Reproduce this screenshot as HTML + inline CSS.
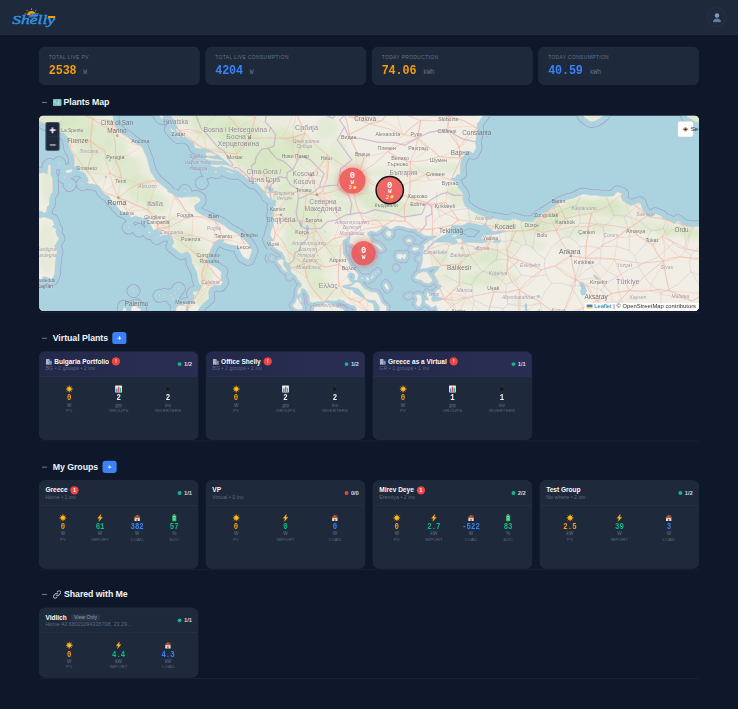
<!DOCTYPE html>
<html lang="en">
<head>
<meta charset="utf-8">
<title>Shelly Solar Dashboard</title>
<style>
*{box-sizing:border-box;margin:0;padding:0}
html,body{width:738px;height:709px;overflow:hidden;background:#0f172a}
#vp{position:absolute;left:0;top:0;width:738px;height:709px;overflow:hidden;overflow:clip;contain:strict}
body{font-family:"Liberation Sans",sans-serif;color:#f1f5f9}
#app{width:1512px;height:1453px;transform:scale(0.488095);transform-origin:0 0;background:#0f172a;position:relative}
.mono{font-family:"Liberation Mono",monospace}
header{height:71px;background:#1e293b;border-bottom:1px solid #2b374b;position:relative}
.logo{position:absolute;left:24px;top:17px;width:96px;height:42px}
.user{position:absolute;right:24px;top:15px;width:40px;height:40px;border-radius:50%;background:#1f2a3d;border:1.5px solid #2d3b52}
.user svg{position:absolute;left:11px;top:10px}
main{padding:25px 80px 0 80px}
.stats{display:flex;gap:12px;height:78px;margin-bottom:22px}
.stat{flex:1;background:#1e293b;border:1px solid #283548;border-radius:12px;padding:15px 19px 0 19px}
.stat .l{font-size:10px;letter-spacing:.8px;color:#64748b;text-transform:uppercase;line-height:11px;height:11px}
.stat .v{margin-top:8.5px;line-height:28px;height:28px;white-space:nowrap}
.stat .v b{font-family:"Liberation Mono",monospace;font-size:24px;font-weight:700;letter-spacing:-.2px;display:inline-block;transform:scaleY(1.14);transform-origin:50% 72%}
.stat .v i{font-family:"Liberation Mono",monospace;font-style:normal;font-size:13px;color:#64748b;margin-left:14px}
.amber{color:#f59e0b}.blue{color:#3b82f6}.green{color:#10b981}.white{color:#f1f5f9}
section{border-bottom:1px solid #212c40;padding-bottom:2px;margin-bottom:39px}
.sh{display:flex;align-items:center;height:25px;padding-left:6px;margin-bottom:16px;position:relative}
.sh>*{position:relative;top:1px}
.sh .tg{top:1px}
.sh .tg{width:10px;height:2px;background:#6f7e95;font-size:0;margin-right:12px;overflow:hidden}
.sh h2{font-size:18px;font-weight:700;color:#f1f5f9;line-height:25px;display:flex;align-items:center;letter-spacing:-.1px}
.sh h2 svg{margin-right:3px}
.sh .add{width:29px;height:25px;border-radius:6px;background:#3b82f6;margin-left:9px;position:relative}
.sh .add:before{content:"";position:absolute;left:11px;top:12px;width:7px;height:1.6px;background:#fff}
.sh .add:after{content:"";position:absolute;left:13.7px;top:9.3px;width:1.6px;height:7px;background:#fff}
#map{height:400px;border-radius:9px;overflow:hidden;position:relative;background:#aad3df}
#map>svg{position:absolute;left:0;top:0;width:1352px;height:400px;display:block}
.zoomc{position:absolute;left:13px;top:13px;width:29px;height:59px;background:#1e293b;border:1px solid #334155;border-radius:4px}
.zoomc:before{content:"";position:absolute;left:0;right:0;top:29px;height:1px;background:#334155}
.zoomc i{position:absolute;background:#fff}
.eyec{position:absolute;left:1308px;top:11px;width:33px;height:33px;background:#fff;border-radius:5px;border:1px solid #c9c9c9}
.eyetxt{position:absolute;left:1335px;top:20px;font-size:12.5px;font-weight:400;color:#222;line-height:16px}
.attr{position:absolute;right:0;bottom:0;height:17.5px;background:rgba(255,255,255,.82);font-size:12px;line-height:17.5px;padding:0 6px 0 5px;color:#333;white-space:nowrap;border-top-left-radius:2px}
.attr a{color:#0078a8;text-decoration:none}
.attr .flag{display:inline-block;width:12px;height:8px;vertical-align:-0.5px;margin-right:3px;background:linear-gradient(#4c7be1 50%,#ffd500 50%)}
.mk{position:absolute;border-radius:50%;background:rgba(239,80,80,.86);color:#fff;text-align:center;font-family:"Liberation Mono",monospace}
.mk span{position:absolute;left:0;right:0;display:block;text-align:center}
.mk .n{font-weight:700;font-size:18px;line-height:19px;transform:scaleY(1.08);margin-top:1px}
.mk .u{font-size:10px;line-height:11px;font-weight:700;transform:scaleX(1.25);margin-top:1px}
.mk .c{font-size:10.5px;line-height:9px;margin-top:1px;font-family:"Liberation Sans",sans-serif;padding-right:9px}
.mk .c i{position:absolute;left:50%;margin-left:1.5px;top:1.5px;width:5.5px;height:6px;background:#fde047;border-radius:2px;transform:skewX(-14deg)}
.grid{display:flex;gap:16px}
.card{width:326px;height:181px;background:#1e293b;border:1px solid #283548;border-radius:12px;overflow:hidden;position:relative}
.card.short{height:142.5px}
.ch{height:51px;border-bottom:1px solid #2c394e;padding:11px 12px 0 12px;position:relative}
.vp .ch{background:linear-gradient(100deg,#22294a,#2b2e54);border-bottom-color:#32375c}
.ch .t{font-size:13.4px;font-weight:700;line-height:17px;height:17px;color:#f8fafc;display:flex;align-items:center;white-space:nowrap}
.ch .t svg{margin-right:4px}
.ch .s{font-size:11px;line-height:13px;color:#5b6a82;margin-top:-1px;white-space:nowrap}
.bd{display:inline-block;width:17px;height:17px;border-radius:50%;background:#ef4444;color:#fff;font-size:10px;font-weight:700;line-height:17px;text-align:center;margin-left:6px}
.vo{display:inline-block;margin-left:8px;font-size:10.5px;font-weight:400;color:#94a3b8;background:#283447;border-radius:3px;padding:0 7px;line-height:15px;height:15px}
.st{position:absolute;right:12px;top:18px;font-size:12px;font-weight:700;color:#cbd5e1;line-height:14px;display:flex;align-items:center;letter-spacing:-.2px}
.st:before{content:"";width:8px;height:8px;border-radius:50%;background:#10b981;margin-right:5px}
.st.red:before{background:#ef4444}
.ms{display:flex;padding:17px 10px 0 10px}
.m{flex:1;text-align:center}
.m .ic{height:17px;display:block;margin:0 auto}
.m .ic svg{display:block;margin:0 auto}
.m .n{font-family:"Liberation Mono",monospace;font-weight:700;font-size:15px;line-height:16px;margin-top:2.5px;display:block;transform:scaleY(1.13)}
.m .u{font-size:9.5px;line-height:12px;color:#64748b;display:block;margin-top:-0.5px}
.m .k{font-size:9px;line-height:11px;color:#5a6981;display:block;margin-top:-0.5px;letter-spacing:.3px;text-transform:uppercase}
</style>
</head>
<body>
<svg width="0" height="0" style="position:absolute">
<defs>
<symbol id="i-sun" viewBox="0 0 16 16"><g stroke="#f59e0b" stroke-width="1.8" stroke-linecap="round"><path d="M8 1.8v1.6M8 12.6V14.2M1.8 8h1.6M12.6 8h1.6M3.6 3.6l1.2 1.2M11.2 11.2l1.2 1.2M3.6 12.4l1.2-1.2M11.2 4.8l1.2-1.2"/></g><circle cx="8" cy="8" r="4.3" fill="#fbbf24" stroke="#f59e0b" stroke-width="1"/></symbol>
<symbol id="i-bolt" viewBox="0 0 16 16"><path d="M9.8 0.8L3.2 9h3.9L5.6 15.2 12.8 6.6H8.7z" fill="#fbbf24" stroke="#f59e0b" stroke-width=".8" stroke-linejoin="round"/></symbol>
<symbol id="i-house" viewBox="0 0 16 16"><path d="M2.6 7.2h10.8V14.6H2.6z" fill="#f3e3cf"/><path d="M8 1.2L.8 7.8h14.4z" fill="#b5532f"/><path d="M6.6 10h2.8v4.6H6.6z" fill="#8a5a3c"/><path d="M3.6 8.6h2v2h-2zM10.4 8.6h2v2h-2z" fill="#7cc4ee"/><path d="M11 2.2h1.8v3H11z" fill="#9a4a2a"/></symbol>
<symbol id="i-bat" viewBox="0 0 16 16"><rect x="6" y=".6" width="4" height="2" rx=".6" fill="#9aa5b1"/><rect x="3.6" y="2" width="8.8" height="13.4" rx="1.6" fill="#22a35a"/><rect x="5.2" y="4" width="5.6" height="9.6" rx=".8" fill="#7be495"/><rect x="5.2" y="6.4" width="5.6" height="1" fill="#22a35a"/><rect x="5.2" y="9.6" width="5.6" height="1" fill="#22a35a"/></symbol>
<symbol id="i-chart" viewBox="0 0 16 16"><rect x="1" y="1" width="14" height="14" rx="1.2" fill="#e8eef5"/><rect x="2.8" y="7" width="2.8" height="7" fill="#3b82f6"/><rect x="6.6" y="3.4" width="2.8" height="10.6" fill="#ef4444"/><rect x="10.4" y="5.6" width="2.8" height="8.4" fill="#22c55e"/></symbol>
<symbol id="i-plug" viewBox="0 0 16 16"><path d="M9.2 1.2l1.3 1.3-2 2 2.6 2.6 2-2 1.3 1.3-2 2 .9.9-1.7 1.7c-1.5 1.5-3.6 1.6-5.1.5L3.6 14.4 1.8 12.600l2.9-2.9c-1.1-1.5-1-3.6.5-5.100l1.7-1.7.9.9z" fill="#14171e" stroke="#4a4f5c" stroke-width=".7"/></symbol>
<symbol id="i-bld" viewBox="0 0 16 16"><rect x="1.4" y="2" width="8.4" height="13" fill="#c3cad6"/><rect x="9.8" y="6" width="5" height="9" fill="#9aa5b8"/><g fill="#5f7aa8"><rect x="2.8" y="3.6" width="1.8" height="1.8"/><rect x="6.2" y="3.6" width="1.8" height="1.8"/><rect x="2.8" y="6.8" width="1.8" height="1.8"/><rect x="6.2" y="6.8" width="1.8" height="1.8"/><rect x="2.8" y="10" width="1.8" height="1.8"/><rect x="6.2" y="10" width="1.8" height="1.8"/><rect x="11.4" y="7.8" width="1.8" height="1.8"/><rect x="11.4" y="11" width="1.8" height="1.8"/></g><rect x="4.6" y="12.6" width="2" height="2.4" fill="#6b5a4a"/></symbol>
<symbol id="i-map" viewBox="0 0 20 16"><rect x=".8" y=".8" width="17.4" height="14.4" rx="1" fill="#6fbfe8"/><path d="M2.5 4.5c1.5-1.5 3.5-1 4 .5s-.5 3-2 3.5-2.5-.5-2-4zM9 9c1.5-2 4-2.5 5.5-1s1.5 4-.5 5-4.5.5-5.5-1 0-2 .5-3zM12 2.5c1-.8 2.5-.5 3 .5s-.5 2-1.5 2-2-1.5-1.5-2.5z" fill="#b6dc7a"/><path d="M6.600.8v14.400M12.400.8v14.4" stroke="#e8f3fa" stroke-width=".8" opacity=".7"/><rect x=".8" y=".8" width="17.4" height="14.4" rx="1" fill="none" stroke="#cfe3ee" stroke-width="1"/></symbol>
<symbol id="i-link" viewBox="0 0 16 16"><g fill="none" stroke="#9aa6b6" stroke-width="1.9" stroke-linecap="round"><path d="M6.8 9.200a3.1 3.1 0 0 0 4.4 0l2.6-2.600a3.1 3.1 0 0 0-4.4-4.400L8.3 3.3"/><path d="M9.2 6.800a3.1 3.1 0 0 0-4.4 0L2.2 9.400a3.1 3.1 0 0 0 4.4 4.400l1.1-1.1"/></g></symbol>
</defs>
</svg>
<div id="vp"><div id="app">
<header>
  <svg class="logo" viewBox="0 0 96 42">
    <g stroke="#f5a524" stroke-width="1.7" stroke-linecap="round"><path d="M40.5 2.4v-2M32.600 5.6l-1.700-1.700M48.400 5.6l1.700-1.700M29.400 11.5h-2.200M51.600 11.5h2.2"/></g>
    <path d="M31.500 14.5a9 9 0 0 1 18 0z" fill="#f59e0b"/>
    <path d="M39 10.5h17.5l-5 8.500H33z" fill="#2a6cb4"/>
    <path d="M44 10.5l-5 8.500M50 10.5l-5 8.500M36.500 14.5h17.5" stroke="#6fb0ea" stroke-width=".8" fill="none"/>
    <text x="1" y="31.2" font-family="Liberation Serif, serif" font-style="italic" font-weight="7" font-size="27.5" fill="#3192e0" stroke="#3192e0" stroke-width=".9" textLength="88" lengthAdjust="spacingAndGlyphs">Shelly</text>
    <rect x="74.5" y="15.8" width="14.5" height="4" rx=".8" fill="#f59e0b"/>
  </svg>
  <div class="user"><svg width="18" height="20" viewBox="0 0 18 20"><circle cx="9" cy="6" r="4.6" fill="#7f9bbd"/><path d="M.8 19.500c0-5 3.6-7.6 8.2-7.600s8.2 2.6 8.2 7.600z" fill="#5f7da3"/></svg></div>
</header>
<main>
<div class="stats">
  <div class="stat"><div class="l">Total Live PV</div><div class="v"><b class="amber">2538</b><i>W</i></div></div>
  <div class="stat"><div class="l">Total Live Consumption</div><div class="v"><b class="blue">4204</b><i>W</i></div></div>
  <div class="stat"><div class="l">Today Production</div><div class="v"><b class="amber">74.06</b><i>kWh</i></div></div>
  <div class="stat"><div class="l">Today Consumption</div><div class="v"><b class="blue">40.59</b><i>kWh</i></div></div>
</div>

<section>
  <div class="sh"><span class="tg">&#8211;</span><h2><svg width="19" height="16"><use href="#i-map"/></svg>Plants Map</h2></div>
  <div id="map">
<svg viewBox="0 0 659.5 194.6" preserveAspectRatio="none">
<defs><clipPath id="landclip"><path d="M-9.6 -22.5L73.7 -22.5L73.7 -2.7L74.4 5.1L75.9 10.0L77.1 11.9L80.8 16.2L84.6 19.0L88.4 20.8L90.8 23.0L95.3 26.7L99.3 29.5L101.7 29.8L103.9 31.9L105.0 35.6L106.6 39.3L108.2 43.2L109.9 50.2L111.7 56.3L117.5 64.7L121.5 68.0L128.4 73.7L128.8 75.8L134.8 78.8L138.6 81.2L142.6 81.2L148.6 80.9L154.4 80.9L157.2 80.3L161.0 82.4L161.2 85.4L158.1 87.5L155.2 89.9L155.9 93.1L157.0 95.2L160.4 97.6L163.2 99.0L166.4 100.2L170.4 102.3L176.3 104.7L180.6 106.4L184.1 108.5L185.9 110.0L189.7 113.2L194.8 115.8L200.3 119.1L202.6 121.4L208.1 126.4L211.0 130.4L213.0 134.5L211.4 138.3L209.9 142.9L209.0 143.5L203.9 140.9L201.2 136.2L199.2 130.1L191.9 129.0L187.0 127.5L183.7 125.8L184.3 124.0L180.3 123.1L176.6 125.2L175.2 127.5L172.6 131.9L171.5 133.9L170.4 138.0L168.8 141.5L168.8 145.5L168.6 147.2L173.7 149.3L178.1 152.1L182.1 155.9L182.8 155.0L181.9 159.3L182.1 164.2L183.7 165.6L181.5 169.3L179.7 169.1L175.5 168.8L171.0 171.6L169.2 175.3L169.9 182.1L165.9 185.8L163.7 187.2L161.0 190.6L159.2 193.5L158.4 196.8L151.5 197.1L149.0 194.9L149.0 191.8L148.8 188.7L150.8 187.8L153.5 184.7L154.6 182.7L155.5 179.3L153.2 177.3L154.8 175.6L159.9 174.5L161.9 172.2L161.9 168.8L160.4 167.9L158.6 162.8L157.7 156.2L155.7 152.1L153.0 147.0L152.4 143.2L152.1 140.9L150.8 138.0L148.8 135.7L145.7 136.2L143.0 137.7L140.8 136.8L135.5 132.5L132.6 130.4L134.6 127.5L134.6 125.5L132.6 120.8L129.5 117.9L125.9 119.3L123.3 119.3L119.7 121.1L120.8 119.3L123.3 117.3L121.9 115.8L118.1 113.2L115.3 113.8L114.4 114.9L113.5 112.9L111.0 107.9L109.9 105.2L107.5 102.0L103.5 102.3L99.9 101.1L95.9 99.9L91.5 102.0L91.0 99.6L85.0 96.4L81.9 95.2L78.2 91.3L74.6 86.9L73.1 85.7L69.7 80.3L65.3 77.9L63.5 76.1L61.5 72.2L58.6 69.2L52.4 68.0L50.4 68.0L47.7 66.8L49.3 65.3L48.8 62.3L45.5 57.2L43.3 56.0L40.0 54.8L40.6 51.1L36.6 50.2L34.6 50.8L35.5 47.2L34.6 39.6L31.5 34.4L30.4 31.9L29.7 27.9L29.1 22.1L24.6 17.1L20.4 17.1L20.0 15.6L15.1 12.8L10.2 9.7L6.2 8.8L4.9 7.2L2.4 6.6L-9.6 5.7Z M127.3 -22.5L128.1 -4.3L129.9 -1.2L133.7 2.6L136.6 6.3L137.0 8.8L138.4 11.3L139.7 14.4L142.1 17.4L144.6 19.9L148.6 22.7L152.1 25.5L154.6 26.4L155.2 30.7L156.4 32.5L162.6 32.8L166.8 33.1L172.3 35.3L179.7 39.6L186.8 45.7L188.8 47.2L193.0 51.1L188.1 49.3L179.2 47.8L182.6 50.5L194.8 54.2L199.0 55.1L203.4 59.3L206.3 61.4L212.8 67.1L217.0 66.8L220.1 70.1L222.3 72.5L225.7 76.1L228.3 80.9L231.9 83.3L236.8 84.5L236.5 89.9L233.7 91.3L234.8 95.2L233.4 99.0L234.3 104.1L233.7 110.0L231.9 114.4L230.8 118.8L234.3 124.6L230.1 125.5L232.1 129.0L237.9 133.3L240.1 134.8L242.8 136.2L245.9 141.5L245.9 144.9L249.9 148.4L251.7 152.1L251.2 154.7L254.8 158.5L256.5 159.6L259.2 164.5L262.5 167.6L261.9 170.8L259.7 171.3L258.1 175.0L258.1 178.7L261.4 177.3L262.1 172.2L265.4 172.8L268.1 175.9L269.9 179.9L270.3 185.5L273.6 186.4L277.6 185.5L281.9 185.5L285.2 185.5L286.5 183.8L290.3 184.4L295.4 184.7L298.7 184.1L299.9 182.7L301.9 184.1L304.3 184.1L306.3 186.4L309.2 187.8L312.5 189.2L314.7 189.2L317.0 191.2L317.0 208.9L335.8 208.9L334.7 190.6L333.6 187.0L329.2 185.8L327.0 183.6L325.8 181.9L322.5 180.7L318.7 178.7L314.7 176.5L313.2 173.6L307.6 172.8L302.5 170.2L304.1 169.1L311.4 167.9L313.6 165.9L311.4 165.6L310.3 163.6L308.5 160.8L308.5 158.5L311.2 156.2L315.2 157.9L315.9 161.6L314.3 163.6L317.0 164.2L318.5 162.5L319.2 158.8L316.1 154.4L315.2 153.6L311.0 149.8L309.6 146.4L306.7 141.5L304.1 137.7L303.6 129.9L303.6 124.6L306.3 123.1L309.2 120.2L311.2 119.3L310.7 123.1L309.6 126.9L313.9 128.7L318.7 130.7L319.9 132.2L319.4 135.7L320.7 138.9L324.7 139.7L329.2 140.0L326.3 138.0L322.5 135.7L320.5 131.9L322.3 129.9L325.8 131.0L327.4 131.3L329.8 135.1L332.5 138.3L334.3 139.7L334.5 138.0L334.3 135.1L330.3 132.2L328.7 130.7L328.5 127.8L331.4 127.2L334.3 128.1L338.1 131.3L341.4 134.2L343.6 133.3L339.2 128.1L332.1 126.1L331.0 122.9L329.8 120.5L328.1 118.2L328.3 116.7L331.4 114.9L337.0 116.1L341.4 113.5L343.8 110.2L347.6 110.5L350.3 112.6L352.5 112.9L356.9 110.2L359.8 110.0L363.6 110.5L368.1 112.3L373.6 112.9L376.3 113.2L379.8 116.4L380.9 116.7L384.7 119.6L390.9 120.2L398.0 119.6L396.9 121.1L390.3 124.6L384.0 129.0L385.2 130.7L383.2 136.5L384.7 135.7L387.6 133.3L388.0 131.6L394.0 125.8L398.0 122.6L403.6 119.9L406.9 118.2L410.3 113.8L412.7 109.1L418.0 109.1L422.7 109.4L429.1 106.4L436.5 107.9L441.4 109.4L445.4 108.5L446.9 105.5L447.8 101.7L446.5 101.1L438.7 98.2L431.4 94.3L425.6 89.9L423.1 82.4L424.3 79.4L422.3 75.8L420.3 73.7L418.3 70.7L416.9 66.2L412.0 63.8L412.5 62.0L415.6 62.0L417.6 59.0L421.4 57.8L420.9 54.2L421.1 48.1L422.5 43.5L421.4 42.6L424.7 40.2L427.1 36.2L431.1 35.6L434.0 37.7L436.9 32.2L436.3 27.6L436.7 23.6L438.0 16.2L438.3 12.8L437.6 8.2L438.9 7.2L440.9 4.1L444.7 -1.2L445.8 -22.5Z M448.7 101.7L447.6 105.5L446.2 108.8L452.5 113.8L454.2 115.5L459.6 114.7L466.5 115.5L459.1 117.6L451.8 118.5L444.7 119.1L440.9 122.3L445.8 123.7L449.1 125.2L443.1 126.9L435.8 126.4L428.0 126.4L422.9 127.5L423.6 123.7L420.3 122.3L415.8 123.1L418.7 126.1L414.7 128.1L408.0 126.1L402.5 126.1L395.8 126.1L394.3 127.5L391.4 130.4L388.0 133.3L385.8 136.2L383.6 137.7L383.2 143.5L382.5 147.8L380.5 152.7L386.7 152.4L392.5 150.7L395.6 150.1L399.6 149.8L399.8 152.1L396.9 155.6L394.5 157.3L395.8 160.2L396.9 163.1L398.9 164.5L398.0 166.5L399.8 168.5L402.5 169.9L400.7 172.2L397.8 173.9L395.8 175.9L396.9 178.5L398.0 180.2L403.2 181.9L404.5 183.0L399.2 184.4L396.3 184.7L393.6 185.5L392.0 182.7L392.9 180.2L390.7 176.8L387.6 175.9L387.2 179.3L389.6 183.8L386.9 183.6L385.4 185.0L385.8 187.0L389.2 188.7L392.5 191.5L396.5 189.2L398.0 192.1L400.3 208.9L674.6 208.9L674.6 108.8L654.4 110.8L648.4 110.0L643.1 109.1L640.6 106.4L638.6 104.7L634.6 107.6L629.7 104.7L622.8 102.3L622.4 100.2L615.7 97.6L611.5 101.7L608.6 99.9L603.5 94.6L601.3 87.8L600.2 86.6L590.9 89.9L583.5 84.8L581.3 80.3L583.5 78.2L582.4 77.3L577.8 75.8L574.2 80.0L570.0 80.3L561.8 80.3L557.1 79.4L551.5 79.4L544.9 78.2L542.2 78.2L534.7 82.1L528.4 83.6L521.1 86.3L518.4 88.4L513.1 91.6L507.8 94.9L499.6 99.6L499.1 101.1L492.9 105.8L483.3 105.5L474.0 102.6L471.3 104.4L464.7 104.4L459.4 103.2L452.5 102.0Z M-9.6 94.3L3.7 95.8L5.3 97.3L7.3 96.1L8.2 90.7L10.4 88.4L10.4 83.0L11.5 78.8L13.7 75.8L13.7 69.8L13.3 62.3L11.5 57.8L12.0 54.8L11.5 49.9L10.4 48.4L9.1 49.6L8.6 54.8L8.2 58.4L6.0 56.9L2.6 57.2L-9.6 57.8Z M-9.6 103.2L5.7 101.1L10.0 102.6L13.7 104.1L15.3 108.5L13.1 110.8L17.7 113.2L16.4 115.2L17.7 119.3L20.0 122.3L17.5 126.6L15.5 129.6L18.0 135.4L17.3 139.4L16.6 142.6L16.0 149.3L15.5 157.9L13.1 163.6L10.4 162.2L7.1 160.8L4.2 160.5L2.0 164.8L-9.6 166.5Z M26.0 56.3L28.2 57.2L31.5 56.6L33.5 55.4L32.6 52.9L30.0 53.8L27.1 54.2Z M118.8 -22.5L119.7 -0.6L121.9 2.6L124.1 3.2L123.7 -0.6L122.6 -22.5Z M131.0 13.4L134.8 18.1L139.3 22.1L140.1 21.2L135.9 16.5L132.1 12.5Z M135.9 13.7L140.4 18.1L144.8 21.8L145.5 20.5L141.0 16.5L137.0 12.8Z M165.9 38.6L168.1 40.2L177.0 40.2L177.5 38.6L172.6 36.5L167.0 36.8Z M165.2 42.6L170.4 44.7L183.7 45.3L183.7 44.1L172.6 42.6L168.1 41.4Z M171.0 49.9L177.0 51.7L183.7 50.2L180.3 49.0L172.6 48.7Z M158.1 47.5L160.4 48.4L162.8 47.2L160.4 46.0Z M186.3 55.1L191.5 57.2L195.9 57.8L191.5 55.7L187.0 54.2Z M174.8 56.3L177.7 56.9L177.7 55.4L175.2 55.4Z M237.7 144.9L239.7 143.5L242.5 142.9L244.8 144.1L244.3 147.0L244.3 149.3L247.0 152.7L248.5 155.9L246.3 155.6L243.2 152.7L241.9 149.8L239.2 147.0Z M253.2 189.2L255.9 186.4L257.7 181.3L259.7 183.6L261.0 187.0L263.2 189.8L263.6 192.9L259.2 193.5L255.9 192.1Z M259.7 181.3L261.4 180.7L262.5 185.0L261.0 186.4Z M271.4 208.9L274.8 191.5L276.1 189.2L280.3 190.1L284.3 187.8L285.4 186.1L289.2 187.0L292.1 187.8L295.9 189.5L299.2 191.2L304.3 192.6L309.2 208.9Z M308.7 170.2L312.5 169.3L314.7 167.3L318.1 165.6L321.0 167.1L322.5 169.3L325.8 172.8L331.4 175.6L337.4 176.2L339.6 179.3L342.5 186.4L347.6 190.4L347.0 194.9L344.1 208.9L339.2 208.9L340.3 190.6L335.8 184.1L330.3 183.8L326.3 182.4L324.7 179.3L321.4 175.0L319.6 173.1L317.6 171.9L313.6 171.1Z M344.7 169.3L346.3 166.5L348.5 168.8L349.8 172.2L348.1 173.9L346.3 171.6Z M321.4 161.6L323.0 160.8L324.3 162.2L322.5 163.1Z M326.3 161.3L328.5 160.8L330.3 163.6L328.1 164.5Z M331.2 162.2L333.0 159.3L334.7 157.9L334.1 160.8L332.5 162.8Z M346.3 117.3L348.5 114.4L351.4 114.9L352.5 117.9L350.7 120.8L348.1 120.8Z M366.9 124.0L369.8 122.6L372.5 124.0L371.4 126.1L368.1 126.1Z M357.4 140.0L358.1 137.7L362.5 137.7L363.6 139.1L366.3 137.1L366.9 140.0L365.4 143.5L363.2 141.2L361.4 143.5L358.1 142.0Z M371.8 133.1L374.7 131.0L379.2 131.3L379.6 133.3L375.8 134.8Z M378.5 142.6L380.3 141.8L381.2 142.9L379.2 143.8Z M375.4 161.3L378.1 157.9L383.2 155.6L386.9 155.6L388.5 157.0L392.9 163.6L392.5 165.9L389.2 167.3L384.7 166.5L382.5 164.2L380.3 163.6L376.9 163.1Z M376.3 179.3L378.5 177.9L382.0 179.3L382.7 185.0L381.4 189.2L378.7 190.4L376.5 187.8L378.1 183.0Z M369.2 179.3L370.7 178.5L370.9 179.9Z M412.0 119.6L414.7 118.5L418.0 119.3L416.9 120.8L413.6 120.8Z M541.3 -22.5L543.5 0.1L546.2 2.6L551.1 6.0L555.8 5.4L560.6 2.6L564.6 -0.6L566.9 -22.5Z M643.5 -22.5L647.3 0.7L653.5 4.7L661.3 8.2L674.6 10.3L674.6 -22.5Z M135.9 208.9L137.0 191.2L140.1 188.7L143.7 188.7L147.0 187.2L149.2 187.5L147.2 190.1L145.9 208.9Z M89.3 208.9L92.6 190.4L97.3 188.7L98.8 191.5L101.5 192.1L103.7 208.9Z M93.6 174.8L94.4 174.0L95.2 174.8L94.4 175.6Z M132.9 181.3L133.7 180.5L134.5 181.3L133.7 182.1Z M130.7 179.0L131.5 178.2L132.3 179.0L131.5 179.8Z M138.7 172.5L139.5 171.7L140.3 172.5L139.5 173.3Z M133.4 183.6L134.1 182.8L134.9 183.6L134.1 184.4Z M124.5 178.7L125.3 177.9L126.0 178.7L125.3 179.5Z M119.6 179.6L120.4 178.8L121.1 179.6L120.4 180.4Z M135.6 176.8L136.4 176.0L137.1 176.8L136.4 177.5Z M88.7 111.4L89.5 110.6L90.3 111.4L89.5 112.2Z M99.2 114.4L99.9 113.5L100.7 114.4L99.9 115.2Z M109.0 116.4L110.4 115.0L111.7 116.4L110.4 117.8Z M116.9 121.7L117.7 120.9L118.5 121.7L117.7 122.5Z M43.0 68.0L43.7 67.2L44.5 68.0L43.7 68.9Z M29.8 68.9L30.6 68.1L31.4 68.9L30.6 69.8Z M19.2 47.5L20.0 46.6L20.7 47.5L20.0 48.3Z M24.7 61.4L25.5 60.6L26.3 61.4L25.5 62.3Z M145.1 75.2L145.9 74.4L146.7 75.2L145.9 76.1Z M161.8 67.1L162.6 66.3L163.4 67.1L162.6 68.0Z M167.4 56.3L168.1 55.4L168.9 56.3L168.1 57.1Z M356.2 151.6L356.9 150.8L357.7 151.6L356.9 152.4Z M367.3 179.9L368.1 179.1L368.8 179.9L368.1 180.7Z M335.5 157.0L336.3 156.2L337.1 157.0L336.3 157.8Z M337.7 155.3L338.5 154.5L339.3 155.3L338.5 156.1Z M231.8 142.0L232.5 141.2L233.3 142.0L232.5 142.9Z M249.1 160.8L249.9 160.0L250.7 160.8L249.9 161.6Z M229.1 123.1L229.9 122.3L230.7 123.1L229.9 124.0Z M471.7 -20.9L472.5 -21.8L473.2 -20.9L472.5 -20.1Z M82.6 208.9L84.4 189.8L87.0 192.6L88.2 208.9Z"/></clipPath>
<filter id="bl" x="-20%" y="-20%" width="140%" height="140%"><feGaussianBlur stdDeviation="2.2"/></filter>
<filter id="bl2" x="-20%" y="-20%" width="140%" height="140%"><feGaussianBlur stdDeviation="0.35"/></filter></defs>
<rect width="659.5" height="194.6" fill="#abd3df"/>
<defs><clipPath id="aeg"><path d="M299.2 102.6L399.2 102.6L399.2 121.7L414.7 149.3L414.7 208.9L299.2 208.9Z M228.1 131.9L272.5 131.9L321.4 180.7L321.4 208.9L228.1 208.9Z"/></clipPath></defs><path d="M-9.6 -22.5L73.7 -22.5L73.7 -2.7L74.4 5.1L75.9 10.0L77.1 11.9L80.8 16.2L84.6 19.0L88.4 20.8L90.8 23.0L95.3 26.7L99.3 29.5L101.7 29.8L103.9 31.9L105.0 35.6L106.6 39.3L108.2 43.2L109.9 50.2L111.7 56.3L117.5 64.7L121.5 68.0L128.4 73.7L128.8 75.8L134.8 78.8L138.6 81.2L142.6 81.2L148.6 80.9L154.4 80.9L157.2 80.3L161.0 82.4L161.2 85.4L158.1 87.5L155.2 89.9L155.9 93.1L157.0 95.2L160.4 97.6L163.2 99.0L166.4 100.2L170.4 102.3L176.3 104.7L180.6 106.4L184.1 108.5L185.9 110.0L189.7 113.2L194.8 115.8L200.3 119.1L202.6 121.4L208.1 126.4L211.0 130.4L213.0 134.5L211.4 138.3L209.9 142.9L209.0 143.5L203.9 140.9L201.2 136.2L199.2 130.1L191.9 129.0L187.0 127.5L183.7 125.8L184.3 124.0L180.3 123.1L176.6 125.2L175.2 127.5L172.6 131.9L171.5 133.9L170.4 138.0L168.8 141.5L168.8 145.5L168.6 147.2L173.7 149.3L178.1 152.1L182.1 155.9L182.8 155.0L181.9 159.3L182.1 164.2L183.7 165.6L181.5 169.3L179.7 169.1L175.5 168.8L171.0 171.6L169.2 175.3L169.9 182.1L165.9 185.8L163.7 187.2L161.0 190.6L159.2 193.5L158.4 196.8L151.5 197.1L149.0 194.9L149.0 191.8L148.8 188.7L150.8 187.8L153.5 184.7L154.6 182.7L155.5 179.3L153.2 177.3L154.8 175.6L159.9 174.5L161.9 172.2L161.9 168.8L160.4 167.9L158.6 162.8L157.7 156.2L155.7 152.1L153.0 147.0L152.4 143.2L152.1 140.9L150.8 138.0L148.8 135.7L145.7 136.2L143.0 137.7L140.8 136.8L135.5 132.5L132.6 130.4L134.6 127.5L134.6 125.5L132.6 120.8L129.5 117.9L125.9 119.3L123.3 119.3L119.7 121.1L120.8 119.3L123.3 117.3L121.9 115.8L118.1 113.2L115.3 113.8L114.4 114.9L113.5 112.9L111.0 107.9L109.9 105.2L107.5 102.0L103.5 102.3L99.9 101.1L95.9 99.9L91.5 102.0L91.0 99.6L85.0 96.4L81.9 95.2L78.2 91.3L74.6 86.9L73.1 85.7L69.7 80.3L65.3 77.9L63.5 76.1L61.5 72.2L58.6 69.2L52.4 68.0L50.4 68.0L47.7 66.8L49.3 65.3L48.8 62.3L45.5 57.2L43.3 56.0L40.0 54.8L40.6 51.1L36.6 50.2L34.6 50.8L35.5 47.2L34.6 39.6L31.5 34.4L30.4 31.9L29.7 27.9L29.1 22.1L24.6 17.1L20.4 17.1L20.0 15.6L15.1 12.8L10.2 9.7L6.2 8.8L4.9 7.2L2.4 6.6L-9.6 5.7Z M127.3 -22.5L128.1 -4.3L129.9 -1.2L133.7 2.6L136.6 6.3L137.0 8.8L138.4 11.3L139.7 14.4L142.1 17.4L144.6 19.9L148.6 22.7L152.1 25.5L154.6 26.4L155.2 30.7L156.4 32.5L162.6 32.8L166.8 33.1L172.3 35.3L179.7 39.6L186.8 45.7L188.8 47.2L193.0 51.1L188.1 49.3L179.2 47.8L182.6 50.5L194.8 54.2L199.0 55.1L203.4 59.3L206.3 61.4L212.8 67.1L217.0 66.8L220.1 70.1L222.3 72.5L225.7 76.1L228.3 80.9L231.9 83.3L236.8 84.5L236.5 89.9L233.7 91.3L234.8 95.2L233.4 99.0L234.3 104.1L233.7 110.0L231.9 114.4L230.8 118.8L234.3 124.6L230.1 125.5L232.1 129.0L237.9 133.3L240.1 134.8L242.8 136.2L245.9 141.5L245.9 144.9L249.9 148.4L251.7 152.1L251.2 154.7L254.8 158.5L256.5 159.6L259.2 164.5L262.5 167.6L261.9 170.8L259.7 171.3L258.1 175.0L258.1 178.7L261.4 177.3L262.1 172.2L265.4 172.8L268.1 175.9L269.9 179.9L270.3 185.5L273.6 186.4L277.6 185.5L281.9 185.5L285.2 185.5L286.5 183.8L290.3 184.4L295.4 184.7L298.7 184.1L299.9 182.7L301.9 184.1L304.3 184.1L306.3 186.4L309.2 187.8L312.5 189.2L314.7 189.2L317.0 191.2L317.0 208.9L335.8 208.9L334.7 190.6L333.6 187.0L329.2 185.8L327.0 183.6L325.8 181.9L322.5 180.7L318.7 178.7L314.7 176.5L313.2 173.6L307.6 172.8L302.5 170.2L304.1 169.1L311.4 167.9L313.6 165.9L311.4 165.6L310.3 163.6L308.5 160.8L308.5 158.5L311.2 156.2L315.2 157.9L315.9 161.6L314.3 163.6L317.0 164.2L318.5 162.5L319.2 158.8L316.1 154.4L315.2 153.6L311.0 149.8L309.6 146.4L306.7 141.5L304.1 137.7L303.6 129.9L303.6 124.6L306.3 123.1L309.2 120.2L311.2 119.3L310.7 123.1L309.6 126.9L313.9 128.7L318.7 130.7L319.9 132.2L319.4 135.7L320.7 138.9L324.7 139.7L329.2 140.0L326.3 138.0L322.5 135.7L320.5 131.9L322.3 129.9L325.8 131.0L327.4 131.3L329.8 135.1L332.5 138.3L334.3 139.7L334.5 138.0L334.3 135.1L330.3 132.2L328.7 130.7L328.5 127.8L331.4 127.2L334.3 128.1L338.1 131.3L341.4 134.2L343.6 133.3L339.2 128.1L332.1 126.1L331.0 122.9L329.8 120.5L328.1 118.2L328.3 116.7L331.4 114.9L337.0 116.1L341.4 113.5L343.8 110.2L347.6 110.5L350.3 112.6L352.5 112.9L356.9 110.2L359.8 110.0L363.6 110.5L368.1 112.3L373.6 112.9L376.3 113.2L379.8 116.4L380.9 116.7L384.7 119.6L390.9 120.2L398.0 119.6L396.9 121.1L390.3 124.6L384.0 129.0L385.2 130.7L383.2 136.5L384.7 135.7L387.6 133.3L388.0 131.6L394.0 125.8L398.0 122.6L403.6 119.9L406.9 118.2L410.3 113.8L412.7 109.1L418.0 109.1L422.7 109.4L429.1 106.4L436.5 107.9L441.4 109.4L445.4 108.5L446.9 105.5L447.8 101.7L446.5 101.1L438.7 98.2L431.4 94.3L425.6 89.9L423.1 82.4L424.3 79.4L422.3 75.8L420.3 73.7L418.3 70.7L416.9 66.2L412.0 63.8L412.5 62.0L415.6 62.0L417.6 59.0L421.4 57.8L420.9 54.2L421.1 48.1L422.5 43.5L421.4 42.6L424.7 40.2L427.1 36.2L431.1 35.6L434.0 37.7L436.9 32.2L436.3 27.6L436.7 23.6L438.0 16.2L438.3 12.8L437.6 8.2L438.9 7.2L440.9 4.1L444.7 -1.2L445.8 -22.5Z M448.7 101.7L447.6 105.5L446.2 108.8L452.5 113.8L454.2 115.5L459.6 114.7L466.5 115.5L459.1 117.6L451.8 118.5L444.7 119.1L440.9 122.3L445.8 123.7L449.1 125.2L443.1 126.9L435.8 126.4L428.0 126.4L422.9 127.5L423.6 123.7L420.3 122.3L415.8 123.1L418.7 126.1L414.7 128.1L408.0 126.1L402.5 126.1L395.8 126.1L394.3 127.5L391.4 130.4L388.0 133.3L385.8 136.2L383.6 137.7L383.2 143.5L382.5 147.8L380.5 152.7L386.7 152.4L392.5 150.7L395.6 150.1L399.6 149.8L399.8 152.1L396.9 155.6L394.5 157.3L395.8 160.2L396.9 163.1L398.9 164.5L398.0 166.5L399.8 168.5L402.5 169.9L400.7 172.2L397.8 173.9L395.8 175.9L396.9 178.5L398.0 180.2L403.2 181.9L404.5 183.0L399.2 184.4L396.3 184.7L393.6 185.5L392.0 182.7L392.9 180.2L390.7 176.8L387.6 175.9L387.2 179.3L389.6 183.8L386.9 183.6L385.4 185.0L385.8 187.0L389.2 188.7L392.5 191.5L396.5 189.2L398.0 192.1L400.3 208.9L674.6 208.9L674.6 108.8L654.4 110.8L648.4 110.0L643.1 109.1L640.6 106.4L638.6 104.7L634.6 107.6L629.7 104.7L622.8 102.3L622.4 100.2L615.7 97.6L611.5 101.7L608.6 99.9L603.5 94.6L601.3 87.8L600.2 86.6L590.9 89.9L583.5 84.8L581.3 80.3L583.5 78.2L582.4 77.3L577.8 75.8L574.2 80.0L570.0 80.3L561.8 80.3L557.1 79.4L551.5 79.4L544.9 78.2L542.2 78.2L534.7 82.1L528.4 83.6L521.1 86.3L518.4 88.4L513.1 91.6L507.8 94.9L499.6 99.6L499.1 101.1L492.9 105.8L483.3 105.5L474.0 102.6L471.3 104.4L464.7 104.4L459.4 103.2L452.5 102.0Z M-9.6 94.3L3.7 95.8L5.3 97.3L7.3 96.1L8.2 90.7L10.4 88.4L10.4 83.0L11.5 78.8L13.7 75.8L13.7 69.8L13.3 62.3L11.5 57.8L12.0 54.8L11.5 49.9L10.4 48.4L9.1 49.6L8.6 54.8L8.2 58.4L6.0 56.9L2.6 57.2L-9.6 57.8Z M-9.6 103.2L5.7 101.1L10.0 102.6L13.7 104.1L15.3 108.5L13.1 110.8L17.7 113.2L16.4 115.2L17.7 119.3L20.0 122.3L17.5 126.6L15.5 129.6L18.0 135.4L17.3 139.4L16.6 142.6L16.0 149.3L15.5 157.9L13.1 163.6L10.4 162.2L7.1 160.8L4.2 160.5L2.0 164.8L-9.6 166.5Z M26.0 56.3L28.2 57.2L31.5 56.6L33.5 55.4L32.6 52.9L30.0 53.8L27.1 54.2Z M118.8 -22.5L119.7 -0.6L121.9 2.6L124.1 3.2L123.7 -0.6L122.6 -22.5Z M131.0 13.4L134.8 18.1L139.3 22.1L140.1 21.2L135.9 16.5L132.1 12.5Z M135.9 13.7L140.4 18.1L144.8 21.8L145.5 20.5L141.0 16.5L137.0 12.8Z M165.9 38.6L168.1 40.2L177.0 40.2L177.5 38.6L172.6 36.5L167.0 36.8Z M165.2 42.6L170.4 44.7L183.7 45.3L183.7 44.1L172.6 42.6L168.1 41.4Z M171.0 49.9L177.0 51.7L183.7 50.2L180.3 49.0L172.6 48.7Z M158.1 47.5L160.4 48.4L162.8 47.2L160.4 46.0Z M186.3 55.1L191.5 57.2L195.9 57.8L191.5 55.7L187.0 54.2Z M174.8 56.3L177.7 56.9L177.7 55.4L175.2 55.4Z M237.7 144.9L239.7 143.5L242.5 142.9L244.8 144.1L244.3 147.0L244.3 149.3L247.0 152.7L248.5 155.9L246.3 155.6L243.2 152.7L241.9 149.8L239.2 147.0Z M253.2 189.2L255.9 186.4L257.7 181.3L259.7 183.6L261.0 187.0L263.2 189.8L263.6 192.9L259.2 193.5L255.9 192.1Z M259.7 181.3L261.4 180.7L262.5 185.0L261.0 186.4Z M271.4 208.9L274.8 191.5L276.1 189.2L280.3 190.1L284.3 187.8L285.4 186.1L289.2 187.0L292.1 187.8L295.9 189.5L299.2 191.2L304.3 192.6L309.2 208.9Z M308.7 170.2L312.5 169.3L314.7 167.3L318.1 165.6L321.0 167.1L322.5 169.3L325.8 172.8L331.4 175.6L337.4 176.2L339.6 179.3L342.5 186.4L347.6 190.4L347.0 194.9L344.1 208.9L339.2 208.9L340.3 190.6L335.8 184.1L330.3 183.8L326.3 182.4L324.7 179.3L321.4 175.0L319.6 173.1L317.6 171.9L313.6 171.1Z M344.7 169.3L346.3 166.5L348.5 168.8L349.8 172.2L348.1 173.9L346.3 171.6Z M321.4 161.6L323.0 160.8L324.3 162.2L322.5 163.1Z M326.3 161.3L328.5 160.8L330.3 163.6L328.1 164.5Z M331.2 162.2L333.0 159.3L334.7 157.9L334.1 160.8L332.5 162.8Z M346.3 117.3L348.5 114.4L351.4 114.9L352.5 117.9L350.7 120.8L348.1 120.8Z M366.9 124.0L369.8 122.6L372.5 124.0L371.4 126.1L368.1 126.1Z M357.4 140.0L358.1 137.7L362.5 137.7L363.6 139.1L366.3 137.1L366.9 140.0L365.4 143.5L363.2 141.2L361.4 143.5L358.1 142.0Z M371.8 133.1L374.7 131.0L379.2 131.3L379.6 133.3L375.8 134.8Z M378.5 142.6L380.3 141.8L381.2 142.9L379.2 143.8Z M375.4 161.3L378.1 157.9L383.2 155.6L386.9 155.6L388.5 157.0L392.9 163.6L392.5 165.9L389.2 167.3L384.7 166.5L382.5 164.2L380.3 163.6L376.9 163.1Z M376.3 179.3L378.5 177.9L382.0 179.3L382.7 185.0L381.4 189.2L378.7 190.4L376.5 187.8L378.1 183.0Z M369.2 179.3L370.7 178.5L370.9 179.9Z M412.0 119.6L414.7 118.5L418.0 119.3L416.9 120.8L413.6 120.8Z M541.3 -22.5L543.5 0.1L546.2 2.6L551.1 6.0L555.8 5.4L560.6 2.6L564.6 -0.6L566.9 -22.5Z M643.5 -22.5L647.3 0.7L653.5 4.7L661.3 8.2L674.6 10.3L674.6 -22.5Z M135.9 208.9L137.0 191.2L140.1 188.7L143.7 188.7L147.0 187.2L149.2 187.5L147.2 190.1L145.9 208.9Z M89.3 208.9L92.6 190.4L97.3 188.7L98.8 191.5L101.5 192.1L103.7 208.9Z M93.6 174.8L94.4 174.0L95.2 174.8L94.4 175.6Z M132.9 181.3L133.7 180.5L134.5 181.3L133.7 182.1Z M130.7 179.0L131.5 178.2L132.3 179.0L131.5 179.8Z M138.7 172.5L139.5 171.7L140.3 172.5L139.5 173.3Z M133.4 183.6L134.1 182.8L134.9 183.6L134.1 184.4Z M124.5 178.7L125.3 177.9L126.0 178.7L125.3 179.5Z M119.6 179.6L120.4 178.8L121.1 179.6L120.4 180.4Z M135.6 176.8L136.4 176.0L137.1 176.8L136.4 177.5Z M88.7 111.4L89.5 110.6L90.3 111.4L89.5 112.2Z M99.2 114.4L99.9 113.5L100.7 114.4L99.9 115.2Z M109.0 116.4L110.4 115.0L111.7 116.4L110.4 117.8Z M116.9 121.7L117.7 120.9L118.5 121.7L117.7 122.5Z M43.0 68.0L43.7 67.2L44.5 68.0L43.7 68.9Z M29.8 68.9L30.6 68.1L31.4 68.9L30.6 69.8Z M19.2 47.5L20.0 46.6L20.7 47.5L20.0 48.3Z M24.7 61.4L25.5 60.6L26.3 61.4L25.5 62.3Z M145.1 75.2L145.9 74.4L146.7 75.2L145.9 76.1Z M161.8 67.1L162.6 66.3L163.4 67.1L162.6 68.0Z M167.4 56.3L168.1 55.4L168.9 56.3L168.1 57.1Z M356.2 151.6L356.9 150.8L357.7 151.6L356.9 152.4Z M367.3 179.9L368.1 179.1L368.8 179.9L368.1 180.7Z M335.5 157.0L336.3 156.2L337.1 157.0L336.3 157.8Z M337.7 155.3L338.5 154.5L339.3 155.3L338.5 156.1Z M231.8 142.0L232.5 141.2L233.3 142.0L232.5 142.9Z M249.1 160.8L249.9 160.0L250.7 160.8L249.9 161.6Z M229.1 123.1L229.9 122.3L230.7 123.1L229.9 124.0Z M471.7 -20.9L472.5 -21.8L473.2 -20.9L472.5 -20.1Z M82.6 208.9L84.4 189.8L87.0 192.6L88.2 208.9Z" fill="none" stroke="#a3a4c8" stroke-width="12.5" stroke-linejoin="round" opacity="1"/><path d="M-9.6 -22.5L73.7 -22.5L73.7 -2.7L74.4 5.1L75.9 10.0L77.1 11.9L80.8 16.2L84.6 19.0L88.4 20.8L90.8 23.0L95.3 26.7L99.3 29.5L101.7 29.8L103.9 31.9L105.0 35.6L106.6 39.3L108.2 43.2L109.9 50.2L111.7 56.3L117.5 64.7L121.5 68.0L128.4 73.7L128.8 75.8L134.8 78.8L138.6 81.2L142.6 81.2L148.6 80.9L154.4 80.9L157.2 80.3L161.0 82.4L161.2 85.4L158.1 87.5L155.2 89.9L155.9 93.1L157.0 95.2L160.4 97.6L163.2 99.0L166.4 100.2L170.4 102.3L176.3 104.7L180.6 106.4L184.1 108.5L185.9 110.0L189.7 113.2L194.8 115.8L200.3 119.1L202.6 121.4L208.1 126.4L211.0 130.4L213.0 134.5L211.4 138.3L209.9 142.9L209.0 143.5L203.9 140.9L201.2 136.2L199.2 130.1L191.9 129.0L187.0 127.5L183.7 125.8L184.3 124.0L180.3 123.1L176.6 125.2L175.2 127.5L172.6 131.9L171.5 133.9L170.4 138.0L168.8 141.5L168.8 145.5L168.6 147.2L173.7 149.3L178.1 152.1L182.1 155.9L182.8 155.0L181.9 159.3L182.1 164.2L183.7 165.6L181.5 169.3L179.7 169.1L175.5 168.8L171.0 171.6L169.2 175.3L169.9 182.1L165.9 185.8L163.7 187.2L161.0 190.6L159.2 193.5L158.4 196.8L151.5 197.1L149.0 194.9L149.0 191.8L148.8 188.7L150.8 187.8L153.5 184.7L154.6 182.7L155.5 179.3L153.2 177.3L154.8 175.6L159.9 174.5L161.9 172.2L161.9 168.8L160.4 167.9L158.6 162.8L157.7 156.2L155.7 152.1L153.0 147.0L152.4 143.2L152.1 140.9L150.8 138.0L148.8 135.7L145.7 136.2L143.0 137.7L140.8 136.8L135.5 132.5L132.6 130.4L134.6 127.5L134.6 125.5L132.6 120.8L129.5 117.9L125.9 119.3L123.3 119.3L119.7 121.1L120.8 119.3L123.3 117.3L121.9 115.8L118.1 113.2L115.3 113.8L114.4 114.9L113.5 112.9L111.0 107.9L109.9 105.2L107.5 102.0L103.5 102.3L99.9 101.1L95.9 99.9L91.5 102.0L91.0 99.6L85.0 96.4L81.9 95.2L78.2 91.3L74.6 86.9L73.1 85.7L69.7 80.3L65.3 77.9L63.5 76.1L61.5 72.2L58.6 69.2L52.4 68.0L50.4 68.0L47.7 66.8L49.3 65.3L48.8 62.3L45.5 57.2L43.3 56.0L40.0 54.8L40.6 51.1L36.6 50.2L34.6 50.8L35.5 47.2L34.6 39.6L31.5 34.4L30.4 31.9L29.7 27.9L29.1 22.1L24.6 17.1L20.4 17.1L20.0 15.6L15.1 12.8L10.2 9.7L6.2 8.8L4.9 7.2L2.4 6.6L-9.6 5.7Z M127.3 -22.5L128.1 -4.3L129.9 -1.2L133.7 2.6L136.6 6.3L137.0 8.8L138.4 11.3L139.7 14.4L142.1 17.4L144.6 19.9L148.6 22.7L152.1 25.5L154.6 26.4L155.2 30.7L156.4 32.5L162.6 32.8L166.8 33.1L172.3 35.3L179.7 39.6L186.8 45.7L188.8 47.2L193.0 51.1L188.1 49.3L179.2 47.8L182.6 50.5L194.8 54.2L199.0 55.1L203.4 59.3L206.3 61.4L212.8 67.1L217.0 66.8L220.1 70.1L222.3 72.5L225.7 76.1L228.3 80.9L231.9 83.3L236.8 84.5L236.5 89.9L233.7 91.3L234.8 95.2L233.4 99.0L234.3 104.1L233.7 110.0L231.9 114.4L230.8 118.8L234.3 124.6L230.1 125.5L232.1 129.0L237.9 133.3L240.1 134.8L242.8 136.2L245.9 141.5L245.9 144.9L249.9 148.4L251.7 152.1L251.2 154.7L254.8 158.5L256.5 159.6L259.2 164.5L262.5 167.6L261.9 170.8L259.7 171.3L258.1 175.0L258.1 178.7L261.4 177.3L262.1 172.2L265.4 172.8L268.1 175.9L269.9 179.9L270.3 185.5L273.6 186.4L277.6 185.5L281.9 185.5L285.2 185.5L286.5 183.8L290.3 184.4L295.4 184.7L298.7 184.1L299.9 182.7L301.9 184.1L304.3 184.1L306.3 186.4L309.2 187.8L312.5 189.2L314.7 189.2L317.0 191.2L317.0 208.9L335.8 208.9L334.7 190.6L333.6 187.0L329.2 185.8L327.0 183.6L325.8 181.9L322.5 180.7L318.7 178.7L314.7 176.5L313.2 173.6L307.6 172.8L302.5 170.2L304.1 169.1L311.4 167.9L313.6 165.9L311.4 165.6L310.3 163.6L308.5 160.8L308.5 158.5L311.2 156.2L315.2 157.9L315.9 161.6L314.3 163.6L317.0 164.2L318.5 162.5L319.2 158.8L316.1 154.4L315.2 153.6L311.0 149.8L309.6 146.4L306.7 141.5L304.1 137.7L303.6 129.9L303.6 124.6L306.3 123.1L309.2 120.2L311.2 119.3L310.7 123.1L309.6 126.9L313.9 128.7L318.7 130.7L319.9 132.2L319.4 135.7L320.7 138.9L324.7 139.7L329.2 140.0L326.3 138.0L322.5 135.7L320.5 131.9L322.3 129.9L325.8 131.0L327.4 131.3L329.8 135.1L332.5 138.3L334.3 139.7L334.5 138.0L334.3 135.1L330.3 132.2L328.7 130.7L328.5 127.8L331.4 127.2L334.3 128.1L338.1 131.3L341.4 134.2L343.6 133.3L339.2 128.1L332.1 126.1L331.0 122.9L329.8 120.5L328.1 118.2L328.3 116.7L331.4 114.9L337.0 116.1L341.4 113.5L343.8 110.2L347.6 110.5L350.3 112.6L352.5 112.9L356.9 110.2L359.8 110.0L363.6 110.5L368.1 112.3L373.6 112.9L376.3 113.2L379.8 116.4L380.9 116.7L384.7 119.6L390.9 120.2L398.0 119.6L396.9 121.1L390.3 124.6L384.0 129.0L385.2 130.7L383.2 136.5L384.7 135.7L387.6 133.3L388.0 131.6L394.0 125.8L398.0 122.6L403.6 119.9L406.9 118.2L410.3 113.8L412.7 109.1L418.0 109.1L422.7 109.4L429.1 106.4L436.5 107.9L441.4 109.4L445.4 108.5L446.9 105.5L447.8 101.7L446.5 101.1L438.7 98.2L431.4 94.3L425.6 89.9L423.1 82.4L424.3 79.4L422.3 75.8L420.3 73.7L418.3 70.7L416.9 66.2L412.0 63.8L412.5 62.0L415.6 62.0L417.6 59.0L421.4 57.8L420.9 54.2L421.1 48.1L422.5 43.5L421.4 42.6L424.7 40.2L427.1 36.2L431.1 35.6L434.0 37.7L436.9 32.2L436.3 27.6L436.7 23.6L438.0 16.2L438.3 12.8L437.6 8.2L438.9 7.2L440.9 4.1L444.7 -1.2L445.8 -22.5Z M448.7 101.7L447.6 105.5L446.2 108.8L452.5 113.8L454.2 115.5L459.6 114.7L466.5 115.5L459.1 117.6L451.8 118.5L444.7 119.1L440.9 122.3L445.8 123.7L449.1 125.2L443.1 126.9L435.8 126.4L428.0 126.4L422.9 127.5L423.6 123.7L420.3 122.3L415.8 123.1L418.7 126.1L414.7 128.1L408.0 126.1L402.5 126.1L395.8 126.1L394.3 127.5L391.4 130.4L388.0 133.3L385.8 136.2L383.6 137.7L383.2 143.5L382.5 147.8L380.5 152.7L386.7 152.4L392.5 150.7L395.6 150.1L399.6 149.8L399.8 152.1L396.9 155.6L394.5 157.3L395.8 160.2L396.9 163.1L398.9 164.5L398.0 166.5L399.8 168.5L402.5 169.9L400.7 172.2L397.8 173.9L395.8 175.9L396.9 178.5L398.0 180.2L403.2 181.9L404.5 183.0L399.2 184.4L396.3 184.7L393.6 185.5L392.0 182.7L392.9 180.2L390.7 176.8L387.6 175.9L387.2 179.3L389.6 183.8L386.9 183.6L385.4 185.0L385.8 187.0L389.2 188.7L392.5 191.5L396.5 189.2L398.0 192.1L400.3 208.9L674.6 208.9L674.6 108.8L654.4 110.8L648.4 110.0L643.1 109.1L640.6 106.4L638.6 104.7L634.6 107.6L629.7 104.7L622.8 102.3L622.4 100.2L615.7 97.6L611.5 101.7L608.6 99.9L603.5 94.6L601.3 87.8L600.2 86.6L590.9 89.9L583.5 84.8L581.3 80.3L583.5 78.2L582.4 77.3L577.8 75.8L574.2 80.0L570.0 80.3L561.8 80.3L557.1 79.4L551.5 79.4L544.9 78.2L542.2 78.2L534.7 82.1L528.4 83.6L521.1 86.3L518.4 88.4L513.1 91.6L507.8 94.9L499.6 99.6L499.1 101.1L492.9 105.8L483.3 105.5L474.0 102.6L471.3 104.4L464.7 104.4L459.4 103.2L452.5 102.0Z M-9.6 94.3L3.7 95.8L5.3 97.3L7.3 96.1L8.2 90.7L10.4 88.4L10.4 83.0L11.5 78.8L13.7 75.8L13.7 69.8L13.3 62.3L11.5 57.8L12.0 54.8L11.5 49.9L10.4 48.4L9.1 49.6L8.6 54.8L8.2 58.4L6.0 56.9L2.6 57.2L-9.6 57.8Z M-9.6 103.2L5.7 101.1L10.0 102.6L13.7 104.1L15.3 108.5L13.1 110.8L17.7 113.2L16.4 115.2L17.7 119.3L20.0 122.3L17.5 126.6L15.5 129.6L18.0 135.4L17.3 139.4L16.6 142.6L16.0 149.3L15.5 157.9L13.1 163.6L10.4 162.2L7.1 160.8L4.2 160.5L2.0 164.8L-9.6 166.5Z M26.0 56.3L28.2 57.2L31.5 56.6L33.5 55.4L32.6 52.9L30.0 53.8L27.1 54.2Z M118.8 -22.5L119.7 -0.6L121.9 2.6L124.1 3.2L123.7 -0.6L122.6 -22.5Z M131.0 13.4L134.8 18.1L139.3 22.1L140.1 21.2L135.9 16.5L132.1 12.5Z M135.9 13.7L140.4 18.1L144.8 21.8L145.5 20.5L141.0 16.5L137.0 12.8Z M165.9 38.6L168.1 40.2L177.0 40.2L177.5 38.6L172.6 36.5L167.0 36.8Z M165.2 42.6L170.4 44.7L183.7 45.3L183.7 44.1L172.6 42.6L168.1 41.4Z M171.0 49.9L177.0 51.7L183.7 50.2L180.3 49.0L172.6 48.7Z M158.1 47.5L160.4 48.4L162.8 47.2L160.4 46.0Z M186.3 55.1L191.5 57.2L195.9 57.8L191.5 55.7L187.0 54.2Z M174.8 56.3L177.7 56.9L177.7 55.4L175.2 55.4Z M237.7 144.9L239.7 143.5L242.5 142.9L244.8 144.1L244.3 147.0L244.3 149.3L247.0 152.7L248.5 155.9L246.3 155.6L243.2 152.7L241.9 149.8L239.2 147.0Z M253.2 189.2L255.9 186.4L257.7 181.3L259.7 183.6L261.0 187.0L263.2 189.8L263.6 192.9L259.2 193.5L255.9 192.1Z M259.7 181.3L261.4 180.7L262.5 185.0L261.0 186.4Z M271.4 208.9L274.8 191.5L276.1 189.2L280.3 190.1L284.3 187.8L285.4 186.1L289.2 187.0L292.1 187.8L295.9 189.5L299.2 191.2L304.3 192.6L309.2 208.9Z M308.7 170.2L312.5 169.3L314.7 167.3L318.1 165.6L321.0 167.1L322.5 169.3L325.8 172.8L331.4 175.6L337.4 176.2L339.6 179.3L342.5 186.4L347.6 190.4L347.0 194.9L344.1 208.9L339.2 208.9L340.3 190.6L335.8 184.1L330.3 183.8L326.3 182.4L324.7 179.3L321.4 175.0L319.6 173.1L317.6 171.9L313.6 171.1Z M344.7 169.3L346.3 166.5L348.5 168.8L349.8 172.2L348.1 173.9L346.3 171.6Z M321.4 161.6L323.0 160.8L324.3 162.2L322.5 163.1Z M326.3 161.3L328.5 160.8L330.3 163.6L328.1 164.5Z M331.2 162.2L333.0 159.3L334.7 157.9L334.1 160.8L332.5 162.8Z M346.3 117.3L348.5 114.4L351.4 114.9L352.5 117.9L350.7 120.8L348.1 120.8Z M366.9 124.0L369.8 122.6L372.5 124.0L371.4 126.1L368.1 126.1Z M357.4 140.0L358.1 137.7L362.5 137.7L363.6 139.1L366.3 137.1L366.9 140.0L365.4 143.5L363.2 141.2L361.4 143.5L358.1 142.0Z M371.8 133.1L374.7 131.0L379.2 131.3L379.6 133.3L375.8 134.8Z M378.5 142.6L380.3 141.8L381.2 142.9L379.2 143.8Z M375.4 161.3L378.1 157.9L383.2 155.6L386.9 155.6L388.5 157.0L392.9 163.6L392.5 165.9L389.2 167.3L384.7 166.5L382.5 164.2L380.3 163.6L376.9 163.1Z M376.3 179.3L378.5 177.9L382.0 179.3L382.7 185.0L381.4 189.2L378.7 190.4L376.5 187.8L378.1 183.0Z M369.2 179.3L370.7 178.5L370.9 179.9Z M412.0 119.6L414.7 118.5L418.0 119.3L416.9 120.8L413.6 120.8Z M541.3 -22.5L543.5 0.1L546.2 2.6L551.1 6.0L555.8 5.4L560.6 2.6L564.6 -0.6L566.9 -22.5Z M643.5 -22.5L647.3 0.7L653.5 4.7L661.3 8.2L674.6 10.3L674.6 -22.5Z M135.9 208.9L137.0 191.2L140.1 188.7L143.7 188.7L147.0 187.2L149.2 187.5L147.2 190.1L145.9 208.9Z M89.3 208.9L92.6 190.4L97.3 188.7L98.8 191.5L101.5 192.1L103.7 208.9Z M93.6 174.8L94.4 174.0L95.2 174.8L94.4 175.6Z M132.9 181.3L133.7 180.5L134.5 181.3L133.7 182.1Z M130.7 179.0L131.5 178.2L132.3 179.0L131.5 179.8Z M138.7 172.5L139.5 171.7L140.3 172.5L139.5 173.3Z M133.4 183.6L134.1 182.8L134.9 183.6L134.1 184.4Z M124.5 178.7L125.3 177.9L126.0 178.7L125.3 179.5Z M119.6 179.6L120.4 178.8L121.1 179.6L120.4 180.4Z M135.6 176.8L136.4 176.0L137.1 176.8L136.4 177.5Z M88.7 111.4L89.5 110.6L90.3 111.4L89.5 112.2Z M99.2 114.4L99.9 113.5L100.7 114.4L99.9 115.2Z M109.0 116.4L110.4 115.0L111.7 116.4L110.4 117.8Z M116.9 121.7L117.7 120.9L118.5 121.7L117.7 122.5Z M43.0 68.0L43.7 67.2L44.5 68.0L43.7 68.9Z M29.8 68.9L30.6 68.1L31.4 68.9L30.6 69.8Z M19.2 47.5L20.0 46.6L20.7 47.5L20.0 48.3Z M24.7 61.4L25.5 60.6L26.3 61.4L25.5 62.3Z M145.1 75.2L145.9 74.4L146.7 75.2L145.9 76.1Z M161.8 67.1L162.6 66.3L163.4 67.1L162.6 68.0Z M167.4 56.3L168.1 55.4L168.9 56.3L168.1 57.1Z M356.2 151.6L356.9 150.8L357.7 151.6L356.9 152.4Z M367.3 179.9L368.1 179.1L368.8 179.9L368.1 180.7Z M335.5 157.0L336.3 156.2L337.1 157.0L336.3 157.8Z M337.7 155.3L338.5 154.5L339.3 155.3L338.5 156.1Z M231.8 142.0L232.5 141.2L233.3 142.0L232.5 142.9Z M249.1 160.8L249.9 160.0L250.7 160.8L249.9 161.6Z M229.1 123.1L229.9 122.3L230.7 123.1L229.9 124.0Z M471.7 -20.9L472.5 -21.8L473.2 -20.9L472.5 -20.1Z M82.6 208.9L84.4 189.8L87.0 192.6L88.2 208.9Z" fill="none" stroke="#abd3df" stroke-width="10.9" stroke-linejoin="round"/><g clip-path="url(#aeg)"><rect x="-10" y="-10" width="700" height="220" fill="#abd3df"/><path d="M-9.6 -22.5L73.7 -22.5L73.7 -2.7L74.4 5.1L75.9 10.0L77.1 11.9L80.8 16.2L84.6 19.0L88.4 20.8L90.8 23.0L95.3 26.7L99.3 29.5L101.7 29.8L103.9 31.9L105.0 35.6L106.6 39.3L108.2 43.2L109.9 50.2L111.7 56.3L117.5 64.7L121.5 68.0L128.4 73.7L128.8 75.8L134.8 78.8L138.6 81.2L142.6 81.2L148.6 80.9L154.4 80.9L157.2 80.3L161.0 82.4L161.2 85.4L158.1 87.5L155.2 89.9L155.9 93.1L157.0 95.2L160.4 97.6L163.2 99.0L166.4 100.2L170.4 102.3L176.3 104.7L180.6 106.4L184.1 108.5L185.9 110.0L189.7 113.2L194.8 115.8L200.3 119.1L202.6 121.4L208.1 126.4L211.0 130.4L213.0 134.5L211.4 138.3L209.9 142.9L209.0 143.5L203.9 140.9L201.2 136.2L199.2 130.1L191.9 129.0L187.0 127.5L183.7 125.8L184.3 124.0L180.3 123.1L176.6 125.2L175.2 127.5L172.6 131.9L171.5 133.9L170.4 138.0L168.8 141.5L168.8 145.5L168.6 147.2L173.7 149.3L178.1 152.1L182.1 155.9L182.8 155.0L181.9 159.3L182.1 164.2L183.7 165.6L181.5 169.3L179.7 169.1L175.5 168.8L171.0 171.6L169.2 175.3L169.9 182.1L165.9 185.8L163.7 187.2L161.0 190.6L159.2 193.5L158.4 196.8L151.5 197.1L149.0 194.9L149.0 191.8L148.8 188.7L150.8 187.8L153.5 184.7L154.6 182.7L155.5 179.3L153.2 177.3L154.8 175.6L159.9 174.5L161.9 172.2L161.9 168.8L160.4 167.9L158.6 162.8L157.7 156.2L155.7 152.1L153.0 147.0L152.4 143.2L152.1 140.9L150.8 138.0L148.8 135.7L145.7 136.2L143.0 137.7L140.8 136.8L135.5 132.5L132.6 130.4L134.6 127.5L134.6 125.5L132.6 120.8L129.5 117.9L125.9 119.3L123.3 119.3L119.7 121.1L120.8 119.3L123.3 117.3L121.9 115.8L118.1 113.2L115.3 113.8L114.4 114.9L113.5 112.9L111.0 107.9L109.9 105.2L107.5 102.0L103.5 102.3L99.9 101.1L95.9 99.9L91.5 102.0L91.0 99.6L85.0 96.4L81.9 95.2L78.2 91.3L74.6 86.9L73.1 85.7L69.7 80.3L65.3 77.9L63.5 76.1L61.5 72.2L58.6 69.2L52.4 68.0L50.4 68.0L47.7 66.8L49.3 65.3L48.8 62.3L45.5 57.2L43.3 56.0L40.0 54.8L40.6 51.1L36.6 50.2L34.6 50.8L35.5 47.2L34.6 39.6L31.5 34.4L30.4 31.9L29.7 27.9L29.1 22.1L24.6 17.1L20.4 17.1L20.0 15.6L15.1 12.8L10.2 9.7L6.2 8.8L4.9 7.2L2.4 6.6L-9.6 5.7Z M127.3 -22.5L128.1 -4.3L129.9 -1.2L133.7 2.6L136.6 6.3L137.0 8.8L138.4 11.3L139.7 14.4L142.1 17.4L144.6 19.9L148.6 22.7L152.1 25.5L154.6 26.4L155.2 30.7L156.4 32.5L162.6 32.8L166.8 33.1L172.3 35.3L179.7 39.6L186.8 45.7L188.8 47.2L193.0 51.1L188.1 49.3L179.2 47.8L182.6 50.5L194.8 54.2L199.0 55.1L203.4 59.3L206.3 61.4L212.8 67.1L217.0 66.8L220.1 70.1L222.3 72.5L225.7 76.1L228.3 80.9L231.9 83.3L236.8 84.5L236.5 89.9L233.7 91.3L234.8 95.2L233.4 99.0L234.3 104.1L233.7 110.0L231.9 114.4L230.8 118.8L234.3 124.6L230.1 125.5L232.1 129.0L237.9 133.3L240.1 134.8L242.8 136.2L245.9 141.5L245.9 144.9L249.9 148.4L251.7 152.1L251.2 154.7L254.8 158.5L256.5 159.6L259.2 164.5L262.5 167.6L261.9 170.8L259.7 171.3L258.1 175.0L258.1 178.7L261.4 177.3L262.1 172.2L265.4 172.8L268.1 175.9L269.9 179.9L270.3 185.5L273.6 186.4L277.6 185.5L281.9 185.5L285.2 185.5L286.5 183.8L290.3 184.4L295.4 184.7L298.7 184.1L299.9 182.7L301.9 184.1L304.3 184.1L306.3 186.4L309.2 187.8L312.5 189.2L314.7 189.2L317.0 191.2L317.0 208.9L335.8 208.9L334.7 190.6L333.6 187.0L329.2 185.8L327.0 183.6L325.8 181.9L322.5 180.7L318.7 178.7L314.7 176.5L313.2 173.6L307.6 172.8L302.5 170.2L304.1 169.1L311.4 167.9L313.6 165.9L311.4 165.6L310.3 163.6L308.5 160.8L308.5 158.5L311.2 156.2L315.2 157.9L315.9 161.6L314.3 163.6L317.0 164.2L318.5 162.5L319.2 158.8L316.1 154.4L315.2 153.6L311.0 149.8L309.6 146.4L306.7 141.5L304.1 137.7L303.6 129.9L303.6 124.6L306.3 123.1L309.2 120.2L311.2 119.3L310.7 123.1L309.6 126.9L313.9 128.7L318.7 130.7L319.9 132.2L319.4 135.7L320.7 138.9L324.7 139.7L329.2 140.0L326.3 138.0L322.5 135.7L320.5 131.9L322.3 129.9L325.8 131.0L327.4 131.3L329.8 135.1L332.5 138.3L334.3 139.7L334.5 138.0L334.3 135.1L330.3 132.2L328.7 130.7L328.5 127.8L331.4 127.2L334.3 128.1L338.1 131.3L341.4 134.2L343.6 133.3L339.2 128.1L332.1 126.1L331.0 122.9L329.8 120.5L328.1 118.2L328.3 116.7L331.4 114.9L337.0 116.1L341.4 113.5L343.8 110.2L347.6 110.5L350.3 112.6L352.5 112.9L356.9 110.2L359.8 110.0L363.6 110.5L368.1 112.3L373.6 112.9L376.3 113.2L379.8 116.4L380.9 116.7L384.7 119.6L390.9 120.2L398.0 119.6L396.9 121.1L390.3 124.6L384.0 129.0L385.2 130.7L383.2 136.5L384.7 135.7L387.6 133.3L388.0 131.6L394.0 125.8L398.0 122.6L403.6 119.9L406.9 118.2L410.3 113.8L412.7 109.1L418.0 109.1L422.7 109.4L429.1 106.4L436.5 107.9L441.4 109.4L445.4 108.5L446.9 105.5L447.8 101.7L446.5 101.1L438.7 98.2L431.4 94.3L425.6 89.9L423.1 82.4L424.3 79.4L422.3 75.8L420.3 73.7L418.3 70.7L416.9 66.2L412.0 63.8L412.5 62.0L415.6 62.0L417.6 59.0L421.4 57.8L420.9 54.2L421.1 48.1L422.5 43.5L421.4 42.6L424.7 40.2L427.1 36.2L431.1 35.6L434.0 37.7L436.9 32.2L436.3 27.6L436.7 23.6L438.0 16.2L438.3 12.8L437.6 8.2L438.9 7.2L440.9 4.1L444.7 -1.2L445.8 -22.5Z M448.7 101.7L447.6 105.5L446.2 108.8L452.5 113.8L454.2 115.5L459.6 114.7L466.5 115.5L459.1 117.6L451.8 118.5L444.7 119.1L440.9 122.3L445.8 123.7L449.1 125.2L443.1 126.9L435.8 126.4L428.0 126.4L422.9 127.5L423.6 123.7L420.3 122.3L415.8 123.1L418.7 126.1L414.7 128.1L408.0 126.1L402.5 126.1L395.8 126.1L394.3 127.5L391.4 130.4L388.0 133.3L385.8 136.2L383.6 137.7L383.2 143.5L382.5 147.8L380.5 152.7L386.7 152.4L392.5 150.7L395.6 150.1L399.6 149.8L399.8 152.1L396.9 155.6L394.5 157.3L395.8 160.2L396.9 163.1L398.9 164.5L398.0 166.5L399.8 168.5L402.5 169.9L400.7 172.2L397.8 173.9L395.8 175.9L396.9 178.5L398.0 180.2L403.2 181.9L404.5 183.0L399.2 184.4L396.3 184.7L393.6 185.5L392.0 182.7L392.9 180.2L390.7 176.8L387.6 175.9L387.2 179.3L389.6 183.8L386.9 183.6L385.4 185.0L385.8 187.0L389.2 188.7L392.5 191.5L396.5 189.2L398.0 192.1L400.3 208.9L674.6 208.9L674.6 108.8L654.4 110.8L648.4 110.0L643.1 109.1L640.6 106.4L638.6 104.7L634.6 107.6L629.7 104.7L622.8 102.3L622.4 100.2L615.7 97.6L611.5 101.7L608.6 99.9L603.5 94.6L601.3 87.8L600.2 86.6L590.9 89.9L583.5 84.8L581.3 80.3L583.5 78.2L582.4 77.3L577.8 75.8L574.2 80.0L570.0 80.3L561.8 80.3L557.1 79.4L551.5 79.4L544.9 78.2L542.2 78.2L534.7 82.1L528.4 83.6L521.1 86.3L518.4 88.4L513.1 91.6L507.8 94.9L499.6 99.6L499.1 101.1L492.9 105.8L483.3 105.5L474.0 102.6L471.3 104.4L464.7 104.4L459.4 103.2L452.5 102.0Z M-9.6 94.3L3.7 95.8L5.3 97.3L7.3 96.1L8.2 90.7L10.4 88.4L10.4 83.0L11.5 78.8L13.7 75.8L13.7 69.8L13.3 62.3L11.5 57.8L12.0 54.8L11.5 49.9L10.4 48.4L9.1 49.6L8.6 54.8L8.2 58.4L6.0 56.9L2.6 57.2L-9.6 57.8Z M-9.6 103.2L5.7 101.1L10.0 102.6L13.7 104.1L15.3 108.5L13.1 110.8L17.7 113.2L16.4 115.2L17.7 119.3L20.0 122.3L17.5 126.6L15.5 129.6L18.0 135.4L17.3 139.4L16.6 142.6L16.0 149.3L15.5 157.9L13.1 163.6L10.4 162.2L7.1 160.8L4.2 160.5L2.0 164.8L-9.6 166.5Z M26.0 56.3L28.2 57.2L31.5 56.6L33.5 55.4L32.6 52.9L30.0 53.8L27.1 54.2Z M118.8 -22.5L119.7 -0.6L121.9 2.6L124.1 3.2L123.7 -0.6L122.6 -22.5Z M131.0 13.4L134.8 18.1L139.3 22.1L140.1 21.2L135.9 16.5L132.1 12.5Z M135.9 13.7L140.4 18.1L144.8 21.8L145.5 20.5L141.0 16.5L137.0 12.8Z M165.9 38.6L168.1 40.2L177.0 40.2L177.5 38.6L172.6 36.5L167.0 36.8Z M165.2 42.6L170.4 44.7L183.7 45.3L183.7 44.1L172.6 42.6L168.1 41.4Z M171.0 49.9L177.0 51.7L183.7 50.2L180.3 49.0L172.6 48.7Z M158.1 47.5L160.4 48.4L162.8 47.2L160.4 46.0Z M186.3 55.1L191.5 57.2L195.9 57.8L191.5 55.7L187.0 54.2Z M174.8 56.3L177.7 56.9L177.7 55.4L175.2 55.4Z M237.7 144.9L239.7 143.5L242.5 142.9L244.8 144.1L244.3 147.0L244.3 149.3L247.0 152.7L248.5 155.9L246.3 155.6L243.2 152.7L241.9 149.8L239.2 147.0Z M253.2 189.2L255.9 186.4L257.7 181.3L259.7 183.6L261.0 187.0L263.2 189.8L263.6 192.9L259.2 193.5L255.9 192.1Z M259.7 181.3L261.4 180.7L262.5 185.0L261.0 186.4Z M271.4 208.9L274.8 191.5L276.1 189.2L280.3 190.1L284.3 187.8L285.4 186.1L289.2 187.0L292.1 187.8L295.9 189.5L299.2 191.2L304.3 192.6L309.2 208.9Z M308.7 170.2L312.5 169.3L314.7 167.3L318.1 165.6L321.0 167.1L322.5 169.3L325.8 172.8L331.4 175.6L337.4 176.2L339.6 179.3L342.5 186.4L347.6 190.4L347.0 194.9L344.1 208.9L339.2 208.9L340.3 190.6L335.8 184.1L330.3 183.8L326.3 182.4L324.7 179.3L321.4 175.0L319.6 173.1L317.6 171.9L313.6 171.1Z M344.7 169.3L346.3 166.5L348.5 168.8L349.8 172.2L348.1 173.9L346.3 171.6Z M321.4 161.6L323.0 160.8L324.3 162.2L322.5 163.1Z M326.3 161.3L328.5 160.8L330.3 163.6L328.1 164.5Z M331.2 162.2L333.0 159.3L334.7 157.9L334.1 160.8L332.5 162.8Z M346.3 117.3L348.5 114.4L351.4 114.9L352.5 117.9L350.7 120.8L348.1 120.8Z M366.9 124.0L369.8 122.6L372.5 124.0L371.4 126.1L368.1 126.1Z M357.4 140.0L358.1 137.7L362.5 137.7L363.6 139.1L366.3 137.1L366.9 140.0L365.4 143.5L363.2 141.2L361.4 143.5L358.1 142.0Z M371.8 133.1L374.7 131.0L379.2 131.3L379.6 133.3L375.8 134.8Z M378.5 142.6L380.3 141.8L381.2 142.9L379.2 143.8Z M375.4 161.3L378.1 157.9L383.2 155.6L386.9 155.6L388.5 157.0L392.9 163.6L392.5 165.9L389.2 167.3L384.7 166.5L382.5 164.2L380.3 163.6L376.9 163.1Z M376.3 179.3L378.5 177.9L382.0 179.3L382.7 185.0L381.4 189.2L378.7 190.4L376.5 187.8L378.1 183.0Z M369.2 179.3L370.7 178.5L370.9 179.9Z M412.0 119.6L414.7 118.5L418.0 119.3L416.9 120.8L413.6 120.8Z M541.3 -22.5L543.5 0.1L546.2 2.6L551.1 6.0L555.8 5.4L560.6 2.6L564.6 -0.6L566.9 -22.5Z M643.5 -22.5L647.3 0.7L653.5 4.7L661.3 8.2L674.6 10.3L674.6 -22.5Z M135.9 208.9L137.0 191.2L140.1 188.7L143.7 188.7L147.0 187.2L149.2 187.5L147.2 190.1L145.9 208.9Z M89.3 208.9L92.6 190.4L97.3 188.7L98.8 191.5L101.5 192.1L103.7 208.9Z M93.6 174.8L94.4 174.0L95.2 174.8L94.4 175.6Z M132.9 181.3L133.7 180.5L134.5 181.3L133.7 182.1Z M130.7 179.0L131.5 178.2L132.3 179.0L131.5 179.8Z M138.7 172.5L139.5 171.7L140.3 172.5L139.5 173.3Z M133.4 183.6L134.1 182.8L134.9 183.6L134.1 184.4Z M124.5 178.7L125.3 177.9L126.0 178.7L125.3 179.5Z M119.6 179.6L120.4 178.8L121.1 179.6L120.4 180.4Z M135.6 176.8L136.4 176.0L137.1 176.8L136.4 177.5Z M88.7 111.4L89.5 110.6L90.3 111.4L89.5 112.2Z M99.2 114.4L99.9 113.5L100.7 114.4L99.9 115.2Z M109.0 116.4L110.4 115.0L111.7 116.4L110.4 117.8Z M116.9 121.7L117.7 120.9L118.5 121.7L117.7 122.5Z M43.0 68.0L43.7 67.2L44.5 68.0L43.7 68.9Z M29.8 68.9L30.6 68.1L31.4 68.9L30.6 69.8Z M19.2 47.5L20.0 46.6L20.7 47.5L20.0 48.3Z M24.7 61.4L25.5 60.6L26.3 61.4L25.5 62.3Z M145.1 75.2L145.9 74.4L146.7 75.2L145.9 76.1Z M161.8 67.1L162.6 66.3L163.4 67.1L162.6 68.0Z M167.4 56.3L168.1 55.4L168.9 56.3L168.1 57.1Z M356.2 151.6L356.9 150.8L357.7 151.6L356.9 152.4Z M367.3 179.9L368.1 179.1L368.8 179.9L368.1 180.7Z M335.5 157.0L336.3 156.2L337.1 157.0L336.3 157.8Z M337.7 155.3L338.5 154.5L339.3 155.3L338.5 156.1Z M231.8 142.0L232.5 141.2L233.3 142.0L232.5 142.9Z M249.1 160.8L249.9 160.0L250.7 160.8L249.9 161.6Z M229.1 123.1L229.9 122.3L230.7 123.1L229.9 124.0Z M471.7 -20.9L472.5 -21.8L473.2 -20.9L472.5 -20.1Z M82.6 208.9L84.4 189.8L87.0 192.6L88.2 208.9Z" fill="none" stroke="#b0b3d1" stroke-width="7.4" stroke-linejoin="round"/><path d="M-9.6 -22.5L73.7 -22.5L73.7 -2.7L74.4 5.1L75.9 10.0L77.1 11.9L80.8 16.2L84.6 19.0L88.4 20.8L90.8 23.0L95.3 26.7L99.3 29.5L101.7 29.8L103.9 31.9L105.0 35.6L106.6 39.3L108.2 43.2L109.9 50.2L111.7 56.3L117.5 64.7L121.5 68.0L128.4 73.7L128.8 75.8L134.8 78.8L138.6 81.2L142.6 81.2L148.6 80.9L154.4 80.9L157.2 80.3L161.0 82.4L161.2 85.4L158.1 87.5L155.2 89.9L155.9 93.1L157.0 95.2L160.4 97.6L163.2 99.0L166.4 100.2L170.4 102.3L176.3 104.7L180.6 106.4L184.1 108.5L185.9 110.0L189.7 113.2L194.8 115.8L200.3 119.1L202.6 121.4L208.1 126.4L211.0 130.4L213.0 134.5L211.4 138.3L209.9 142.9L209.0 143.5L203.9 140.9L201.2 136.2L199.2 130.1L191.9 129.0L187.0 127.5L183.7 125.8L184.3 124.0L180.3 123.1L176.6 125.2L175.2 127.5L172.6 131.9L171.5 133.9L170.4 138.0L168.8 141.5L168.8 145.5L168.6 147.2L173.7 149.3L178.1 152.1L182.1 155.9L182.8 155.0L181.9 159.3L182.1 164.2L183.7 165.6L181.5 169.3L179.7 169.1L175.5 168.8L171.0 171.6L169.2 175.3L169.9 182.1L165.9 185.8L163.7 187.2L161.0 190.6L159.2 193.5L158.4 196.8L151.5 197.1L149.0 194.9L149.0 191.8L148.8 188.7L150.8 187.8L153.5 184.7L154.6 182.7L155.5 179.3L153.2 177.3L154.8 175.6L159.9 174.5L161.9 172.2L161.9 168.8L160.4 167.9L158.6 162.8L157.7 156.2L155.7 152.1L153.0 147.0L152.4 143.2L152.1 140.9L150.8 138.0L148.8 135.7L145.7 136.2L143.0 137.7L140.8 136.8L135.5 132.5L132.6 130.4L134.6 127.5L134.6 125.5L132.6 120.8L129.5 117.9L125.9 119.3L123.3 119.3L119.7 121.1L120.8 119.3L123.3 117.3L121.9 115.8L118.1 113.2L115.3 113.8L114.4 114.9L113.5 112.9L111.0 107.9L109.9 105.2L107.5 102.0L103.5 102.3L99.9 101.1L95.9 99.9L91.5 102.0L91.0 99.6L85.0 96.4L81.9 95.2L78.2 91.3L74.6 86.9L73.1 85.7L69.7 80.3L65.3 77.9L63.5 76.1L61.5 72.2L58.6 69.2L52.4 68.0L50.4 68.0L47.7 66.8L49.3 65.3L48.8 62.3L45.5 57.2L43.3 56.0L40.0 54.8L40.6 51.1L36.6 50.2L34.6 50.8L35.5 47.2L34.6 39.6L31.5 34.4L30.4 31.9L29.7 27.9L29.1 22.1L24.6 17.1L20.4 17.1L20.0 15.6L15.1 12.8L10.2 9.7L6.2 8.8L4.9 7.2L2.4 6.6L-9.6 5.7Z M127.3 -22.5L128.1 -4.3L129.9 -1.2L133.7 2.6L136.6 6.3L137.0 8.8L138.4 11.3L139.7 14.4L142.1 17.4L144.6 19.9L148.6 22.7L152.1 25.5L154.6 26.4L155.2 30.7L156.4 32.5L162.6 32.8L166.8 33.1L172.3 35.3L179.7 39.6L186.8 45.7L188.8 47.2L193.0 51.1L188.1 49.3L179.2 47.8L182.6 50.5L194.8 54.2L199.0 55.1L203.4 59.3L206.3 61.4L212.8 67.1L217.0 66.8L220.1 70.1L222.3 72.5L225.7 76.1L228.3 80.9L231.9 83.3L236.8 84.5L236.5 89.9L233.7 91.3L234.8 95.2L233.4 99.0L234.3 104.1L233.7 110.0L231.9 114.4L230.8 118.8L234.3 124.6L230.1 125.5L232.1 129.0L237.9 133.3L240.1 134.8L242.8 136.2L245.9 141.5L245.9 144.9L249.9 148.4L251.7 152.1L251.2 154.7L254.8 158.5L256.5 159.6L259.2 164.5L262.5 167.6L261.9 170.8L259.7 171.3L258.1 175.0L258.1 178.7L261.4 177.3L262.1 172.2L265.4 172.8L268.1 175.9L269.9 179.9L270.3 185.5L273.6 186.4L277.6 185.5L281.9 185.5L285.2 185.5L286.5 183.8L290.3 184.4L295.4 184.7L298.7 184.1L299.9 182.7L301.9 184.1L304.3 184.1L306.3 186.4L309.2 187.8L312.5 189.2L314.7 189.2L317.0 191.2L317.0 208.9L335.8 208.9L334.7 190.6L333.6 187.0L329.2 185.8L327.0 183.6L325.8 181.9L322.5 180.7L318.7 178.7L314.7 176.5L313.2 173.6L307.6 172.8L302.5 170.2L304.1 169.1L311.4 167.9L313.6 165.9L311.4 165.6L310.3 163.6L308.5 160.8L308.5 158.5L311.2 156.2L315.2 157.9L315.9 161.6L314.3 163.6L317.0 164.2L318.5 162.5L319.2 158.8L316.1 154.4L315.2 153.6L311.0 149.8L309.6 146.4L306.7 141.5L304.1 137.7L303.6 129.9L303.6 124.6L306.3 123.1L309.2 120.2L311.2 119.3L310.7 123.1L309.6 126.9L313.9 128.7L318.7 130.7L319.9 132.2L319.4 135.7L320.7 138.9L324.7 139.7L329.2 140.0L326.3 138.0L322.5 135.7L320.5 131.9L322.3 129.9L325.8 131.0L327.4 131.3L329.8 135.1L332.5 138.3L334.3 139.7L334.5 138.0L334.3 135.1L330.3 132.2L328.7 130.7L328.5 127.8L331.4 127.2L334.3 128.1L338.1 131.3L341.4 134.2L343.6 133.3L339.2 128.1L332.1 126.1L331.0 122.9L329.8 120.5L328.1 118.2L328.3 116.7L331.4 114.9L337.0 116.1L341.4 113.5L343.8 110.2L347.6 110.5L350.3 112.6L352.5 112.9L356.9 110.2L359.8 110.0L363.6 110.5L368.1 112.3L373.6 112.9L376.3 113.2L379.8 116.4L380.9 116.7L384.7 119.6L390.9 120.2L398.0 119.6L396.9 121.1L390.3 124.6L384.0 129.0L385.2 130.7L383.2 136.5L384.7 135.7L387.6 133.3L388.0 131.6L394.0 125.8L398.0 122.6L403.6 119.9L406.9 118.2L410.3 113.8L412.7 109.1L418.0 109.1L422.7 109.4L429.1 106.4L436.5 107.9L441.4 109.4L445.4 108.5L446.9 105.5L447.8 101.7L446.5 101.1L438.7 98.2L431.4 94.3L425.6 89.9L423.1 82.4L424.3 79.4L422.3 75.8L420.3 73.7L418.3 70.7L416.9 66.2L412.0 63.8L412.5 62.0L415.6 62.0L417.6 59.0L421.4 57.8L420.9 54.2L421.1 48.1L422.5 43.5L421.4 42.6L424.7 40.2L427.1 36.2L431.1 35.6L434.0 37.7L436.9 32.2L436.3 27.6L436.7 23.6L438.0 16.2L438.3 12.8L437.6 8.2L438.9 7.2L440.9 4.1L444.7 -1.2L445.8 -22.5Z M448.7 101.7L447.6 105.5L446.2 108.8L452.5 113.8L454.2 115.5L459.6 114.7L466.5 115.5L459.1 117.6L451.8 118.5L444.7 119.1L440.9 122.3L445.8 123.7L449.1 125.2L443.1 126.9L435.8 126.4L428.0 126.4L422.9 127.5L423.6 123.7L420.3 122.3L415.8 123.1L418.7 126.1L414.7 128.1L408.0 126.1L402.5 126.1L395.8 126.1L394.3 127.5L391.4 130.4L388.0 133.3L385.8 136.2L383.6 137.7L383.2 143.5L382.5 147.8L380.5 152.7L386.7 152.4L392.5 150.7L395.6 150.1L399.6 149.8L399.8 152.1L396.9 155.6L394.5 157.3L395.8 160.2L396.9 163.1L398.9 164.5L398.0 166.5L399.8 168.5L402.5 169.9L400.7 172.2L397.8 173.9L395.8 175.9L396.9 178.5L398.0 180.2L403.2 181.9L404.5 183.0L399.2 184.4L396.3 184.7L393.6 185.5L392.0 182.7L392.9 180.2L390.7 176.8L387.6 175.9L387.2 179.3L389.6 183.8L386.9 183.6L385.4 185.0L385.8 187.0L389.2 188.7L392.5 191.5L396.5 189.2L398.0 192.1L400.3 208.9L674.6 208.9L674.6 108.8L654.4 110.8L648.4 110.0L643.1 109.1L640.6 106.4L638.6 104.7L634.6 107.6L629.7 104.7L622.8 102.3L622.4 100.2L615.7 97.6L611.5 101.7L608.6 99.9L603.5 94.6L601.3 87.8L600.2 86.6L590.9 89.9L583.5 84.8L581.3 80.3L583.5 78.2L582.4 77.3L577.8 75.8L574.2 80.0L570.0 80.3L561.8 80.3L557.1 79.4L551.5 79.4L544.9 78.2L542.2 78.2L534.7 82.1L528.4 83.6L521.1 86.3L518.4 88.4L513.1 91.6L507.8 94.9L499.6 99.6L499.1 101.1L492.9 105.8L483.3 105.5L474.0 102.6L471.3 104.4L464.7 104.4L459.4 103.2L452.5 102.0Z M-9.6 94.3L3.7 95.8L5.3 97.3L7.3 96.1L8.2 90.7L10.4 88.4L10.4 83.0L11.5 78.8L13.7 75.8L13.7 69.8L13.3 62.3L11.5 57.8L12.0 54.8L11.5 49.9L10.4 48.4L9.1 49.6L8.6 54.8L8.2 58.4L6.0 56.9L2.6 57.2L-9.6 57.8Z M-9.6 103.2L5.7 101.1L10.0 102.6L13.7 104.1L15.3 108.5L13.1 110.8L17.7 113.2L16.4 115.2L17.7 119.3L20.0 122.3L17.5 126.6L15.5 129.6L18.0 135.4L17.3 139.4L16.6 142.6L16.0 149.3L15.5 157.9L13.1 163.6L10.4 162.2L7.1 160.8L4.2 160.5L2.0 164.8L-9.6 166.5Z M26.0 56.3L28.2 57.2L31.5 56.6L33.5 55.4L32.6 52.9L30.0 53.8L27.1 54.2Z M118.8 -22.5L119.7 -0.6L121.9 2.6L124.1 3.2L123.7 -0.6L122.6 -22.5Z M131.0 13.4L134.8 18.1L139.3 22.1L140.1 21.2L135.9 16.5L132.1 12.5Z M135.9 13.7L140.4 18.1L144.8 21.8L145.5 20.5L141.0 16.5L137.0 12.8Z M165.9 38.6L168.1 40.2L177.0 40.2L177.5 38.6L172.6 36.5L167.0 36.8Z M165.2 42.6L170.4 44.7L183.7 45.3L183.7 44.1L172.6 42.6L168.1 41.4Z M171.0 49.9L177.0 51.7L183.7 50.2L180.3 49.0L172.6 48.7Z M158.1 47.5L160.4 48.4L162.8 47.2L160.4 46.0Z M186.3 55.1L191.5 57.2L195.9 57.8L191.5 55.7L187.0 54.2Z M174.8 56.3L177.7 56.9L177.7 55.4L175.2 55.4Z M237.7 144.9L239.7 143.5L242.5 142.9L244.8 144.1L244.3 147.0L244.3 149.3L247.0 152.7L248.5 155.9L246.3 155.6L243.2 152.7L241.9 149.8L239.2 147.0Z M253.2 189.2L255.9 186.4L257.7 181.3L259.7 183.6L261.0 187.0L263.2 189.8L263.6 192.9L259.2 193.5L255.9 192.1Z M259.7 181.3L261.4 180.7L262.5 185.0L261.0 186.4Z M271.4 208.9L274.8 191.5L276.1 189.2L280.3 190.1L284.3 187.8L285.4 186.1L289.2 187.0L292.1 187.8L295.9 189.5L299.2 191.2L304.3 192.6L309.2 208.9Z M308.7 170.2L312.5 169.3L314.7 167.3L318.1 165.6L321.0 167.1L322.5 169.3L325.8 172.8L331.4 175.6L337.4 176.2L339.6 179.3L342.5 186.4L347.6 190.4L347.0 194.9L344.1 208.9L339.2 208.9L340.3 190.6L335.8 184.1L330.3 183.8L326.3 182.4L324.7 179.3L321.4 175.0L319.6 173.1L317.6 171.9L313.6 171.1Z M344.7 169.3L346.3 166.5L348.5 168.8L349.8 172.2L348.1 173.9L346.3 171.6Z M321.4 161.6L323.0 160.8L324.3 162.2L322.5 163.1Z M326.3 161.3L328.5 160.8L330.3 163.6L328.1 164.5Z M331.2 162.2L333.0 159.3L334.7 157.9L334.1 160.8L332.5 162.8Z M346.3 117.3L348.5 114.4L351.4 114.9L352.5 117.9L350.7 120.8L348.1 120.8Z M366.9 124.0L369.8 122.6L372.5 124.0L371.4 126.1L368.1 126.1Z M357.4 140.0L358.1 137.7L362.5 137.7L363.6 139.1L366.3 137.1L366.9 140.0L365.4 143.5L363.2 141.2L361.4 143.5L358.1 142.0Z M371.8 133.1L374.7 131.0L379.2 131.3L379.6 133.3L375.8 134.8Z M378.5 142.6L380.3 141.8L381.2 142.9L379.2 143.8Z M375.4 161.3L378.1 157.9L383.2 155.6L386.9 155.6L388.5 157.0L392.9 163.6L392.5 165.9L389.2 167.3L384.7 166.5L382.5 164.2L380.3 163.6L376.9 163.1Z M376.3 179.3L378.5 177.9L382.0 179.3L382.7 185.0L381.4 189.2L378.7 190.4L376.5 187.8L378.1 183.0Z M369.2 179.3L370.7 178.5L370.9 179.9Z M412.0 119.6L414.7 118.5L418.0 119.3L416.9 120.8L413.6 120.8Z M541.3 -22.5L543.5 0.1L546.2 2.6L551.1 6.0L555.8 5.4L560.6 2.6L564.6 -0.6L566.9 -22.5Z M643.5 -22.5L647.3 0.7L653.5 4.7L661.3 8.2L674.6 10.3L674.6 -22.5Z M135.9 208.9L137.0 191.2L140.1 188.7L143.7 188.7L147.0 187.2L149.2 187.5L147.2 190.1L145.9 208.9Z M89.3 208.9L92.6 190.4L97.3 188.7L98.8 191.5L101.5 192.1L103.7 208.9Z M93.6 174.8L94.4 174.0L95.2 174.8L94.4 175.6Z M132.9 181.3L133.7 180.5L134.5 181.3L133.7 182.1Z M130.7 179.0L131.5 178.2L132.3 179.0L131.5 179.8Z M138.7 172.5L139.5 171.7L140.3 172.5L139.5 173.3Z M133.4 183.6L134.1 182.8L134.9 183.6L134.1 184.4Z M124.5 178.7L125.3 177.9L126.0 178.7L125.3 179.5Z M119.6 179.6L120.4 178.8L121.1 179.6L120.4 180.4Z M135.6 176.8L136.4 176.0L137.1 176.8L136.4 177.5Z M88.7 111.4L89.5 110.6L90.3 111.4L89.5 112.2Z M99.2 114.4L99.9 113.5L100.7 114.4L99.9 115.2Z M109.0 116.4L110.4 115.0L111.7 116.4L110.4 117.8Z M116.9 121.7L117.7 120.9L118.5 121.7L117.7 122.5Z M43.0 68.0L43.7 67.2L44.5 68.0L43.7 68.9Z M29.8 68.9L30.6 68.1L31.4 68.9L30.6 69.8Z M19.2 47.5L20.0 46.6L20.7 47.5L20.0 48.3Z M24.7 61.4L25.5 60.6L26.3 61.4L25.5 62.3Z M145.1 75.2L145.9 74.4L146.7 75.2L145.9 76.1Z M161.8 67.1L162.6 66.3L163.4 67.1L162.6 68.0Z M167.4 56.3L168.1 55.4L168.9 56.3L168.1 57.1Z M356.2 151.6L356.9 150.8L357.7 151.6L356.9 152.4Z M367.3 179.9L368.1 179.1L368.8 179.9L368.1 180.7Z M335.5 157.0L336.3 156.2L337.1 157.0L336.3 157.8Z M337.7 155.3L338.5 154.5L339.3 155.3L338.5 156.1Z M231.8 142.0L232.5 141.2L233.3 142.0L232.5 142.9Z M249.1 160.8L249.9 160.0L250.7 160.8L249.9 161.6Z M229.1 123.1L229.9 122.3L230.7 123.1L229.9 124.0Z M471.7 -20.9L472.5 -21.8L473.2 -20.9L472.5 -20.1Z M82.6 208.9L84.4 189.8L87.0 192.6L88.2 208.9Z" fill="none" stroke="#abd3df" stroke-width="5.2" stroke-linejoin="round"/></g>
<path d="M-9.6 -22.5L73.7 -22.5L73.7 -2.7L74.4 5.1L75.9 10.0L77.1 11.9L80.8 16.2L84.6 19.0L88.4 20.8L90.8 23.0L95.3 26.7L99.3 29.5L101.7 29.8L103.9 31.9L105.0 35.6L106.6 39.3L108.2 43.2L109.9 50.2L111.7 56.3L117.5 64.7L121.5 68.0L128.4 73.7L128.8 75.8L134.8 78.8L138.6 81.2L142.6 81.2L148.6 80.9L154.4 80.9L157.2 80.3L161.0 82.4L161.2 85.4L158.1 87.5L155.2 89.9L155.9 93.1L157.0 95.2L160.4 97.6L163.2 99.0L166.4 100.2L170.4 102.3L176.3 104.7L180.6 106.4L184.1 108.5L185.9 110.0L189.7 113.2L194.8 115.8L200.3 119.1L202.6 121.4L208.1 126.4L211.0 130.4L213.0 134.5L211.4 138.3L209.9 142.9L209.0 143.5L203.9 140.9L201.2 136.2L199.2 130.1L191.9 129.0L187.0 127.5L183.7 125.8L184.3 124.0L180.3 123.1L176.6 125.2L175.2 127.5L172.6 131.9L171.5 133.9L170.4 138.0L168.8 141.5L168.8 145.5L168.6 147.2L173.7 149.3L178.1 152.1L182.1 155.9L182.8 155.0L181.9 159.3L182.1 164.2L183.7 165.6L181.5 169.3L179.7 169.1L175.5 168.8L171.0 171.6L169.2 175.3L169.9 182.1L165.9 185.8L163.7 187.2L161.0 190.6L159.2 193.5L158.4 196.8L151.5 197.1L149.0 194.9L149.0 191.8L148.8 188.7L150.8 187.8L153.5 184.7L154.6 182.7L155.5 179.3L153.2 177.3L154.8 175.6L159.9 174.5L161.9 172.2L161.9 168.8L160.4 167.9L158.6 162.8L157.7 156.2L155.7 152.1L153.0 147.0L152.4 143.2L152.1 140.9L150.8 138.0L148.8 135.7L145.7 136.2L143.0 137.7L140.8 136.8L135.5 132.5L132.6 130.4L134.6 127.5L134.6 125.5L132.6 120.8L129.5 117.9L125.9 119.3L123.3 119.3L119.7 121.1L120.8 119.3L123.3 117.3L121.9 115.8L118.1 113.2L115.3 113.8L114.4 114.9L113.5 112.9L111.0 107.9L109.9 105.2L107.5 102.0L103.5 102.3L99.9 101.1L95.9 99.9L91.5 102.0L91.0 99.6L85.0 96.4L81.9 95.2L78.2 91.3L74.6 86.9L73.1 85.7L69.7 80.3L65.3 77.9L63.5 76.1L61.5 72.2L58.6 69.2L52.4 68.0L50.4 68.0L47.7 66.8L49.3 65.3L48.8 62.3L45.5 57.2L43.3 56.0L40.0 54.8L40.6 51.1L36.6 50.2L34.6 50.8L35.5 47.2L34.6 39.6L31.5 34.4L30.4 31.9L29.7 27.9L29.1 22.1L24.6 17.1L20.4 17.1L20.0 15.6L15.1 12.8L10.2 9.7L6.2 8.8L4.9 7.2L2.4 6.6L-9.6 5.7Z M127.3 -22.5L128.1 -4.3L129.9 -1.2L133.7 2.6L136.6 6.3L137.0 8.8L138.4 11.3L139.7 14.4L142.1 17.4L144.6 19.9L148.6 22.7L152.1 25.5L154.6 26.4L155.2 30.7L156.4 32.5L162.6 32.8L166.8 33.1L172.3 35.3L179.7 39.6L186.8 45.7L188.8 47.2L193.0 51.1L188.1 49.3L179.2 47.8L182.6 50.5L194.8 54.2L199.0 55.1L203.4 59.3L206.3 61.4L212.8 67.1L217.0 66.8L220.1 70.1L222.3 72.5L225.7 76.1L228.3 80.9L231.9 83.3L236.8 84.5L236.5 89.9L233.7 91.3L234.8 95.2L233.4 99.0L234.3 104.1L233.7 110.0L231.9 114.4L230.8 118.8L234.3 124.6L230.1 125.5L232.1 129.0L237.9 133.3L240.1 134.8L242.8 136.2L245.9 141.5L245.9 144.9L249.9 148.4L251.7 152.1L251.2 154.7L254.8 158.5L256.5 159.6L259.2 164.5L262.5 167.6L261.9 170.8L259.7 171.3L258.1 175.0L258.1 178.7L261.4 177.3L262.1 172.2L265.4 172.8L268.1 175.9L269.9 179.9L270.3 185.5L273.6 186.4L277.6 185.5L281.9 185.5L285.2 185.5L286.5 183.8L290.3 184.4L295.4 184.7L298.7 184.1L299.9 182.7L301.9 184.1L304.3 184.1L306.3 186.4L309.2 187.8L312.5 189.2L314.7 189.2L317.0 191.2L317.0 208.9L335.8 208.9L334.7 190.6L333.6 187.0L329.2 185.8L327.0 183.6L325.8 181.9L322.5 180.7L318.7 178.7L314.7 176.5L313.2 173.6L307.6 172.8L302.5 170.2L304.1 169.1L311.4 167.9L313.6 165.9L311.4 165.6L310.3 163.6L308.5 160.8L308.5 158.5L311.2 156.2L315.2 157.9L315.9 161.6L314.3 163.6L317.0 164.2L318.5 162.5L319.2 158.8L316.1 154.4L315.2 153.6L311.0 149.8L309.6 146.4L306.7 141.5L304.1 137.7L303.6 129.9L303.6 124.6L306.3 123.1L309.2 120.2L311.2 119.3L310.7 123.1L309.6 126.9L313.9 128.7L318.7 130.7L319.9 132.2L319.4 135.7L320.7 138.9L324.7 139.7L329.2 140.0L326.3 138.0L322.5 135.7L320.5 131.9L322.3 129.9L325.8 131.0L327.4 131.3L329.8 135.1L332.5 138.3L334.3 139.7L334.5 138.0L334.3 135.1L330.3 132.2L328.7 130.7L328.5 127.8L331.4 127.2L334.3 128.1L338.1 131.3L341.4 134.2L343.6 133.3L339.2 128.1L332.1 126.1L331.0 122.9L329.8 120.5L328.1 118.2L328.3 116.7L331.4 114.9L337.0 116.1L341.4 113.5L343.8 110.2L347.6 110.5L350.3 112.6L352.5 112.9L356.9 110.2L359.8 110.0L363.6 110.5L368.1 112.3L373.6 112.9L376.3 113.2L379.8 116.4L380.9 116.7L384.7 119.6L390.9 120.2L398.0 119.6L396.9 121.1L390.3 124.6L384.0 129.0L385.2 130.7L383.2 136.5L384.7 135.7L387.6 133.3L388.0 131.6L394.0 125.8L398.0 122.6L403.6 119.9L406.9 118.2L410.3 113.8L412.7 109.1L418.0 109.1L422.7 109.4L429.1 106.4L436.5 107.9L441.4 109.4L445.4 108.5L446.9 105.5L447.8 101.7L446.5 101.1L438.7 98.2L431.4 94.3L425.6 89.9L423.1 82.4L424.3 79.4L422.3 75.8L420.3 73.7L418.3 70.7L416.9 66.2L412.0 63.8L412.5 62.0L415.6 62.0L417.6 59.0L421.4 57.8L420.9 54.2L421.1 48.1L422.5 43.5L421.4 42.6L424.7 40.2L427.1 36.2L431.1 35.6L434.0 37.7L436.9 32.2L436.3 27.6L436.7 23.6L438.0 16.2L438.3 12.8L437.6 8.2L438.9 7.2L440.9 4.1L444.7 -1.2L445.8 -22.5Z M448.7 101.7L447.6 105.5L446.2 108.8L452.5 113.8L454.2 115.5L459.6 114.7L466.5 115.5L459.1 117.6L451.8 118.5L444.7 119.1L440.9 122.3L445.8 123.7L449.1 125.2L443.1 126.9L435.8 126.4L428.0 126.4L422.9 127.5L423.6 123.7L420.3 122.3L415.8 123.1L418.7 126.1L414.7 128.1L408.0 126.1L402.5 126.1L395.8 126.1L394.3 127.5L391.4 130.4L388.0 133.3L385.8 136.2L383.6 137.7L383.2 143.5L382.5 147.8L380.5 152.7L386.7 152.4L392.5 150.7L395.6 150.1L399.6 149.8L399.8 152.1L396.9 155.6L394.5 157.3L395.8 160.2L396.9 163.1L398.9 164.5L398.0 166.5L399.8 168.5L402.5 169.9L400.7 172.2L397.8 173.9L395.8 175.9L396.9 178.5L398.0 180.2L403.2 181.9L404.5 183.0L399.2 184.4L396.3 184.7L393.6 185.5L392.0 182.7L392.9 180.2L390.7 176.8L387.6 175.9L387.2 179.3L389.6 183.8L386.9 183.6L385.4 185.0L385.8 187.0L389.2 188.7L392.5 191.5L396.5 189.2L398.0 192.1L400.3 208.9L674.6 208.9L674.6 108.8L654.4 110.8L648.4 110.0L643.1 109.1L640.6 106.4L638.6 104.7L634.6 107.6L629.7 104.7L622.8 102.3L622.4 100.2L615.7 97.6L611.5 101.7L608.6 99.9L603.5 94.6L601.3 87.8L600.2 86.6L590.9 89.9L583.5 84.8L581.3 80.3L583.5 78.2L582.4 77.3L577.8 75.8L574.2 80.0L570.0 80.3L561.8 80.3L557.1 79.4L551.5 79.4L544.9 78.2L542.2 78.2L534.7 82.1L528.4 83.6L521.1 86.3L518.4 88.4L513.1 91.6L507.8 94.9L499.6 99.6L499.1 101.1L492.9 105.8L483.3 105.5L474.0 102.6L471.3 104.4L464.7 104.4L459.4 103.2L452.5 102.0Z M-9.6 94.3L3.7 95.8L5.3 97.3L7.3 96.1L8.2 90.7L10.4 88.4L10.4 83.0L11.5 78.8L13.7 75.8L13.7 69.8L13.3 62.3L11.5 57.8L12.0 54.8L11.5 49.9L10.4 48.4L9.1 49.6L8.6 54.8L8.2 58.4L6.0 56.9L2.6 57.2L-9.6 57.8Z M-9.6 103.2L5.7 101.1L10.0 102.6L13.7 104.1L15.3 108.5L13.1 110.8L17.7 113.2L16.4 115.2L17.7 119.3L20.0 122.3L17.5 126.6L15.5 129.6L18.0 135.4L17.3 139.4L16.6 142.6L16.0 149.3L15.5 157.9L13.1 163.6L10.4 162.2L7.1 160.8L4.2 160.5L2.0 164.8L-9.6 166.5Z M26.0 56.3L28.2 57.2L31.5 56.6L33.5 55.4L32.6 52.9L30.0 53.8L27.1 54.2Z M118.8 -22.5L119.7 -0.6L121.9 2.6L124.1 3.2L123.7 -0.6L122.6 -22.5Z M131.0 13.4L134.8 18.1L139.3 22.1L140.1 21.2L135.9 16.5L132.1 12.5Z M135.9 13.7L140.4 18.1L144.8 21.8L145.5 20.5L141.0 16.5L137.0 12.8Z M165.9 38.6L168.1 40.2L177.0 40.2L177.5 38.6L172.6 36.5L167.0 36.8Z M165.2 42.6L170.4 44.7L183.7 45.3L183.7 44.1L172.6 42.6L168.1 41.4Z M171.0 49.9L177.0 51.7L183.7 50.2L180.3 49.0L172.6 48.7Z M158.1 47.5L160.4 48.4L162.8 47.2L160.4 46.0Z M186.3 55.1L191.5 57.2L195.9 57.8L191.5 55.7L187.0 54.2Z M174.8 56.3L177.7 56.9L177.7 55.4L175.2 55.4Z M237.7 144.9L239.7 143.5L242.5 142.9L244.8 144.1L244.3 147.0L244.3 149.3L247.0 152.7L248.5 155.9L246.3 155.6L243.2 152.7L241.9 149.8L239.2 147.0Z M253.2 189.2L255.9 186.4L257.7 181.3L259.7 183.6L261.0 187.0L263.2 189.8L263.6 192.9L259.2 193.5L255.9 192.1Z M259.7 181.3L261.4 180.7L262.5 185.0L261.0 186.4Z M271.4 208.9L274.8 191.5L276.1 189.2L280.3 190.1L284.3 187.8L285.4 186.1L289.2 187.0L292.1 187.8L295.9 189.5L299.2 191.2L304.3 192.6L309.2 208.9Z M308.7 170.2L312.5 169.3L314.7 167.3L318.1 165.6L321.0 167.1L322.5 169.3L325.8 172.8L331.4 175.6L337.4 176.2L339.6 179.3L342.5 186.4L347.6 190.4L347.0 194.9L344.1 208.9L339.2 208.9L340.3 190.6L335.8 184.1L330.3 183.8L326.3 182.4L324.7 179.3L321.4 175.0L319.6 173.1L317.6 171.9L313.6 171.1Z M344.7 169.3L346.3 166.5L348.5 168.8L349.8 172.2L348.1 173.9L346.3 171.6Z M321.4 161.6L323.0 160.8L324.3 162.2L322.5 163.1Z M326.3 161.3L328.5 160.8L330.3 163.6L328.1 164.5Z M331.2 162.2L333.0 159.3L334.7 157.9L334.1 160.8L332.5 162.8Z M346.3 117.3L348.5 114.4L351.4 114.9L352.5 117.9L350.7 120.8L348.1 120.8Z M366.9 124.0L369.8 122.6L372.5 124.0L371.4 126.1L368.1 126.1Z M357.4 140.0L358.1 137.7L362.5 137.7L363.6 139.1L366.3 137.1L366.9 140.0L365.4 143.5L363.2 141.2L361.4 143.5L358.1 142.0Z M371.8 133.1L374.7 131.0L379.2 131.3L379.6 133.3L375.8 134.8Z M378.5 142.6L380.3 141.8L381.2 142.9L379.2 143.8Z M375.4 161.3L378.1 157.9L383.2 155.6L386.9 155.6L388.5 157.0L392.9 163.6L392.5 165.9L389.2 167.3L384.7 166.5L382.5 164.2L380.3 163.6L376.9 163.1Z M376.3 179.3L378.5 177.9L382.0 179.3L382.7 185.0L381.4 189.2L378.7 190.4L376.5 187.8L378.1 183.0Z M369.2 179.3L370.7 178.5L370.9 179.9Z M412.0 119.6L414.7 118.5L418.0 119.3L416.9 120.8L413.6 120.8Z M541.3 -22.5L543.5 0.1L546.2 2.6L551.1 6.0L555.8 5.4L560.6 2.6L564.6 -0.6L566.9 -22.5Z M643.5 -22.5L647.3 0.7L653.5 4.7L661.3 8.2L674.6 10.3L674.6 -22.5Z M135.9 208.9L137.0 191.2L140.1 188.7L143.7 188.7L147.0 187.2L149.2 187.5L147.2 190.1L145.9 208.9Z M89.3 208.9L92.6 190.4L97.3 188.7L98.8 191.5L101.5 192.1L103.7 208.9Z M93.6 174.8L94.4 174.0L95.2 174.8L94.4 175.6Z M132.9 181.3L133.7 180.5L134.5 181.3L133.7 182.1Z M130.7 179.0L131.5 178.2L132.3 179.0L131.5 179.8Z M138.7 172.5L139.5 171.7L140.3 172.5L139.5 173.3Z M133.4 183.6L134.1 182.8L134.9 183.6L134.1 184.4Z M124.5 178.7L125.3 177.9L126.0 178.7L125.3 179.5Z M119.6 179.6L120.4 178.8L121.1 179.6L120.4 180.4Z M135.6 176.8L136.4 176.0L137.1 176.8L136.4 177.5Z M88.7 111.4L89.5 110.6L90.3 111.4L89.5 112.2Z M99.2 114.4L99.9 113.5L100.7 114.4L99.9 115.2Z M109.0 116.4L110.4 115.0L111.7 116.4L110.4 117.8Z M116.9 121.7L117.7 120.9L118.5 121.7L117.7 122.5Z M43.0 68.0L43.7 67.2L44.5 68.0L43.7 68.9Z M29.8 68.9L30.6 68.1L31.4 68.9L30.6 69.8Z M19.2 47.5L20.0 46.6L20.7 47.5L20.0 48.3Z M24.7 61.4L25.5 60.6L26.3 61.4L25.5 62.3Z M145.1 75.2L145.9 74.4L146.7 75.2L145.9 76.1Z M161.8 67.1L162.6 66.3L163.4 67.1L162.6 68.0Z M167.4 56.3L168.1 55.4L168.9 56.3L168.1 57.1Z M356.2 151.6L356.9 150.8L357.7 151.6L356.9 152.4Z M367.3 179.9L368.1 179.1L368.8 179.9L368.1 180.7Z M335.5 157.0L336.3 156.2L337.1 157.0L336.3 157.8Z M337.7 155.3L338.5 154.5L339.3 155.3L338.5 156.1Z M231.8 142.0L232.5 141.2L233.3 142.0L232.5 142.9Z M249.1 160.8L249.9 160.0L250.7 160.8L249.9 161.6Z M229.1 123.1L229.9 122.3L230.7 123.1L229.9 124.0Z M471.7 -20.9L472.5 -21.8L473.2 -20.9L472.5 -20.1Z M82.6 208.9L84.4 189.8L87.0 192.6L88.2 208.9Z" fill="#f1eee6" stroke="#c9bfc9" stroke-width=".35"/>
<g clip-path="url(#landclip)"><g filter="url(#bl)" fill="#d0e5bd"><ellipse cx="14.9" cy="2.6" rx="22.2" ry="10.9" opacity="0.48"/><ellipse cx="37.1" cy="11.9" rx="20.0" ry="10.9" opacity="0.48"/><ellipse cx="57.1" cy="21.2" rx="17.8" ry="12.4" opacity="0.45"/><ellipse cx="48.2" cy="42.6" rx="13.3" ry="15.3" opacity="0.36"/><ellipse cx="74.8" cy="36.5" rx="13.3" ry="13.8" opacity="0.42"/><ellipse cx="88.2" cy="54.8" rx="13.3" ry="15.2" opacity="0.45"/><ellipse cx="101.5" cy="72.8" rx="13.3" ry="13.5" opacity="0.48"/><ellipse cx="117.0" cy="87.8" rx="13.3" ry="10.4" opacity="0.42"/><ellipse cx="132.6" cy="108.5" rx="11.1" ry="8.9" opacity="0.33"/><ellipse cx="145.9" cy="126.1" rx="11.1" ry="11.7" opacity="0.45"/><ellipse cx="159.2" cy="140.6" rx="7.8" ry="10.2" opacity="0.42"/><ellipse cx="165.9" cy="157.9" rx="6.7" ry="10.1" opacity="0.45"/><ellipse cx="161.5" cy="180.7" rx="6.7" ry="10.0" opacity="0.42"/><ellipse cx="155.9" cy="84.8" rx="5.6" ry="3.6" opacity="0.42"/><ellipse cx="59.3" cy="57.8" rx="8.9" ry="9.1" opacity="0.27"/><ellipse cx="8.2" cy="69.8" rx="6.7" ry="18.1" opacity="0.42"/><ellipse cx="8.2" cy="131.9" rx="8.9" ry="26.4" opacity="0.33"/><ellipse cx="148.1" cy="-0.6" rx="15.5" ry="11.0" opacity="0.45"/><ellipse cx="174.8" cy="8.8" rx="22.2" ry="14.0" opacity="0.51"/><ellipse cx="201.5" cy="18.1" rx="22.2" ry="15.5" opacity="0.51"/><ellipse cx="214.8" cy="39.6" rx="20.0" ry="15.3" opacity="0.51"/><ellipse cx="188.1" cy="30.4" rx="13.3" ry="9.2" opacity="0.36"/><ellipse cx="230.3" cy="48.7" rx="17.8" ry="15.2" opacity="0.51"/><ellipse cx="241.4" cy="27.3" rx="15.5" ry="15.4" opacity="0.48"/><ellipse cx="252.5" cy="60.8" rx="11.1" ry="10.6" opacity="0.48"/><ellipse cx="243.7" cy="75.8" rx="11.1" ry="9.0" opacity="0.45"/><ellipse cx="252.5" cy="93.7" rx="8.9" ry="14.9" opacity="0.45"/><ellipse cx="254.8" cy="123.1" rx="10.0" ry="14.7" opacity="0.42"/><ellipse cx="259.2" cy="143.5" rx="11.1" ry="11.6" opacity="0.45"/><ellipse cx="274.8" cy="152.1" rx="10.0" ry="17.3" opacity="0.48"/><ellipse cx="281.4" cy="172.2" rx="11.1" ry="10.0" opacity="0.45"/><ellipse cx="297.0" cy="177.9" rx="11.1" ry="5.7" opacity="0.36"/><ellipse cx="270.3" cy="99.6" rx="13.3" ry="14.8" opacity="0.36"/><ellipse cx="268.1" cy="78.8" rx="8.9" ry="7.5" opacity="0.36"/><ellipse cx="274.8" cy="39.6" rx="13.3" ry="12.2" opacity="0.36"/><ellipse cx="259.2" cy="30.4" rx="13.3" ry="10.8" opacity="0.36"/><ellipse cx="288.1" cy="11.9" rx="11.1" ry="10.9" opacity="0.42"/><ellipse cx="299.2" cy="36.5" rx="8.9" ry="15.4" opacity="0.36"/><ellipse cx="299.2" cy="69.8" rx="11.1" ry="12.1" opacity="0.36"/><ellipse cx="305.9" cy="93.7" rx="10.0" ry="8.9" opacity="0.36"/><ellipse cx="294.7" cy="134.8" rx="6.7" ry="8.7" opacity="0.36"/><ellipse cx="279.2" cy="123.1" rx="11.1" ry="10.3" opacity="0.33"/><ellipse cx="325.8" cy="124.6" rx="11.1" ry="4.4" opacity="0.36"/><ellipse cx="332.5" cy="134.8" rx="3.3" ry="4.4" opacity="0.36"/><ellipse cx="340.3" cy="130.4" rx="3.3" ry="3.5" opacity="0.36"/><ellipse cx="323.6" cy="75.8" rx="8.9" ry="9.0" opacity="0.51"/><ellipse cx="343.6" cy="87.8" rx="20.0" ry="8.9" opacity="0.51"/><ellipse cx="368.1" cy="95.2" rx="13.3" ry="5.9" opacity="0.42"/><ellipse cx="348.1" cy="56.3" rx="24.4" ry="4.5" opacity="0.33"/><ellipse cx="383.6" cy="54.8" rx="17.8" ry="4.5" opacity="0.42"/><ellipse cx="410.3" cy="51.7" rx="11.1" ry="6.1" opacity="0.42"/><ellipse cx="317.0" cy="45.7" rx="11.1" ry="7.6" opacity="0.33"/><ellipse cx="414.7" cy="75.8" rx="8.9" ry="6.0" opacity="0.51"/><ellipse cx="419.1" cy="84.8" rx="8.9" ry="6.0" opacity="0.45"/><ellipse cx="341.4" cy="102.6" rx="11.1" ry="4.4" opacity="0.36"/><ellipse cx="312.5" cy="-9.9" rx="26.7" ry="7.9" opacity="0.30"/><ellipse cx="436.9" cy="99.6" rx="11.1" ry="3.6" opacity="0.36"/><ellipse cx="463.6" cy="108.5" rx="15.5" ry="3.5" opacity="0.36"/><ellipse cx="481.3" cy="120.2" rx="13.3" ry="7.3" opacity="0.36"/><ellipse cx="499.1" cy="110.0" rx="15.5" ry="7.4" opacity="0.48"/><ellipse cx="519.1" cy="99.6" rx="13.3" ry="8.9" opacity="0.51"/><ellipse cx="541.3" cy="90.7" rx="17.8" ry="8.9" opacity="0.51"/><ellipse cx="565.8" cy="90.7" rx="15.5" ry="8.9" opacity="0.48"/><ellipse cx="579.1" cy="93.7" rx="11.1" ry="10.4" opacity="0.42"/><ellipse cx="534.7" cy="117.3" rx="13.3" ry="5.9" opacity="0.36"/><ellipse cx="561.3" cy="111.4" rx="11.1" ry="5.9" opacity="0.33"/><ellipse cx="608.0" cy="111.4" rx="13.3" ry="5.9" opacity="0.36"/><ellipse cx="630.2" cy="114.4" rx="15.5" ry="5.9" opacity="0.45"/><ellipse cx="652.4" cy="117.3" rx="11.1" ry="5.9" opacity="0.45"/><ellipse cx="614.6" cy="126.1" rx="8.9" ry="4.4" opacity="0.24"/><ellipse cx="399.2" cy="137.7" rx="11.1" ry="5.8" opacity="0.36"/><ellipse cx="401.4" cy="144.9" rx="8.9" ry="3.5" opacity="0.42"/><ellipse cx="430.3" cy="143.5" rx="13.3" ry="8.7" opacity="0.36"/><ellipse cx="450.2" cy="140.6" rx="11.1" ry="8.7" opacity="0.42"/><ellipse cx="445.8" cy="160.8" rx="13.3" ry="8.6" opacity="0.39"/><ellipse cx="430.3" cy="163.6" rx="11.1" ry="7.2" opacity="0.36"/><ellipse cx="459.1" cy="155.0" rx="8.9" ry="8.6" opacity="0.30"/><ellipse cx="423.6" cy="186.4" rx="11.1" ry="3.4" opacity="0.27"/><ellipse cx="452.5" cy="126.1" rx="8.9" ry="3.5" opacity="0.30"/><ellipse cx="472.5" cy="131.9" rx="8.9" ry="5.8" opacity="0.33"/><ellipse cx="496.9" cy="129.0" rx="11.1" ry="5.8" opacity="0.33"/><ellipse cx="474.7" cy="163.6" rx="6.7" ry="5.7" opacity="0.24"/><ellipse cx="479.1" cy="186.4" rx="8.9" ry="5.7" opacity="0.21"/><ellipse cx="405.8" cy="160.8" rx="6.7" ry="5.7" opacity="0.27"/><ellipse cx="590.2" cy="183.6" rx="6.7" ry="4.3" opacity="0.18"/><ellipse cx="523.6" cy="129.0" rx="8.9" ry="4.4" opacity="0.24"/><ellipse cx="499.1" cy="110.0" rx="13.3" ry="5.9" opacity="0.30"/><ellipse cx="519.1" cy="99.6" rx="11.1" ry="7.4" opacity="0.30"/><ellipse cx="541.3" cy="90.7" rx="15.5" ry="6.5" opacity="0.30"/><ellipse cx="565.8" cy="89.3" rx="13.3" ry="6.0" opacity="0.30"/><ellipse cx="630.2" cy="114.4" rx="13.3" ry="4.4" opacity="0.30"/><ellipse cx="652.4" cy="117.3" rx="8.9" ry="4.4" opacity="0.30"/><ellipse cx="414.7" cy="75.8" rx="6.7" ry="4.5" opacity="0.30"/><ellipse cx="343.6" cy="87.8" rx="17.8" ry="6.0" opacity="0.27"/><ellipse cx="323.6" cy="78.8" rx="6.7" ry="9.0" opacity="0.27"/><ellipse cx="474.7" cy="111.4" rx="11.1" ry="3.5" opacity="0.24"/><ellipse cx="450.2" cy="140.6" rx="8.9" ry="5.8" opacity="0.21"/><ellipse cx="50.4" cy="27.3" rx="37.8" ry="31.0" opacity="0.24"/><ellipse cx="97.0" cy="66.8" rx="26.7" ry="27.3" opacity="0.18"/><ellipse cx="23.7" cy="-0.6" rx="33.3" ry="12.5" opacity="0.24"/><ellipse cx="208.1" cy="27.3" rx="57.8" ry="37.2" opacity="0.24"/><ellipse cx="263.6" cy="66.8" rx="42.2" ry="51.9" opacity="0.20"/><ellipse cx="268.1" cy="137.7" rx="28.9" ry="47.0" opacity="0.20"/><ellipse cx="341.4" cy="78.8" rx="44.4" ry="24.1" opacity="0.15"/><ellipse cx="534.7" cy="102.6" rx="100.0" ry="16.3" opacity="0.18"/><ellipse cx="436.9" cy="152.1" rx="44.4" ry="26.1" opacity="0.15"/><ellipse cx="152.6" cy="129.0" rx="17.8" ry="20.5" opacity="0.15"/><ellipse cx="165.9" cy="166.5" rx="8.9" ry="25.9" opacity="0.18"/><ellipse cx="556.9" cy="1.0" rx="11.1" ry="3.7" opacity="0.48"/><ellipse cx="656.8" cy="2.6" rx="8.9" ry="7.8" opacity="0.51"/><ellipse cx="325.8" cy="173.6" rx="7.8" ry="4.3" opacity="0.36"/><ellipse cx="383.6" cy="160.8" rx="6.7" ry="3.4" opacity="0.30"/><ellipse cx="349.2" cy="117.9" rx="2.7" ry="2.9" opacity="0.42"/></g></g>
<path d="M539.5 167.1L543.1 165.6L545.8 169.9L547.5 174.5L545.8 178.5L542.4 179.3L540.7 175.6L541.8 171.6Z M259.7 106.1L261.9 103.5L263.6 107.0L263.2 110.8L261.0 111.4Z M266.3 110.0L268.5 108.5L270.3 112.0L268.1 114.9L266.5 112.9Z M225.4 71.3L228.6 68.9L233.7 72.8L234.3 76.7L231.4 76.4L228.1 73.4Z M453.6 125.2L456.9 123.1L461.4 124.3L460.2 126.4L455.8 126.6Z M434.3 132.5L436.9 131.3L439.8 132.8L436.9 134.2Z M420.9 131.9L422.9 130.4L424.7 132.5L422.5 133.9Z M68.8 44.7L70.4 42.9L72.2 44.7L70.4 46.3Z M65.3 60.8L66.8 59.3L68.2 61.4L66.6 62.6Z M496.9 179.3L500.2 178.5L501.3 181.3L498.0 182.1Z M485.3 187.8L487.6 187.0L488.0 193.5L486.2 208.9Z M498.0 194.9L500.2 192.1L503.6 208.9Z M553.5 157.9L558.0 160.2L560.2 164.2L556.9 163.1L554.7 160.8Z M284.8 114.9L286.3 114.4L285.9 117.3Z M320.3 117.9L324.7 117.3L324.7 118.5L320.3 118.8Z" fill="#abd3df"/>
<g clip-path="url(#landclip)"><path d="M151.2 -22.5L152.1 -6.8L157.5 1.0L161.5 11.9L168.1 18.7L172.6 24.2L179.2 31.9L184.8 35.0L189.2 42.6L193.7 48.7L192.6 50.8 M194.3 51.7L198.1 51.7L205.9 57.8L211.4 63.8L213.2 66.8 M223.7 -8.7L227.0 1.0L225.9 6.0L231.9 12.2L236.3 19.0L234.8 30.4L228.6 32.5L222.6 33.4L217.0 41.1L215.9 47.2L212.1 50.2L213.7 59.3L211.4 63.8 M223.7 -8.7L232.5 -9.9L223.7 -22.5 M228.6 32.5L237.0 42.6L244.8 45.7L253.7 53.8L248.1 56.3L247.4 62.3L240.3 60.8L237.4 62.3L232.5 68.3L230.3 72.8L231.9 83.3 M253.7 53.8L259.2 42.6L263.6 40.5L271.4 44.1L277.0 50.2L284.8 57.8L281.4 66.8L280.3 71.3L274.8 75.8L262.5 81.8L259.2 82.7L258.1 72.8L251.4 68.9L247.4 62.3 M259.2 82.7L257.0 96.7L258.1 102.6L261.4 108.5L263.6 111.4L267.6 112.9L269.2 118.2L267.6 123.1L261.4 129.0L260.3 134.8L255.9 136.2L254.8 143.5L250.3 147.8L246.3 146.7 M267.6 112.9L281.4 112.3L288.1 105.5L297.0 104.1L307.0 98.7L311.0 98.5L319.2 96.7L325.8 97.3L335.8 93.7L347.0 95.8L356.9 98.2L363.6 101.1L376.9 99.0L382.5 98.2L386.9 87.8 M387.2 87.5L392.5 90.7L392.5 98.2L386.5 101.1L386.9 108.5L380.3 116.4 M387.2 87.5L391.4 83.9L400.3 78.8L408.0 76.4L414.7 79.4L424.3 79.4 M311.0 98.5L312.5 87.8L309.2 78.8L301.4 74.3L298.3 69.2L300.3 60.8L301.4 53.2L312.5 44.1L307.0 36.5L298.1 24.2L304.7 11.9 M280.3 71.3L290.3 69.8L298.3 69.2 M305.2 11.3L300.3 4.1L305.9 -0.6L300.3 -4.3L293.6 2.6L281.4 -2.7L277.0 -8.4L279.2 -22.5 M305.2 11.3L310.3 22.7L321.4 22.7L339.2 26.7L354.7 26.7L365.8 29.5L378.1 22.1L390.3 16.5L407.4 14.0L416.9 19.6L423.6 23.3L436.5 26.1" fill="none" stroke="#c4a3cf" stroke-width="1.3" stroke-linejoin="round" opacity=".42"/><path d="M151.2 -22.5L152.1 -6.8L157.5 1.0L161.5 11.9L168.1 18.7L172.6 24.2L179.2 31.9L184.8 35.0L189.2 42.6L193.7 48.7L192.6 50.8 M194.3 51.7L198.1 51.7L205.9 57.8L211.4 63.8L213.2 66.8 M223.7 -8.7L227.0 1.0L225.9 6.0L231.9 12.2L236.3 19.0L234.8 30.4L228.6 32.5L222.6 33.4L217.0 41.1L215.9 47.2L212.1 50.2L213.7 59.3L211.4 63.8 M223.7 -8.7L232.5 -9.9L223.7 -22.5 M228.6 32.5L237.0 42.6L244.8 45.7L253.7 53.8L248.1 56.3L247.4 62.3L240.3 60.8L237.4 62.3L232.5 68.3L230.3 72.8L231.9 83.3 M253.7 53.8L259.2 42.6L263.6 40.5L271.4 44.1L277.0 50.2L284.8 57.8L281.4 66.8L280.3 71.3L274.8 75.8L262.5 81.8L259.2 82.7L258.1 72.8L251.4 68.9L247.4 62.3 M259.2 82.7L257.0 96.7L258.1 102.6L261.4 108.5L263.6 111.4L267.6 112.9L269.2 118.2L267.6 123.1L261.4 129.0L260.3 134.8L255.9 136.2L254.8 143.5L250.3 147.8L246.3 146.7 M267.6 112.9L281.4 112.3L288.1 105.5L297.0 104.1L307.0 98.7L311.0 98.5L319.2 96.7L325.8 97.3L335.8 93.7L347.0 95.8L356.9 98.2L363.6 101.1L376.9 99.0L382.5 98.2L386.9 87.8 M387.2 87.5L392.5 90.7L392.5 98.2L386.5 101.1L386.9 108.5L380.3 116.4 M387.2 87.5L391.4 83.9L400.3 78.8L408.0 76.4L414.7 79.4L424.3 79.4 M311.0 98.5L312.5 87.8L309.2 78.8L301.4 74.3L298.3 69.2L300.3 60.8L301.4 53.2L312.5 44.1L307.0 36.5L298.1 24.2L304.7 11.9 M280.3 71.3L290.3 69.8L298.3 69.2 M305.2 11.3L300.3 4.1L305.9 -0.6L300.3 -4.3L293.6 2.6L281.4 -2.7L277.0 -8.4L279.2 -22.5 M305.2 11.3L310.3 22.7L321.4 22.7L339.2 26.7L354.7 26.7L365.8 29.5L378.1 22.1L390.3 16.5L407.4 14.0L416.9 19.6L423.6 23.3L436.5 26.1" fill="none" stroke="#a77fb8" stroke-width=".4" stroke-linejoin="round" opacity=".55"/><path d="M689.6 163.1L670.0 162.4L651.6 155.7M651.6 155.7L669.6 183.1L678.1 214.7M651.4 155.6L651.5 155.6L651.6 155.7M651.4 155.6L650.1 147.3L651.4 139.0M651.4 139.0L662.7 127.7L677.0 120.6M651.4 139.0L647.5 136.5L644.6 132.9M655.0 75.8L654.3 105.2L644.6 132.9M632.6 79.1L630.8 96.3L623.8 112.1M644.6 132.9L638.7 130.9L633.8 127.1M633.8 127.1L627.6 120.4L623.8 112.1M651.4 155.6L638.3 168.5L621.8 176.8M621.2 207.1L618.9 204.3L617.6 200.8M621.8 176.8L621.6 189.1L617.6 200.8M394.1 107.0L396.8 103.1L400.6 100.3M400.6 100.3L397.2 88.4L397.7 76.0M499.8 61.8L511.3 79.0L517.0 99.0M543.0 64.5L542.0 77.5L536.9 89.5M517.0 99.0L526.2 92.6L536.9 89.5M400.6 100.3L414.0 94.2L428.6 92.6M428.6 92.6L430.8 86.4L434.9 81.2M500.8 187.3L504.5 203.1L503.1 219.2M500.8 187.3L484.7 190.0L468.6 187.6M463.8 228.3L461.0 210.1L464.1 192.0M468.6 187.6L466.7 190.1L464.1 192.0M431.6 228.3L429.9 205.9L435.2 184.0M464.1 192.0L449.0 190.3L435.2 184.0M393.4 209.3L402.4 197.3L414.7 188.7M414.7 188.7L423.3 183.3L433.1 180.9M435.2 184.0L433.9 182.6L433.1 180.9M395.0 115.7L403.3 121.7L409.3 130.0M409.3 130.0L417.3 126.9L426.0 126.5M428.6 92.6L431.3 106.9L429.4 121.4M426.0 126.5L427.3 123.7L429.4 121.4M609.4 72.4L600.2 87.8L586.6 99.6M623.8 112.1L617.8 114.2L611.4 114.3M586.6 99.6L600.2 104.9L611.4 114.3M553.0 65.2L566.5 80.5L574.6 99.2M586.6 99.6L585.7 100.1L584.8 100.3M574.6 99.2L579.8 98.9L584.8 100.3M517.0 99.0L516.0 103.4L513.6 107.3M536.9 89.5L540.2 98.1L540.6 107.3M522.7 122.0L517.0 115.4L513.6 107.3M522.7 122.0L526.1 121.0L529.7 121.0M529.7 121.0L534.0 113.3L540.6 107.3M574.6 99.2L570.1 105.9L563.7 110.8M540.6 107.3L552.4 107.2L563.7 110.8M409.3 130.0L406.7 139.8L401.2 148.3M432.5 168.3L436.8 160.9L443.2 155.3M432.5 168.3L418.1 165.9L405.1 159.1M443.2 155.3L432.3 142.3L426.0 126.5M414.7 188.7L405.0 180.2L398.4 169.2M432.5 168.3L433.8 174.5L433.1 180.9M456.9 108.4L447.6 116.3L436.4 120.9M456.9 108.4L460.2 116.3L460.9 124.9M436.4 120.9L447.6 122.9L457.7 128.3M460.9 124.9L459.6 126.9L457.7 128.3M465.9 81.9L463.5 95.9L456.9 108.4M429.4 121.4L432.8 120.6L436.4 120.9M470.7 82.1L474.6 103.0L471.8 124.1M471.8 124.1L466.4 125.3L460.9 124.9M567.7 186.4L560.0 200.2L548.3 211.0M567.7 186.4L575.5 185.4L583.3 186.9M598.2 199.3L589.7 194.3L583.3 186.9M598.2 199.3L575.7 216.1L549.1 225.0M549.1 225.0L547.6 218.1L548.3 211.0M531.4 169.7L543.2 189.0L548.3 211.0M531.4 169.7L546.9 169.3L561.7 173.7M561.7 173.7L565.7 179.5L567.7 186.4M617.6 200.8L607.8 201.6L598.2 199.3M548.1 227.8L548.4 226.3L549.1 225.0M500.8 187.3L505.1 176.2L512.6 167.0M512.6 167.0L522.2 166.9L531.4 169.7M531.4 169.7L531.4 169.7L531.4 169.7M486.9 128.7L481.8 109.8L482.9 90.3M486.9 128.7L490.3 129.7L493.3 131.7M493.3 131.7L495.5 117.7L501.9 105.1M482.9 90.3L493.6 96.1L501.9 105.1M477.1 81.2L480.7 85.3L482.9 90.3M471.8 124.1L477.3 125.8L482.0 129.2M482.0 129.2L484.4 128.5L486.9 128.7M505.6 142.4L498.6 138.0L493.3 131.7M505.6 142.4L512.5 130.9L522.7 122.0M513.6 107.3L507.6 107.1L501.9 105.1M584.8 100.3L590.0 116.9L589.9 134.3M563.7 110.8L564.8 120.6L562.7 130.3M562.7 130.3L576.6 130.1L589.9 134.3M561.7 173.7L568.9 165.7L578.1 160.4M583.3 186.9L578.8 174.1L578.5 160.4M578.1 160.4L578.3 160.4L578.5 160.4M621.8 176.8L608.4 165.4L599.1 150.5M578.5 160.4L588.0 153.8L599.1 150.5M633.8 127.1L618.3 141.0L599.2 149.4M611.4 114.3L605.5 128.2L595.6 139.7M599.2 149.4L596.6 144.8L595.6 139.7M599.2 149.4L599.3 149.9L599.1 150.5M595.6 139.7L592.3 137.4L589.9 134.3M444.6 155.1L449.7 148.6L456.6 144.0M444.6 155.1L456.8 159.9L466.9 168.4M456.6 144.0L462.8 143.0L469.1 144.0M469.1 144.0L476.6 150.3L481.7 158.7M481.7 158.7L475.1 164.7L466.9 168.4M443.2 155.3L443.8 155.1L444.6 155.1M457.7 128.3L458.4 136.3L456.6 144.0M468.6 187.6L466.2 178.1L466.9 168.4M482.0 129.2L476.7 137.6L469.1 144.0M506.9 158.3L505.0 150.5L505.6 142.4M506.9 158.3L494.4 160.5L481.7 158.7M512.6 167.0L509.1 163.1L506.9 158.3M540.5 130.4L550.8 129.9L560.7 132.6M540.5 130.4L540.4 148.3L534.9 165.3M560.7 132.6L561.7 139.9L560.3 147.0M534.9 165.3L546.1 154.1L560.3 147.0M529.7 121.0L535.8 124.8L540.5 130.4M562.7 130.3L561.9 131.6L560.7 132.6M531.4 169.7L532.8 167.2L534.9 165.3M578.1 160.4L568.1 155.1L560.3 147.0" fill="none" stroke="#a88fb8" stroke-width=".55" stroke-linejoin="round" opacity=".5" stroke-dasharray="1.6 .5"/><path d="M99.3 68.3C99.1 75.4 98.1 82.3 97.9 89.6 M210.6 22.4C214.6 16.0 214.2 8.4 216.3 1.3 M236.1 116.7C235.6 119.1 234.9 121.5 234.5 124.0 M412.7 109.1C406.5 111.8 399.8 111.5 393.2 112.9 M578.0 121.7C584.5 121.3 591.1 121.1 597.5 118.8 M80.8 16.2C80.3 17.7 79.2 18.8 78.2 19.9 M48.4 56.0C55.4 61.1 56.9 70.4 63.5 76.1 M-0.0 5.4C9.8 13.9 23.9 15.9 32.6 26.7 M167.0 144.9C163.2 139.5 158.1 136.0 151.7 133.9 M578.0 121.7C582.1 119.0 585.7 115.8 589.3 112.3 M76.8 45.3C80.0 50.4 82.4 55.7 82.4 62.0 M419.1 103.8C420.2 111.6 424.1 119.0 422.9 127.5 M370.9 65.9C371.5 71.0 370.8 75.9 369.4 80.9 M370.9 65.9C375.1 61.7 381.0 60.8 386.3 58.4 M447.1 132.2C453.9 132.4 460.5 134.8 467.6 133.6 M253.7 21.5C256.1 23.2 258.5 25.2 261.2 26.7 M548.4 120.2C548.5 117.1 548.9 114.0 548.7 110.8 M82.4 62.0C88.0 63.9 93.9 65.3 99.3 68.3 M678.8 144.9C669.9 137.3 659.6 133.4 647.5 133.1 M309.6 182.4C314.9 188.3 321.6 192.0 328.7 195.4 M261.2 26.7C254.9 26.1 248.6 25.1 242.5 22.4 M390.7 32.5C394.0 34.7 397.4 36.9 399.6 40.5 M643.1 109.1C635.5 111.5 629.7 117.1 622.4 120.5 M99.3 68.3C105.5 68.7 111.1 65.7 117.3 65.0 M53.3 38.9C57.8 38.9 61.7 37.1 65.5 34.7 M101.9 29.8C92.9 29.4 85.6 24.9 78.2 19.9 M399.6 40.5C406.7 43.2 414.1 41.5 421.6 42.3 M394.5 157.3C397.8 155.5 399.1 151.8 401.8 149.3 M271.9 59.0C270.1 64.4 265.1 67.6 262.3 72.5 M285.6 129.0C282.6 130.6 280.7 133.6 277.6 135.4 M445.4 108.2C448.3 115.9 447.5 124.0 447.1 132.2 M262.3 72.5C266.7 76.3 272.0 77.6 277.6 78.8 M420.0 168.8C423.4 172.3 425.2 176.6 426.7 181.3 M108.8 94.0C113.7 97.0 117.5 101.0 119.9 106.4 M53.5 2.9C59.7 5.0 66.3 2.8 72.6 5.1 M643.1 109.1C638.7 107.4 634.2 106.3 629.7 104.7 M507.8 95.2C512.2 100.8 512.7 108.4 516.9 114.4 M409.6 0.7C410.3 4.5 408.6 8.0 408.7 11.9 M324.7 105.8C329.0 104.0 333.5 104.4 338.1 104.1 M404.5 183.0C411.7 180.9 419.1 180.6 426.7 181.3 M399.6 40.5C407.3 39.7 413.6 35.9 419.8 31.3 M526.2 102.6C523.6 98.6 523.3 93.4 520.0 89.6 M288.1 38.9C284.1 46.7 277.9 52.6 271.9 59.0 M597.5 118.8C597.1 115.4 595.5 112.4 594.0 109.4 M176.3 104.9C168.8 105.6 162.6 99.5 154.8 100.5 M264.8 147.5C266.7 152.1 267.5 156.9 267.6 161.9 M548.4 120.2C552.3 116.8 554.1 111.7 557.8 107.9 M129.5 117.9C137.2 117.1 144.8 116.3 152.6 119.1 M166.8 33.1C177.4 31.9 186.8 37.2 197.2 38.3 M294.5 86.6C297.9 92.0 298.6 98.5 301.4 104.4 M163.9 167.3C164.9 161.2 166.8 155.4 168.6 149.3 M313.4 60.8C311.9 66.7 314.4 72.3 314.7 78.2 M557.5 184.4C563.2 193.5 567.5 203.5 576.2 210.9 M205.2 127.5C214.6 124.1 224.3 122.8 234.5 124.0 M409.6 0.7C399.9 -0.7 390.7 1.2 381.4 4.7 M251.9 152.1C257.7 154.4 263.0 157.4 267.6 161.9 M170.1 169.1C174.3 168.1 178.4 167.1 181.9 164.2 M364.3 19.0C358.9 10.6 360.5 -0.4 354.1 -8.7 M411.8 63.8C408.0 70.8 407.7 78.7 406.5 86.6 M523.1 198.5C515.1 194.4 506.3 191.6 499.6 184.7 M97.9 89.6C102.0 89.8 104.6 93.7 108.8 94.0 M445.4 108.2C448.1 111.3 449.1 115.5 451.8 118.8 M407.2 14.4C407.2 9.7 409.8 5.5 409.6 0.7 M330.3 8.2C338.5 3.1 345.1 -4.1 354.1 -8.7 M79.3 81.8C86.0 82.9 91.2 87.9 97.9 89.6 M197.2 38.3C200.0 31.7 205.0 26.9 210.6 22.4 M235.0 76.7C241.7 76.9 248.4 78.2 255.2 76.4 M264.8 147.5C267.3 146.7 269.4 145.0 272.1 144.4 M560.4 162.2C555.3 162.8 551.8 167.1 546.7 168.2 M79.3 81.8C83.7 85.0 85.8 89.8 88.2 94.6 M507.8 95.2C514.0 97.4 520.7 98.1 526.2 102.6 M388.3 133.3C394.0 137.5 397.7 143.4 401.8 149.3 M283.9 74.9C287.2 79.0 291.9 81.7 294.5 86.6 M404.5 183.0C410.1 187.8 413.2 195.1 420.0 199.1 M624.0 144.9C629.8 145.4 634.8 142.7 640.2 140.6 M170.1 169.1C161.6 174.7 154.5 182.1 147.0 189.5 M146.8 94.9C141.5 90.6 137.1 85.6 134.8 78.8 M343.0 4.7C345.1 -1.0 351.6 -3.0 354.1 -8.7 M139.9 14.4C146.9 16.2 153.9 18.4 161.5 16.8 M176.3 104.9C181.2 110.3 181.0 117.8 184.3 124.0 M351.4 74.6C356.0 79.5 359.7 85.2 365.2 89.6 M288.1 38.9C289.1 46.7 285.3 54.4 288.1 62.3 M222.6 55.7C225.7 62.1 224.5 69.2 225.9 76.1 M560.4 162.2C558.2 169.4 556.4 176.6 557.5 184.4 M31.1 -6.8C37.9 -2.3 45.4 0.7 53.5 2.9 M369.4 80.9C376.2 84.9 383.3 88.0 391.6 88.4 M264.8 147.5C260.7 149.5 256.1 150.0 251.9 152.1 M200.1 119.1C191.0 119.1 182.7 121.8 174.8 126.6 M225.9 76.1C228.9 76.1 231.9 77.2 235.0 76.7 M197.2 38.3C197.5 45.8 201.0 52.3 203.4 59.3 M319.6 57.8C317.5 58.6 315.6 60.0 313.4 60.8 M557.5 184.4C562.7 182.4 567.7 180.1 572.6 177.3 M53.5 2.9C55.1 10.4 51.4 17.5 51.5 25.2 M166.8 33.1C167.0 27.1 164.8 21.9 161.5 16.8 M163.9 167.3C165.9 168.3 168.1 168.3 170.1 169.1 M267.4 78.5C263.5 77.1 259.4 76.9 255.2 76.4 M118.1 112.9C117.7 112.1 117.6 111.3 117.0 110.5 M378.5 22.7C377.7 16.5 381.5 11.0 381.4 4.7 M313.4 60.8C311.9 64.9 308.0 67.0 305.6 70.4 M412.7 109.1C414.8 107.3 416.6 105.2 419.1 103.8 M249.0 135.4C249.1 141.0 250.9 146.4 251.9 152.1 M590.0 174.2C583.4 180.8 575.9 186.6 572.0 195.7 M170.1 169.1C164.6 177.8 159.0 186.5 149.2 191.8 M234.5 124.0C239.9 127.1 243.6 132.1 249.0 135.4 M629.7 104.7C628.4 110.4 626.2 115.7 622.4 120.5 M364.3 19.0C358.6 12.2 350.8 8.8 343.0 4.7 M314.7 78.2C316.9 84.3 316.8 91.1 320.5 97.0 M447.8 201.3C440.0 195.6 434.7 187.3 426.7 181.3 M299.6 148.1C295.1 150.0 290.1 150.1 285.2 150.7 M311.2 119.1C307.2 121.9 303.7 125.2 301.4 129.9 M277.2 114.9C275.5 117.2 275.4 120.1 274.1 122.6 M369.4 80.9C367.8 83.7 367.0 86.8 365.2 89.6 M608.6 99.9C598.1 95.0 591.3 85.4 582.4 77.9 M330.3 8.2C334.7 8.1 338.9 7.0 343.0 4.7 M560.4 162.2C566.2 156.6 572.0 151.0 574.9 142.9 M319.6 57.8C327.9 61.6 335.7 66.1 342.1 73.1 M285.2 150.7C282.5 145.7 279.4 141.0 277.6 135.4 M241.9 98.7C241.2 105.1 238.4 110.7 236.1 116.7 M404.5 183.0C406.8 181.4 408.7 179.4 410.9 177.6 M624.0 144.9C620.6 155.3 612.3 163.3 610.0 174.5 M411.8 63.8C404.6 61.5 397.6 64.5 390.3 64.4 M447.8 201.3C458.5 198.1 469.2 197.9 480.2 201.6 M139.9 14.4C143.7 19.6 150.9 20.7 154.6 26.4 M351.4 74.6C357.0 77.6 363.2 79.1 369.4 80.9 M369.4 80.9C374.3 81.8 378.4 85.1 383.6 85.7 M325.8 181.9C328.4 186.0 328.9 190.6 328.7 195.4 M118.1 112.9C122.1 112.2 125.9 110.4 130.1 111.1 M480.0 173.3C485.6 178.6 493.6 179.6 499.6 184.7 M266.1 17.8C258.7 21.3 251.1 23.4 242.5 22.4 M117.3 65.0C113.6 74.3 112.1 84.3 108.8 94.0 M378.5 22.7C378.5 22.2 378.6 21.7 378.5 21.2 M420.9 147.8C423.5 145.8 425.9 143.5 427.1 140.3 M63.5 76.1C68.5 78.7 74.3 78.7 79.3 81.8 M420.0 199.1C429.2 199.7 438.5 198.4 447.8 201.3 M301.4 129.9C298.4 128.2 297.0 125.1 294.7 122.6 M590.0 174.2C596.6 175.3 603.2 172.8 610.0 174.5 M364.3 19.0C369.1 13.4 375.0 9.0 381.4 4.7 M299.6 148.1C298.7 155.1 299.7 162.1 299.9 169.3 M597.5 118.8C595.0 116.4 592.5 114.0 589.3 112.3 M277.6 78.8C283.4 81.0 288.2 85.1 294.5 86.6 M548.4 120.2C545.5 127.2 549.0 134.9 546.0 142.0 M419.8 31.3C427.8 27.0 432.8 19.9 438.0 12.5 M241.9 98.7C244.4 100.4 245.8 103.0 247.7 105.2 M383.6 85.7C391.1 86.7 398.6 88.5 406.5 86.6 M421.6 42.3C419.0 49.7 414.8 56.3 411.8 63.8 M233.7 99.0C232.9 105.1 234.0 110.9 236.1 116.7 M63.5 76.1C71.2 73.5 75.8 66.6 82.4 62.0 M277.2 177.3C279.5 180.3 283.1 182.2 285.2 185.5 M314.7 78.2C324.0 78.0 333.2 77.0 342.1 73.1 M466.2 115.2C466.1 121.4 466.2 127.4 467.6 133.6 M139.9 14.4C150.1 18.7 155.9 29.3 166.8 33.1 M288.1 62.3C285.2 66.0 283.9 70.2 283.9 74.9 M277.6 78.8C274.3 78.6 270.9 77.9 267.4 78.5 M394.0 125.8C387.6 122.3 383.6 115.5 376.3 112.9 M467.6 133.6C472.2 128.3 473.1 121.0 476.9 114.9 M119.9 106.4C120.0 108.7 118.8 110.7 118.1 112.9 M613.5 128.7C616.5 126.1 619.9 123.9 622.4 120.5 M408.7 11.9C418.4 12.0 428.1 9.0 438.0 12.5 M19.7 15.0C23.1 19.8 29.5 21.4 32.6 26.7 M263.2 119.6C266.6 121.4 270.6 120.7 274.1 122.6 M325.8 181.9C320.5 182.7 315.1 181.1 309.6 182.4 M118.1 112.9C122.3 113.6 126.0 115.2 129.5 117.9 M266.1 17.8C264.4 20.7 262.4 23.4 261.2 26.7 M183.5 -5.9C193.7 -0.8 204.8 0.4 216.3 1.3 M378.5 22.7C374.2 20.0 369.1 20.3 364.3 19.0 M301.4 129.9C298.9 135.7 302.1 142.1 299.6 148.1 M216.3 1.3C211.5 5.9 205.1 8.2 199.5 11.9 M301.4 129.9C296.2 130.4 291.1 128.4 285.6 129.0 M309.9 18.4C316.9 15.7 323.4 11.7 330.3 8.2 M454.9 175.6C463.4 176.9 471.5 174.5 480.0 173.3 M263.2 119.6C262.7 114.8 263.1 109.9 263.6 104.9 M48.4 56.0C55.6 58.2 62.9 58.9 70.6 57.2 M552.0 97.3C552.4 105.1 547.7 112.1 548.4 120.2 M184.3 124.0C190.1 124.2 194.8 120.8 200.1 119.1 M330.3 8.2C322.1 4.5 312.9 3.6 305.0 -1.5 M277.6 78.8C279.7 77.6 281.8 76.3 283.9 74.9 M151.7 133.9C156.9 139.4 164.6 142.1 168.6 149.3 M51.5 25.2C43.9 25.0 37.7 29.5 30.6 31.9 M572.0 195.7C573.7 200.6 573.7 206.0 576.2 210.9 M479.6 144.1C486.9 147.5 494.5 150.3 502.2 153.6 M200.1 119.1C201.4 122.1 204.4 124.1 205.2 127.5 M277.6 135.4C275.7 138.3 274.2 141.4 272.1 144.4 M419.8 31.3C418.3 23.7 414.5 17.4 408.7 11.9 M480.0 173.3C481.7 182.7 480.3 192.0 480.2 201.6 M161.5 16.8C166.7 7.4 175.6 1.5 183.5 -5.9 M267.6 161.9C269.6 167.7 272.5 173.0 277.2 177.3 M285.4 87.2C288.4 86.9 291.4 86.4 294.5 86.6 M241.9 98.7C239.2 99.5 236.4 98.7 233.7 99.0 M32.6 26.7C31.4 28.2 31.8 30.3 30.6 31.9 M526.2 102.6C522.3 105.8 521.4 111.4 516.9 114.4 M76.8 45.3C75.6 49.7 73.5 53.6 70.6 57.2 M652.6 185.0C639.0 179.6 624.0 179.9 610.0 174.5 M629.5 174.5C623.1 175.2 616.6 173.9 610.0 174.5 M256.1 -7.4C258.0 2.3 252.9 11.5 253.7 21.5 M72.6 5.1C75.8 9.5 76.2 14.9 78.2 19.9 M229.4 65.6C231.9 69.0 233.9 72.6 235.0 76.7 M370.7 46.3C377.4 41.9 383.7 36.9 390.7 32.5 M678.8 144.9C665.9 144.7 653.2 142.9 640.2 140.6 M262.3 72.5C259.9 73.8 257.9 75.7 255.2 76.4 M643.1 109.1C646.2 116.7 645.2 125.0 647.5 133.1 M108.8 94.0C111.0 99.7 114.1 105.0 117.0 110.5 M263.2 119.6C268.2 119.3 272.6 116.9 277.2 114.9 M80.8 16.2C78.6 14.8 75.8 15.1 73.5 13.7 M289.2 49.0C282.9 51.3 277.0 54.3 271.9 59.0 M285.6 129.0C282.4 125.7 277.7 125.3 274.1 122.6 M76.8 45.3C84.4 39.1 95.0 37.6 101.9 29.8 M370.9 65.9C369.5 59.5 373.1 52.9 370.7 46.3 M51.5 25.2C45.1 23.9 39.2 27.8 32.6 26.7 M152.6 119.1C153.2 124.0 151.2 128.8 151.7 133.9 M531.5 139.7C526.9 144.0 522.1 147.9 515.8 149.8 M299.9 169.3C293.7 173.5 290.5 180.3 285.2 185.5 M531.5 139.7C531.5 148.0 536.9 155.3 536.4 163.9 M370.7 46.3C376.1 49.9 380.4 55.0 386.3 58.4 M493.8 113.2C496.3 105.6 501.7 100.3 507.8 95.2 M285.4 87.2C285.4 83.1 285.6 78.9 283.9 74.9 M654.4 111.1C647.0 106.2 637.5 109.1 629.7 104.7 M404.5 183.0C409.6 178.3 415.6 174.6 420.0 168.8 M466.2 115.2C461.5 116.4 456.6 116.9 451.8 118.8 M410.9 177.6C416.4 177.6 421.7 178.4 426.7 181.3 M76.8 45.3C72.1 42.9 68.2 39.6 65.5 34.7 M176.3 104.9C175.6 112.1 175.2 119.3 174.8 126.6 M167.0 144.9C169.9 139.0 170.6 132.2 174.8 126.6 M467.6 154.4C466.9 149.7 467.4 145.0 468.9 140.3 M613.5 128.7C615.6 134.9 618.5 140.6 624.0 144.9 M608.6 99.9C602.8 101.5 599.9 107.6 594.0 109.4 M557.5 184.4C563.5 186.6 565.8 193.4 572.0 195.7 M572.6 177.3C578.3 176.1 584.3 176.4 590.0 174.2 M149.2 191.8C148.4 191.1 147.8 190.3 147.0 189.5 M305.6 70.4C308.6 73.0 311.8 75.4 314.7 78.2 M80.8 16.2C78.4 12.3 74.1 9.8 72.6 5.1 M654.4 111.1C651.1 118.0 648.0 125.0 647.5 133.1 M672.8 175.9C658.4 178.7 644.2 175.4 629.5 174.5 M406.5 86.6C409.7 93.0 415.2 97.6 419.1 103.8 M599.1 91.6C598.7 97.9 597.1 103.7 594.0 109.4 M394.0 125.8C393.8 121.5 392.0 117.4 393.2 112.9 M445.4 108.2C451.6 112.5 458.6 114.4 466.2 115.2 M97.9 89.6C94.5 90.7 91.0 92.0 88.2 94.6 M311.2 156.2C309.9 164.8 310.8 173.5 309.6 182.4 M480.2 201.6C487.0 196.5 493.0 190.5 499.6 184.7 M274.1 122.6C273.8 127.2 275.5 131.3 277.6 135.4 M608.6 99.9C605.0 97.7 603.1 93.5 599.1 91.6 M129.5 117.9C130.4 113.5 130.7 109.2 129.9 104.7 M560.4 162.2C552.4 160.9 544.6 163.9 536.4 163.9 M253.7 21.5C252.6 29.4 253.9 36.9 257.2 44.4 M422.9 127.5C423.7 131.9 424.9 136.2 427.1 140.3 M354.5 104.4C358.2 105.3 362.0 104.5 365.8 104.9 M152.6 119.1C154.3 113.1 152.1 106.6 154.8 100.5 M493.8 113.2C497.2 113.9 500.4 115.2 503.8 116.4 M388.3 133.3C393.1 140.5 393.2 149.0 394.5 157.3 M348.5 35.9C355.5 40.1 362.9 43.4 370.7 46.3 M557.5 184.4C552.9 179.8 552.1 172.6 546.7 168.2 M108.8 94.0C102.0 93.4 95.2 95.2 88.2 94.6 M557.8 107.9C554.6 108.5 551.7 109.7 548.7 110.8 M390.7 32.5C386.8 28.7 382.3 25.3 378.5 21.2 M320.5 97.0C325.5 101.4 331.9 102.3 338.1 104.1 M410.9 177.6C412.9 185.1 415.6 192.4 420.0 199.1 M203.4 59.3C210.2 60.3 215.6 54.7 222.6 55.7 M467.6 154.4C468.1 147.6 468.8 140.7 467.6 133.6 M378.5 21.2C378.5 15.6 380.0 10.3 381.4 4.7 M288.1 38.9C289.5 42.1 289.6 45.5 289.2 49.0 M-0.0 5.4C9.9 0.4 19.3 -5.7 31.1 -6.8 M410.9 177.6C413.4 174.1 417.8 172.7 420.0 168.8 M311.2 156.2C307.3 160.4 303.7 164.8 299.9 169.3 M275.4 107.6C273.3 112.4 274.3 117.5 274.1 122.6 M317.6 36.2C315.7 43.6 318.2 50.5 319.6 57.8 M531.5 139.7C536.1 141.6 541.3 139.8 546.0 142.0 M386.3 58.4C387.4 60.5 388.5 62.6 390.3 64.4 M197.2 38.3C195.1 29.4 201.4 21.1 199.5 11.9 M343.8 110.2C346.9 107.4 350.8 106.3 354.5 104.4 M166.8 33.1C162.2 31.9 158.7 28.7 154.6 26.4 M275.4 107.6C271.6 106.4 267.4 107.1 263.6 104.9 M476.9 114.9C482.7 116.2 488.0 113.5 493.8 113.2 M247.7 105.2C243.2 111.4 238.6 117.3 234.5 124.0 M348.5 35.9C353.2 29.8 358.0 23.9 364.3 19.0 M249.0 135.4C253.7 140.0 259.2 143.6 264.8 147.5 M210.6 22.4C206.3 19.5 203.8 14.9 199.5 11.9 M412.7 109.1C417.0 114.7 421.6 120.1 422.9 127.5 M640.2 140.6C633.1 135.1 626.2 129.3 622.4 120.5 M552.0 97.3C552.0 102.0 549.0 106.0 548.7 110.8 M271.9 59.0C276.2 63.9 278.3 70.7 283.9 74.9 M608.6 99.9C615.3 102.7 623.1 100.8 629.7 104.7 M319.6 185.8C321.5 190.1 324.6 193.1 328.7 195.4 M388.3 133.3C387.8 126.1 393.5 120.3 393.2 112.9 M129.5 117.9C129.6 115.6 129.9 113.4 130.1 111.1 M253.7 21.5C249.9 20.5 246.4 22.8 242.5 22.4 M305.0 -1.5C317.5 0.8 329.4 6.6 343.0 4.7 M343.8 110.2C342.3 107.9 340.0 106.2 338.1 104.1 M582.4 77.9C586.3 84.4 592.4 88.2 599.1 91.6 M101.9 29.8C95.3 24.8 86.8 22.8 80.8 16.2 M624.0 144.9C624.9 154.8 627.9 164.4 629.5 174.5 M467.6 154.4C473.0 159.8 477.8 165.6 480.0 173.3 M311.2 119.1C308.1 114.1 303.4 110.2 301.4 104.4 M275.4 107.6C276.1 110.0 276.3 112.5 277.2 114.9 M79.3 81.8C80.1 75.2 80.2 68.6 82.4 62.0 M365.2 89.6C371.3 88.6 377.3 86.6 383.6 85.7 M515.8 149.8C511.1 150.2 506.8 152.2 502.2 153.6 M624.0 144.9C626.4 136.7 625.6 128.6 622.4 120.5 M257.2 44.4C261.2 50.1 267.8 53.1 271.9 59.0 M364.3 19.0C369.2 18.4 373.5 21.8 378.5 21.2 M146.8 94.9C149.1 97.3 151.9 98.8 154.8 100.5 M299.6 148.1C303.7 150.4 307.7 152.8 311.2 156.2 M454.9 175.6C451.4 183.8 449.8 192.5 447.8 201.3 M311.2 119.1C315.9 115.0 320.6 110.8 324.7 105.8 M640.2 140.6C643.1 138.6 644.5 135.1 647.5 133.1 M552.0 97.3C554.5 100.4 554.6 104.9 557.8 107.9 M319.6 185.8C316.7 183.7 313.3 182.7 309.6 182.4 M388.3 133.3C389.3 130.2 391.3 127.7 394.0 125.8 M557.5 184.4C547.0 191.0 535.1 194.4 523.1 198.5 M343.8 110.2C337.7 108.2 330.8 109.2 324.7 105.8 M643.1 109.1C646.8 109.9 650.8 109.3 654.4 111.1 M383.6 85.7C386.5 85.8 388.8 87.8 391.6 88.4 M163.9 167.3C169.9 166.5 175.9 165.8 181.9 164.2 M277.2 177.3C279.9 180.6 281.9 184.2 284.3 187.8 M503.8 116.4C508.0 114.8 512.4 114.6 516.9 114.4 M233.7 99.0C237.9 101.9 242.4 104.3 247.7 105.2 M63.5 76.1C63.9 69.1 66.5 63.0 70.6 57.2 M365.2 89.6C364.2 94.7 365.1 99.7 365.8 104.9 M597.5 118.8C602.2 123.1 608.8 124.2 613.5 128.7 M467.6 154.4C471.3 150.8 474.9 146.9 479.6 144.1 M351.4 74.6C348.4 73.4 345.2 73.9 342.1 73.1 M523.1 198.5C528.8 187.6 536.0 177.2 536.4 163.9 M311.2 119.1C305.9 120.9 300.3 121.2 294.7 122.6 M407.2 14.4C407.8 13.6 408.4 12.9 408.7 11.9 M572.0 195.7C577.1 204.4 582.2 213.2 586.2 222.9 M393.2 112.9C387.6 114.5 382.0 111.4 376.3 112.9 M451.8 118.8C451.6 123.7 450.1 128.1 447.1 132.2 M325.8 181.9C323.7 183.1 321.8 184.5 319.6 185.8 M507.8 95.2C512.1 93.9 515.6 90.9 520.0 89.6 M266.1 17.8C261.7 18.2 258.3 21.5 253.7 21.5 M163.9 167.3C159.9 175.8 151.9 181.3 147.0 189.5 M117.3 65.0C124.4 67.8 129.5 73.3 134.8 78.8 M421.6 42.3C421.6 38.6 420.9 35.0 419.8 31.3 M515.8 149.8C523.3 153.4 530.6 157.4 536.4 163.9 M216.3 1.3C225.7 7.4 232.5 16.6 242.5 22.4 M589.3 112.3C590.7 111.2 592.1 109.9 594.0 109.4 M184.3 124.0C181.1 124.4 178.0 125.6 174.8 126.6 M560.4 162.2C562.9 168.4 566.9 173.5 572.6 177.3 M119.9 106.4C123.4 106.8 126.5 105.1 129.9 104.7 M119.9 106.4C118.7 107.6 118.2 109.3 117.0 110.5 M319.6 57.8C315.6 62.6 310.7 66.5 305.6 70.4 M480.0 173.3C489.4 169.1 496.5 162.4 502.2 153.6 M285.2 150.7C280.5 149.4 276.3 146.9 272.1 144.4 M420.9 147.8C421.3 154.8 421.0 161.7 420.0 168.8 M163.9 167.3C159.7 175.8 154.9 183.9 149.2 191.8 M420.9 147.8C414.7 149.7 408.3 148.5 401.8 149.3 M365.2 89.6C360.6 93.7 358.0 99.2 354.5 104.4 M652.6 185.0C645.8 179.6 637.5 177.7 629.5 174.5 M129.9 104.7C129.5 95.7 134.8 87.9 134.8 78.8 M256.1 -7.4C257.1 1.8 264.0 8.7 266.1 17.8 M578.0 121.7C581.8 115.8 588.6 113.6 594.0 109.4 M520.0 89.6C518.7 97.7 517.5 105.9 516.9 114.4 M229.4 65.6C227.1 68.7 226.7 72.4 225.9 76.1 M73.5 13.7C74.6 16.1 77.2 17.3 78.2 19.9 M70.6 57.2C74.4 58.9 78.0 61.2 82.4 62.0 M162.6 157.9C163.7 154.4 165.7 151.6 168.6 149.3 M576.2 210.9C578.8 215.4 581.6 219.8 586.2 222.9 M324.7 42.3C322.8 49.5 316.7 54.1 313.4 60.8 M378.5 22.7C383.4 24.9 386.0 29.9 390.7 32.5 M267.6 161.9C269.7 156.3 269.5 150.1 272.1 144.4 M168.6 149.3C174.0 153.3 176.4 160.0 181.9 164.2 M289.2 49.0C288.8 53.4 287.6 57.7 288.1 62.3 M420.0 199.1C421.8 193.1 423.7 187.1 426.7 181.3 M454.9 175.6C461.5 170.1 464.1 162.2 467.6 154.4 M72.6 5.1C72.9 7.9 73.1 10.8 73.5 13.7 M288.1 62.3C282.9 60.4 277.5 59.3 271.9 59.0 M277.6 78.8C279.4 82.4 283.0 84.2 285.4 87.2 M299.9 169.3C293.3 174.2 288.9 180.9 284.3 187.8 M154.6 26.4C157.7 23.8 159.8 20.6 161.5 16.8 M119.9 106.4C122.9 108.8 126.2 110.5 130.1 111.1 M419.8 31.3C417.5 24.3 412.0 19.7 407.2 14.4 M546.0 142.0C555.5 142.5 565.0 144.1 574.9 142.9 M365.8 104.9C368.7 108.3 372.9 110.0 376.3 112.9 M447.1 132.2C440.7 135.2 434.6 139.2 427.1 140.3 M420.9 147.8C422.8 141.2 424.6 134.7 422.9 127.5 M546.0 142.0C543.5 149.5 541.4 157.2 536.4 163.9 M503.8 116.4C503.6 109.1 506.0 102.3 507.8 95.2 M130.1 111.1C129.7 109.0 130.7 106.8 129.9 104.7 M130.1 111.1C125.8 112.3 121.5 111.3 117.0 110.5 M309.9 18.4C314.1 23.5 314.4 30.4 317.6 36.2 M129.9 104.7C136.1 102.6 140.3 96.9 146.8 94.9 M652.6 185.0C658.3 179.9 665.9 178.8 672.8 175.9 M229.4 65.6C227.4 62.2 225.9 58.4 222.6 55.7 M19.7 15.0C21.1 6.5 25.2 -0.5 31.1 -6.8 M479.6 144.1C475.8 143.6 472.3 142.3 468.9 140.3 M162.6 157.9C165.8 161.1 167.0 165.7 170.1 169.1 M582.4 77.9C585.5 88.6 592.1 97.9 594.0 109.4 M324.7 42.3C324.2 47.8 322.2 52.8 319.6 57.8 M324.7 42.3C332.1 38.3 340.8 39.5 348.5 35.9 M247.7 105.2C252.9 104.4 258.2 105.2 263.6 104.9 M536.4 163.9C539.5 166.1 543.2 166.7 546.7 168.2 M572.6 177.3C573.5 183.4 570.5 189.4 572.0 195.7 M285.6 129.0C289.3 127.8 291.4 124.4 294.7 122.6 M466.2 115.2C469.8 115.3 473.3 116.2 476.9 114.9 M256.1 -7.4C251.7 2.5 249.1 13.2 242.5 22.4 M370.9 65.9C377.2 63.3 383.9 67.0 390.3 64.4 M294.7 122.6C298.3 117.0 298.6 110.4 301.4 104.4 M51.5 25.2C56.1 28.4 60.7 31.5 65.5 34.7 M299.9 169.3C303.8 173.1 304.8 179.1 309.6 182.4 M19.7 15.0C22.7 21.0 28.0 25.5 30.6 31.9 M162.6 157.9C162.5 153.1 165.4 149.3 167.0 144.9 M261.2 26.7C260.4 32.7 257.3 38.1 257.2 44.4 M183.5 -5.9C187.8 0.8 193.6 6.3 199.5 11.9 M320.5 97.0C322.6 99.5 324.0 102.5 324.7 105.8 M203.4 59.3C212.3 60.3 221.0 62.0 229.4 65.6 M309.9 18.4C310.0 11.4 306.7 5.2 305.0 -1.5 M-0.0 5.4C6.2 9.2 11.9 14.0 19.7 15.0 M167.0 144.9C167.8 146.3 168.0 147.8 168.6 149.3 M317.6 36.2C320.5 37.6 321.9 40.7 324.7 42.3 M184.3 124.0C191.7 122.7 197.9 127.9 205.2 127.5 M479.6 144.1C476.5 139.6 472.5 136.3 467.6 133.6 M410.9 177.6C403.5 172.6 399.0 165.1 394.5 157.3 M262.3 72.5C263.7 74.8 266.3 76.0 267.4 78.5 M354.5 104.4C349.1 104.3 343.7 104.3 338.1 104.1 M51.5 25.2C50.6 29.9 52.4 34.3 53.3 38.9 M467.6 133.6C467.4 135.9 468.8 138.0 468.9 140.3 M391.6 88.4C396.6 88.8 401.4 86.9 406.5 86.6 M678.8 144.9C673.8 154.6 677.9 166.0 672.8 175.9 M53.5 2.9C59.3 8.0 67.5 8.6 73.5 13.7 M162.6 157.9C162.9 161.0 163.4 164.1 163.9 167.3 M247.7 105.2C244.8 110.0 239.1 111.9 236.1 116.7 M284.3 187.8C284.5 187.0 284.8 186.3 285.2 185.5 M409.6 0.7C420.2 1.7 428.9 7.2 438.0 12.5 M574.9 142.9C575.7 135.9 578.0 129.1 578.0 121.7 M53.3 38.9C52.2 44.7 49.3 50.0 48.4 56.0" fill="none" stroke="#f7c4a6" stroke-width=".6" opacity=".75"/><path d="M31.1 -6.8L41.4 -2.2L53.5 2.9L52.2 13.7L51.5 25.2L58.8 31.2L65.5 34.7L66.9 44.8L70.6 57.2L74.3 70.5L79.3 81.8L90.0 85.8L97.9 89.6L103.9 91.8L108.8 94.0L114.7 101.2L119.9 106.4L118.1 112.9L124.0 114.6L129.5 117.9L140.7 124.8L151.7 133.9L159.8 140.8L167.0 144.9L162.6 157.9L163.9 167.3L157.4 179.2L149.2 191.8 M53.5 2.9L62.9 10.3L73.5 13.7L80.8 16.2L92.6 23.1L101.9 29.8L110.5 45.3L117.3 65.0L126.6 70.3L134.8 78.8L140.6 85.9L146.8 94.9L154.8 100.5L165.4 101.0L176.3 104.9L181.2 115.7L184.3 124.0 M-0.0 5.4L8.8 11.3L19.7 15.0L27.2 21.0L32.6 26.7L30.6 31.9L40.0 44.9L48.4 56.0L56.0 66.5L63.5 76.1L71.0 78.7L79.3 81.8 M51.5 25.2L42.3 24.4L32.6 26.7 M79.3 81.8L89.8 73.3L99.3 68.3L109.2 65.0L117.3 65.0 M118.1 112.9L124.4 112.8L130.1 111.1L129.9 104.7 M130.1 111.1L143.8 103.6L154.8 100.5 M119.9 106.4L129.9 104.7 M176.3 104.9L189.7 111.7L200.1 119.1L205.2 127.5 M79.3 81.8L84.1 88.9L88.2 94.6 M76.8 45.3L80.2 53.5L82.4 62.0L76.1 60.6L70.6 57.2 M73.5 13.7L76.3 27.4L76.8 45.3 M53.3 38.9L51.5 25.2 M53.3 38.9L50.1 46.7L48.4 56.0 M129.5 117.9L140.7 120.0L152.6 119.1L163.0 121.7L174.8 126.6L184.3 124.0 M167.0 144.9L171.7 137.1L174.8 126.6 M167.0 144.9L168.6 149.3L175.5 158.2L181.9 164.2L176.4 167.0L170.1 169.1L163.9 167.3 M147.0 189.5L125.3 186.3L98.4 191.5 M72.6 5.1L73.5 13.7 M146.8 94.9L140.8 85.3L134.8 78.8 M139.9 14.4L146.8 21.8L154.6 26.4L160.9 31.0L166.8 33.1L180.7 36.3L197.2 38.3L204.2 31.5L210.6 22.4L204.1 16.2L199.5 11.9 M139.9 14.4L150.1 13.7L161.5 16.8 M166.8 33.1L187.4 47.2L203.4 59.3L214.5 67.6L225.9 76.1L235.0 76.7L234.7 87.6L233.7 99.0L241.9 98.7L247.7 105.2L255.8 104.7L263.6 104.9L270.3 106.3L275.4 107.6 M199.5 11.9L191.3 2.1L183.5 -5.9 M210.6 22.4L212.9 12.5L216.3 1.3 M210.6 22.4L228.7 22.3L242.5 22.4L248.2 23.0L253.7 21.5L259.7 19.4L266.1 17.8 M256.1 -7.4L259.7 4.7L266.1 17.8L277.6 30.7L288.1 38.9L289.2 49.0L288.1 62.3L283.9 74.9L277.6 78.8L285.4 87.2L293.8 95.9L301.4 104.4L306.7 112.1L311.2 119.1 M253.7 21.5L261.2 26.7L259.6 35.0L257.2 44.4 M261.2 26.7L266.1 17.8 M229.4 65.6L222.6 55.7 M229.4 65.6L225.9 76.1 M229.4 65.6L235.0 76.7 M233.7 99.0L234.0 109.0L236.1 116.7L234.5 124.0 M236.1 116.7L243.0 124.4L249.0 135.4L256.2 141.6L264.8 147.5 M247.7 105.2L255.7 113.1L263.2 119.6L269.9 117.8L277.2 114.9 M233.7 99.0L243.9 87.3L255.2 76.4L262.3 72.5L266.7 66.1L271.9 59.0L280.8 51.0L288.1 38.9 M271.9 59.0L274.9 68.2L277.6 78.8L267.4 78.5L265.0 92.8L263.6 104.9 M277.6 78.8L292.9 76.0L305.6 70.4L313.4 60.8L319.6 57.8 M288.1 38.9L302.3 48.8L319.6 57.8L331.5 67.4L342.1 73.1L351.4 74.6L359.9 78.4L369.4 80.9L377.2 83.5L383.6 85.7L391.6 88.4L406.9 97.9L419.1 103.8L431.6 105.2L445.4 108.2 M319.6 57.8L318.0 68.2L314.7 78.2L317.0 88.7L320.5 97.0L324.7 105.8L318.0 113.4L311.2 119.1 M319.6 57.8L322.7 49.3L324.7 42.3L317.6 36.2L313.1 28.0L309.9 18.4L308.1 8.1L305.0 -1.5 M319.6 57.8L335.5 47.8L348.5 35.9L358.4 42.0L370.7 46.3L386.4 44.7L399.6 40.5L410.1 41.7L421.6 42.3 M351.4 74.6L360.9 70.6L370.9 65.9L379.6 63.2L386.3 58.4L397.2 58.9L411.8 63.8 M411.8 63.8L417.7 51.4L421.6 42.3L419.8 31.3L428.7 19.9L438.0 12.5 M378.5 22.7L375.7 35.5L370.7 46.3L371.3 55.2L370.9 65.9L370.4 73.4L369.4 80.9L365.2 89.6L365.2 97.6L365.8 104.9 M378.5 22.7L384.1 28.8L390.7 32.5L399.6 40.5 M381.4 4.7L380.1 13.5L378.5 21.2L378.5 22.7 M381.4 4.7L396.7 5.2L409.6 0.7L425.5 5.5L438.0 12.5 M381.4 4.7L374.0 10.3L364.3 19.0L349.2 13.1L330.3 8.2L315.8 2.1L305.0 -1.5 M381.4 4.7L366.4 -0.8L354.1 -8.7 M330.3 8.2L336.9 6.4L343.0 4.7L348.3 -3.2L354.1 -8.7 M330.3 8.2L320.4 13.9L309.9 18.4 M408.7 11.9L409.6 0.7 M407.2 14.4L412.9 21.6L419.8 31.3 M390.3 64.4L386.3 58.4 M348.5 35.9L363.4 27.6L378.5 22.7 M251.9 152.1L258.0 150.6L264.8 147.5L272.1 144.4L277.6 135.4L285.6 129.0L294.7 122.6L303.0 119.8L311.2 119.1L326.0 112.9L343.8 110.2L349.9 106.6L354.5 104.4L360.7 105.7L365.8 104.9L371.3 108.1L376.3 112.9L383.7 113.6L393.2 112.9L402.3 110.9L412.7 109.1L419.1 103.8 M311.2 119.1L306.2 124.5L301.4 129.9L301.1 140.3L299.6 148.1L298.7 159.9L299.9 169.3L304.0 177.0L309.6 182.4L319.6 185.8L325.0 189.9L328.7 195.4 M299.6 148.1L304.7 152.1L311.2 156.2 M299.6 148.1L292.0 149.9L285.2 150.7L278.4 147.2L272.1 144.4 M264.8 147.5L266.3 155.0L267.6 161.9L271.8 170.1L277.2 177.3L285.2 185.5L284.3 187.8 M299.9 169.3L291.5 177.3L285.2 185.5 M285.6 129.0L281.8 122.3L277.2 114.9L275.4 107.6L279.3 98.5L285.4 87.2 M285.6 129.0L292.3 138.2L299.6 148.1 M274.1 122.6L277.6 135.4 M324.7 105.8L331.9 105.2L338.1 104.1L343.8 110.2 M319.6 185.8L325.8 181.9 M393.2 112.9L394.0 125.8 M391.6 88.4L393.2 100.2L393.2 112.9 M406.5 86.6L398.9 87.8L391.6 88.4 M406.5 86.6L412.8 94.5L419.1 103.8 M445.4 108.2L455.6 110.9L466.2 115.2L476.9 114.9L485.3 114.9L493.8 113.2L503.8 116.4L510.4 114.9L516.9 114.4L522.8 127.4L531.5 139.7 M466.2 115.2L458.9 116.0L451.8 118.8L450.2 125.7L447.1 132.2L438.3 135.1L427.1 140.3L420.9 147.8L419.9 158.4L420.0 168.8L414.9 172.6L410.9 177.6L404.5 183.0 M447.1 132.2L458.5 134.6L468.9 140.3L479.6 144.1L491.9 148.1L502.2 153.6L509.5 151.6L515.8 149.8L522.7 144.5L531.5 139.7 M468.9 140.3L467.6 154.4L472.5 165.1L480.0 173.3L490.6 180.8L499.6 184.7L509.9 193.5L523.1 198.5 M447.1 132.2L436.3 131.3L422.9 127.5L403.3 128.2L388.3 133.3 M388.3 133.3L394.1 140.2L401.8 149.3L394.5 157.3L400.0 168.8L404.5 183.0 M420.9 147.8L412.6 148.3L401.8 149.3 M404.5 183.0L416.5 184.0L426.7 181.3L441.9 178.4L454.9 175.6L468.2 176.2L480.0 173.3 M404.5 183.0L413.0 189.5L420.0 199.1L432.2 201.1L447.8 201.3 M454.9 175.6L451.5 187.3L447.8 201.3 M480.0 173.3L479.3 188.8L480.2 201.6 M480.0 173.3L490.2 162.9L502.2 153.6 M479.6 144.1L474.1 149.5L467.6 154.4 M467.6 133.6L468.9 140.3 M476.9 114.9L471.9 124.6L467.6 133.6 M531.5 139.7L533.6 152.1L536.4 163.9L546.7 168.2L551.1 176.3L557.5 184.4L565.9 190.3L572.0 195.7L574.5 204.1L576.2 210.9L581.6 216.3L586.2 222.9 M531.5 139.7L539.1 140.8L546.0 142.0L560.4 141.7L574.9 142.9L602.1 147.1L624.0 144.9L631.1 142.0L640.2 140.6L661.8 142.6L678.8 144.9 M546.0 142.0L553.0 151.3L560.4 162.2L565.8 170.5L572.6 177.3L580.6 175.5L590.0 174.2L599.4 175.3L610.0 174.5L620.3 172.9L629.5 174.5L640.4 178.8L652.6 185.0L662.5 179.1L672.8 175.9 M557.5 184.4L565.3 181.5L572.6 177.3 M557.5 184.4L538.9 194.6L523.1 198.5 M536.4 163.9L529.7 181.9L523.1 198.5 M546.0 142.0L546.4 131.6L548.4 120.2L548.7 110.8L552.0 97.3 M516.9 114.4L521.2 107.8L526.2 102.6L522.5 95.0L520.0 89.6 M526.2 102.6L539.0 99.4L552.0 97.3 M516.9 114.4L532.6 110.6L548.7 110.8L557.8 107.9L575.0 109.8L589.3 112.3L594.0 109.4L601.3 104.0L608.6 99.9L620.3 102.7L629.7 104.7L636.8 105.7L643.1 109.1L648.7 110.7L654.4 111.1 M578.0 121.7L583.1 116.5L589.3 112.3 M546.0 142.0L562.9 128.9L578.0 121.7 M597.5 118.8L589.3 112.3 M597.5 118.8L606.4 124.6L613.5 128.7L618.0 137.5L624.0 144.9 M613.5 128.7L622.4 120.5L633.8 125.8L647.5 133.1L664.8 136.6L678.8 144.9 M608.6 99.9L603.5 95.0L599.1 91.6L590.2 85.1L582.4 77.9L568.3 90.2L552.0 97.3 M507.8 95.2L499.7 103.0L493.8 113.2 M507.8 95.2L513.5 92.7L520.0 89.6 M590.0 174.2L607.4 158.3L624.0 144.9 M590.0 174.2L579.3 185.7L572.0 195.7 M624.0 144.9L626.5 159.8L629.5 174.5 M574.9 142.9L581.3 158.2L590.0 174.2 M493.8 113.2L502.0 104.6L507.8 95.2 M515.8 149.8L526.3 158.5L536.4 163.9" fill="none" stroke="#f4b3a8" stroke-width=".8" stroke-linejoin="round" opacity=".72"/></g>
<g font-family="Liberation Sans, sans-serif" text-anchor="middle" filter="url(#bl2)"><text x="77.7" y="9.0" font-size="6.3" fill="#484848" stroke="#fff" stroke-width=".5" stroke-opacity=".4" paint-order="stroke" opacity=".7">Città di San</text><text x="77.7" y="16.8" font-size="6.3" fill="#484848" stroke="#fff" stroke-width=".5" stroke-opacity=".4" paint-order="stroke" opacity=".7">Marino</text><text x="33.0" y="16.3" font-size="4.9" fill="#484848" stroke="#fff" stroke-width=".5" stroke-opacity=".4" paint-order="stroke" opacity=".7">La Spezia</text><text x="38.6" y="26.9" font-size="6.3" fill="#484848" stroke="#fff" stroke-width=".5" stroke-opacity=".4" paint-order="stroke" opacity=".7">Firenze</text><text x="49.8" y="36.9" font-size="5.0" fill="#8b7799" font-style="italic" stroke="#fff" stroke-width=".5" stroke-opacity=".4" paint-order="stroke" opacity=".7">Toscana</text><text x="76.2" y="43.3" font-size="5.3" fill="#484848" stroke="#fff" stroke-width=".5" stroke-opacity=".4" paint-order="stroke" opacity=".7">Perugia</text><text x="47.6" y="53.9" font-size="5.0" fill="#484848" stroke="#fff" stroke-width=".5" stroke-opacity=".4" paint-order="stroke" opacity=".7">Grosseto</text><text x="81.8" y="67.2" font-size="5.2" fill="#484848" stroke="#fff" stroke-width=".5" stroke-opacity=".4" paint-order="stroke" opacity=".7">Terni</text><text x="108.4" y="71.8" font-size="5.0" fill="#8b7799" font-style="italic" stroke="#fff" stroke-width=".5" stroke-opacity=".4" paint-order="stroke" opacity=".7">Abruzzo</text><text x="77.7" y="89.3" font-size="7.2" fill="#333333" stroke="#fff" stroke-width=".5" stroke-opacity=".4" paint-order="stroke" opacity=".7">Roma</text><text x="115.8" y="89.9" font-size="7.6" fill="#75607f" stroke="#fff" stroke-width=".5" stroke-opacity=".4" paint-order="stroke" opacity=".7">Italia</text><text x="101.2" y="27.7" font-size="5.4" fill="#484848" stroke="#fff" stroke-width=".5" stroke-opacity=".4" paint-order="stroke" opacity=".7">Ancona</text><text x="136.5" y="8.5" font-size="6.3" fill="#75607f" stroke="#fff" stroke-width=".5" stroke-opacity=".4" paint-order="stroke" opacity=".7">Hrvatska</text><text x="139.2" y="19.8" font-size="5.3" fill="#484848" stroke="#fff" stroke-width=".5" stroke-opacity=".4" paint-order="stroke" opacity=".7">Zadar</text><text x="159.3" y="42.4" font-size="4.8" fill="#8b7799" font-style="italic" stroke="#fff" stroke-width=".5" stroke-opacity=".4" paint-order="stroke" opacity=".7">Splitsko-</text><text x="158.7" y="48.2" font-size="4.8" fill="#8b7799" font-style="italic" stroke="#fff" stroke-width=".5" stroke-opacity=".4" paint-order="stroke" opacity=".7">dalmatinska</text><text x="159.3" y="54.3" font-size="4.8" fill="#8b7799" font-style="italic" stroke="#fff" stroke-width=".5" stroke-opacity=".4" paint-order="stroke" opacity=".7">županija</text><text x="87.8" y="99.1" font-size="5.0" fill="#484848" stroke="#fff" stroke-width=".5" stroke-opacity=".4" paint-order="stroke" opacity=".7">Latina</text><text x="198.0" y="15.9" font-size="6.9" fill="#75607f" stroke="#fff" stroke-width=".5" stroke-opacity=".4" paint-order="stroke" opacity=".7">Bosna i Hercegovina /</text><text x="199.8" y="23.3" font-size="6.9" fill="#75607f" stroke="#fff" stroke-width=".5" stroke-opacity=".4" paint-order="stroke" opacity=".7">Босна и</text><text x="199.2" y="30.7" font-size="6.9" fill="#75607f" stroke="#fff" stroke-width=".5" stroke-opacity=".4" paint-order="stroke" opacity=".7">Херцеговина</text><text x="267.3" y="14.2" font-size="7.2" fill="#75607f" stroke="#fff" stroke-width=".5" stroke-opacity=".4" paint-order="stroke" opacity=".7">Србија</text><text x="266.9" y="26.8" font-size="4.9" fill="#8b7799" font-style="italic" stroke="#fff" stroke-width=".5" stroke-opacity=".4" paint-order="stroke" opacity=".7">Централна</text><text x="265.1" y="32.4" font-size="4.9" fill="#8b7799" font-style="italic" stroke="#fff" stroke-width=".5" stroke-opacity=".4" paint-order="stroke" opacity=".7">Србија</text><text x="256.2" y="42.0" font-size="5.0" fill="#484848" stroke="#fff" stroke-width=".5" stroke-opacity=".4" paint-order="stroke" opacity=".7">Нови Пазар</text><text x="287.0" y="43.9" font-size="5.3" fill="#484848" stroke="#fff" stroke-width=".5" stroke-opacity=".4" paint-order="stroke" opacity=".7">Ниш</text><text x="309.4" y="23.6" font-size="5.3" fill="#484848" stroke="#fff" stroke-width=".5" stroke-opacity=".4" paint-order="stroke" opacity=".7">Видин</text><text x="323.2" y="40.3" font-size="5.2" fill="#484848" stroke="#fff" stroke-width=".5" stroke-opacity=".4" paint-order="stroke" opacity=".7">Враца</text><text x="325.9" y="5.6" font-size="6.3" fill="#484848" stroke="#fff" stroke-width=".5" stroke-opacity=".4" paint-order="stroke" opacity=".7">Craiova</text><text x="195.8" y="43.2" font-size="5.2" fill="#484848" stroke="#fff" stroke-width=".5" stroke-opacity=".4" paint-order="stroke" opacity=".7">Mostar</text><text x="224.9" y="58.3" font-size="6.6" fill="#75607f" stroke="#fff" stroke-width=".5" stroke-opacity=".4" paint-order="stroke" opacity=".7">Crna Gora /</text><text x="224.9" y="66.1" font-size="6.6" fill="#75607f" stroke="#fff" stroke-width=".5" stroke-opacity=".4" paint-order="stroke" opacity=".7">Црна Гора</text><text x="266.2" y="60.5" font-size="6.6" fill="#75607f" stroke="#fff" stroke-width=".5" stroke-opacity=".4" paint-order="stroke" opacity=".7">Kosova /</text><text x="265.1" y="67.7" font-size="6.6" fill="#75607f" stroke="#fff" stroke-width=".5" stroke-opacity=".4" paint-order="stroke" opacity=".7">Kosovo</text><text x="264.4" y="76.2" font-size="5.0" fill="#484848" stroke="#fff" stroke-width=".5" stroke-opacity=".4" paint-order="stroke" opacity=".7">Тетово</text><text x="245.0" y="78.9" font-size="4.9" fill="#8b7799" font-style="italic" stroke="#fff" stroke-width=".5" stroke-opacity=".4" paint-order="stroke" opacity=".7">Shqipëria</text><text x="245.0" y="84.5" font-size="4.9" fill="#8b7799" font-style="italic" stroke="#fff" stroke-width=".5" stroke-opacity=".4" paint-order="stroke" opacity=".7">Veriore</text><text x="283.7" y="88.5" font-size="6.8" fill="#75607f" stroke="#fff" stroke-width=".5" stroke-opacity=".4" paint-order="stroke" opacity=".7">Северна</text><text x="283.7" y="95.2" font-size="6.8" fill="#75607f" stroke="#fff" stroke-width=".5" stroke-opacity=".4" paint-order="stroke" opacity=".7">Македонија</text><text x="238.3" y="94.6" font-size="5.0" fill="#484848" stroke="#fff" stroke-width=".5" stroke-opacity=".4" paint-order="stroke" opacity=".7">Kamëz</text><text x="408.9" y="5.7" font-size="5.2" fill="#484848" stroke="#fff" stroke-width=".5" stroke-opacity=".4" paint-order="stroke" opacity=".7">Slobozia</text><text x="407.7" y="17.5" font-size="5.2" fill="#484848" stroke="#fff" stroke-width=".5" stroke-opacity=".4" paint-order="stroke" opacity=".7">Călărași</text><text x="437.5" y="19.7" font-size="6.4" fill="#484848" stroke="#fff" stroke-width=".5" stroke-opacity=".4" paint-order="stroke" opacity=".7">Constanța</text><text x="348.5" y="20.4" font-size="5.2" fill="#484848" stroke="#fff" stroke-width=".5" stroke-opacity=".4" paint-order="stroke" opacity=".7">Alexandria</text><text x="377.1" y="20.5" font-size="5.3" fill="#484848" stroke="#fff" stroke-width=".5" stroke-opacity=".4" paint-order="stroke" opacity=".7">Русе</text><text x="347.4" y="33.9" font-size="5.3" fill="#484848" stroke="#fff" stroke-width=".5" stroke-opacity=".4" paint-order="stroke" opacity=".7">Плевен</text><text x="378.7" y="34.3" font-size="5.3" fill="#484848" stroke="#fff" stroke-width=".5" stroke-opacity=".4" paint-order="stroke" opacity=".7">Разград</text><text x="420.7" y="39.6" font-size="6.4" fill="#484848" stroke="#fff" stroke-width=".5" stroke-opacity=".4" paint-order="stroke" opacity=".7">Варна</text><text x="360.8" y="44.4" font-size="5.3" fill="#484848" stroke="#fff" stroke-width=".5" stroke-opacity=".4" paint-order="stroke" opacity=".7">Велико</text><text x="358.6" y="50.0" font-size="5.3" fill="#484848" stroke="#fff" stroke-width=".5" stroke-opacity=".4" paint-order="stroke" opacity=".7">Търново</text><text x="399.3" y="46.0" font-size="5.3" fill="#484848" stroke="#fff" stroke-width=".5" stroke-opacity=".4" paint-order="stroke" opacity=".7">Шумен</text><text x="364.2" y="58.8" font-size="6.3" fill="#75607f" stroke="#fff" stroke-width=".5" stroke-opacity=".4" paint-order="stroke" opacity=".7">България</text><text x="396.1" y="60.0" font-size="5.3" fill="#484848" stroke="#fff" stroke-width=".5" stroke-opacity=".4" paint-order="stroke" opacity=".7">Сливен</text><text x="410.7" y="69.0" font-size="5.3" fill="#484848" stroke="#fff" stroke-width=".5" stroke-opacity=".4" paint-order="stroke" opacity=".7">Бургас</text><text x="378.2" y="81.9" font-size="5.3" fill="#484848" stroke="#fff" stroke-width=".5" stroke-opacity=".4" paint-order="stroke" opacity=".7">Хасково</text><text x="378.7" y="90.2" font-size="5.3" fill="#484848" stroke="#fff" stroke-width=".5" stroke-opacity=".4" paint-order="stroke" opacity=".7">Edirne</text><text x="405.5" y="91.8" font-size="5.3" fill="#484848" stroke="#fff" stroke-width=".5" stroke-opacity=".4" paint-order="stroke" opacity=".7">Kırklareli</text><text x="346.9" y="91.2" font-size="5.0" fill="#484848" stroke="#fff" stroke-width=".5" stroke-opacity=".4" paint-order="stroke" opacity=".7">Кърджали</text><text x="519.1" y="87.5" font-size="5.3" fill="#484848" stroke="#fff" stroke-width=".5" stroke-opacity=".4" paint-order="stroke" opacity=".7">Bartın</text><text x="544.8" y="93.9" font-size="5.0" fill="#8b7799" font-style="italic" stroke="#fff" stroke-width=".5" stroke-opacity=".4" paint-order="stroke" opacity=".7">Kastamonu</text><text x="115.8" y="102.8" font-size="5.0" fill="#484848" stroke="#fff" stroke-width=".5" stroke-opacity=".4" paint-order="stroke" opacity=".7">Giugliano</text><text x="116.2" y="108.2" font-size="5.0" fill="#484848" stroke="#fff" stroke-width=".5" stroke-opacity=".4" paint-order="stroke" opacity=".7">in Campania</text><text x="132.5" y="117.8" font-size="5.0" fill="#8b7799" font-style="italic" stroke="#fff" stroke-width=".5" stroke-opacity=".4" paint-order="stroke" opacity=".7">Campania</text><text x="145.9" y="100.7" font-size="5.3" fill="#484848" stroke="#fff" stroke-width=".5" stroke-opacity=".4" paint-order="stroke" opacity=".7">Foggia</text><text x="151.5" y="124.6" font-size="5.3" fill="#484848" stroke="#fff" stroke-width=".5" stroke-opacity=".4" paint-order="stroke" opacity=".7">Potenza</text><text x="97.4" y="189.4" font-size="6.3" fill="#484848" stroke="#fff" stroke-width=".5" stroke-opacity=".4" paint-order="stroke" opacity=".7">Palermo</text><text x="145.9" y="187.7" font-size="5.3" fill="#484848" stroke="#fff" stroke-width=".5" stroke-opacity=".4" paint-order="stroke" opacity=".7">Messina</text><text x="7.3" y="134.5" font-size="4.8" fill="#8b7799" font-style="italic" stroke="#fff" stroke-width=".5" stroke-opacity=".4" paint-order="stroke" opacity=".7">Sardigna</text><text x="7.3" y="140.5" font-size="4.8" fill="#8b7799" font-style="italic" stroke="#fff" stroke-width=".5" stroke-opacity=".4" paint-order="stroke" opacity=".7">Sardegna</text><text x="6.2" y="165.8" font-size="4.8" fill="#484848" stroke="#fff" stroke-width=".5" stroke-opacity=".4" paint-order="stroke" opacity=".7">Casteddu</text><text x="5.8" y="171.4" font-size="4.8" fill="#484848" stroke="#fff" stroke-width=".5" stroke-opacity=".4" paint-order="stroke" opacity=".7">Cagliari</text><text x="174.6" y="101.9" font-size="6.2" fill="#484848" stroke="#fff" stroke-width=".5" stroke-opacity=".4" paint-order="stroke" opacity=".7">Bari</text><text x="174.6" y="114.0" font-size="5.0" fill="#8b7799" font-style="italic" stroke="#fff" stroke-width=".5" stroke-opacity=".4" paint-order="stroke" opacity=".7">Puglia</text><text x="184.2" y="121.9" font-size="5.3" fill="#484848" stroke="#fff" stroke-width=".5" stroke-opacity=".4" paint-order="stroke" opacity=".7">Taranto</text><text x="209.9" y="120.8" font-size="5.3" fill="#484848" stroke="#fff" stroke-width=".5" stroke-opacity=".4" paint-order="stroke" opacity=".7">Brindisi</text><text x="204.7" y="132.4" font-size="5.3" fill="#484848" stroke="#fff" stroke-width=".5" stroke-opacity=".4" paint-order="stroke" opacity=".7">Lecce</text><text x="169.4" y="140.6" font-size="5.0" fill="#484848" stroke="#fff" stroke-width=".5" stroke-opacity=".4" paint-order="stroke" opacity=".7">Corigliano-</text><text x="170.1" y="146.4" font-size="5.0" fill="#484848" stroke="#fff" stroke-width=".5" stroke-opacity=".4" paint-order="stroke" opacity=".7">Rossano</text><text x="171.2" y="167.4" font-size="5.0" fill="#8b7799" font-style="italic" stroke="#fff" stroke-width=".5" stroke-opacity=".4" paint-order="stroke" opacity=".7">Calabria</text><text x="241.6" y="106.2" font-size="7.0" fill="#75607f" stroke="#fff" stroke-width=".5" stroke-opacity=".4" paint-order="stroke" opacity=".7">Shqipëria</text><text x="274.5" y="105.5" font-size="5.0" fill="#484848" stroke="#fff" stroke-width=".5" stroke-opacity=".4" paint-order="stroke" opacity=".7">Битола</text><text x="262.9" y="117.9" font-size="5.2" fill="#484848" stroke="#fff" stroke-width=".5" stroke-opacity=".4" paint-order="stroke" opacity=".7">Korçë</text><text x="233.8" y="129.5" font-size="5.3" fill="#484848" stroke="#fff" stroke-width=".5" stroke-opacity=".4" paint-order="stroke" opacity=".7">Vlorë</text><text x="269.6" y="129.4" font-size="4.8" fill="#8b7799" font-style="italic" stroke="#fff" stroke-width=".5" stroke-opacity=".4" paint-order="stroke" opacity=".7">Αποκεντρωμένη</text><text x="268.5" y="134.5" font-size="4.8" fill="#8b7799" font-style="italic" stroke="#fff" stroke-width=".5" stroke-opacity=".4" paint-order="stroke" opacity=".7">Διοίκηση</text><text x="268.5" y="140.5" font-size="4.8" fill="#8b7799" font-style="italic" stroke="#fff" stroke-width=".5" stroke-opacity=".4" paint-order="stroke" opacity=".7">Ηπείρου -</text><text x="271.4" y="146.3" font-size="4.8" fill="#8b7799" font-style="italic" stroke="#fff" stroke-width=".5" stroke-opacity=".4" paint-order="stroke" opacity=".7">Δυτικής</text><text x="269.6" y="152.4" font-size="4.8" fill="#8b7799" font-style="italic" stroke="#fff" stroke-width=".5" stroke-opacity=".4" paint-order="stroke" opacity=".7">Μακεδονίας</text><text x="298.6" y="145.9" font-size="5.3" fill="#484848" stroke="#fff" stroke-width=".5" stroke-opacity=".4" paint-order="stroke" opacity=".7">Λάρισα</text><text x="309.8" y="153.7" font-size="5.3" fill="#484848" stroke="#fff" stroke-width=".5" stroke-opacity=".4" paint-order="stroke" opacity=".7">Βόλος</text><text x="289.0" y="172.2" font-size="7.0" fill="#75607f" stroke="#fff" stroke-width=".5" stroke-opacity=".4" paint-order="stroke" opacity=".7">Ελλάς</text><text x="290.4" y="190.4" font-size="4.8" fill="#8b7799" font-style="italic" stroke="#fff" stroke-width=".5" stroke-opacity=".4" paint-order="stroke" opacity=".7">Αποκεντρωμένη</text><text x="312.7" y="107.7" font-size="4.8" fill="#8b7799" font-style="italic" stroke="#fff" stroke-width=".5" stroke-opacity=".4" paint-order="stroke" opacity=".7">Αποκεντρωμένη</text><text x="312.7" y="113.3" font-size="4.8" fill="#8b7799" font-style="italic" stroke="#fff" stroke-width=".5" stroke-opacity=".4" paint-order="stroke" opacity=".7">Διοίκηση</text><text x="312.7" y="118.8" font-size="4.8" fill="#8b7799" font-style="italic" stroke="#fff" stroke-width=".5" stroke-opacity=".4" paint-order="stroke" opacity=".7">Μακεδονίας</text><text x="411.8" y="117.2" font-size="6.4" fill="#484848" stroke="#fff" stroke-width=".5" stroke-opacity=".4" paint-order="stroke" opacity=".7">Tekirdağ</text><text x="444.6" y="104.4" font-size="5.0" fill="#8b7799" font-style="italic" stroke="#fff" stroke-width=".5" stroke-opacity=".4" paint-order="stroke" opacity=".7">İstanbul</text><text x="465.9" y="112.7" font-size="6.4" fill="#484848" stroke="#fff" stroke-width=".5" stroke-opacity=".4" paint-order="stroke" opacity=".7">Kocaeli</text><text x="451.3" y="123.9" font-size="5.1" fill="#484848" stroke="#fff" stroke-width=".5" stroke-opacity=".4" paint-order="stroke" opacity=".7">Yalova</text><text x="443.5" y="134.1" font-size="5.0" fill="#8b7799" font-style="italic" stroke="#fff" stroke-width=".5" stroke-opacity=".4" paint-order="stroke" opacity=".7">Bursa</text><text x="395.9" y="137.9" font-size="5.0" fill="#8b7799" font-style="italic" stroke="#fff" stroke-width=".5" stroke-opacity=".4" paint-order="stroke" opacity=".7">Çanakkale</text><text x="420.5" y="141.3" font-size="5.0" fill="#8b7799" font-style="italic" stroke="#fff" stroke-width=".5" stroke-opacity=".4" paint-order="stroke" opacity=".7">Balıkesir</text><text x="420.0" y="154.1" font-size="6.4" fill="#484848" stroke="#fff" stroke-width=".5" stroke-opacity=".4" paint-order="stroke" opacity=".7">Balıkesir</text><text x="458.7" y="158.7" font-size="5.0" fill="#8b7799" font-style="italic" stroke="#fff" stroke-width=".5" stroke-opacity=".4" paint-order="stroke" opacity=".7">Kütahya</text><text x="425.2" y="175.5" font-size="5.0" fill="#8b7799" font-style="italic" stroke="#fff" stroke-width=".5" stroke-opacity=".4" paint-order="stroke" opacity=".7">Manisa</text><text x="454.0" y="174.2" font-size="5.3" fill="#484848" stroke="#fff" stroke-width=".5" stroke-opacity=".4" paint-order="stroke" opacity=".7">Uşak</text><text x="395.0" y="179.3" font-size="5.0" fill="#8b7799" font-style="italic" stroke="#fff" stroke-width=".5" stroke-opacity=".4" paint-order="stroke" opacity=".7">İzmir</text><text x="479.3" y="182.6" font-size="5.0" fill="#8b7799" font-style="italic" stroke="#fff" stroke-width=".5" stroke-opacity=".4" paint-order="stroke" opacity=".7">Afyonkarahisar</text><text x="490.9" y="150.7" font-size="5.0" fill="#8b7799" font-style="italic" stroke="#fff" stroke-width=".5" stroke-opacity=".4" paint-order="stroke" opacity=".7">Eskişehir</text><text x="492.3" y="111.1" font-size="5.1" fill="#484848" stroke="#fff" stroke-width=".5" stroke-opacity=".4" paint-order="stroke" opacity=".7">Düzce</text><text x="418.9" y="196.5" font-size="5.6" fill="#484848" stroke="#fff" stroke-width=".5" stroke-opacity=".4" paint-order="stroke" opacity=".7">Aydın</text><text x="506.8" y="100.7" font-size="5.2" fill="#484848" stroke="#fff" stroke-width=".5" stroke-opacity=".4" paint-order="stroke" opacity=".7">Zonguldak</text><text x="525.8" y="108.3" font-size="5.3" fill="#484848" stroke="#fff" stroke-width=".5" stroke-opacity=".4" paint-order="stroke" opacity=".7">Karabük</text><text x="502.8" y="121.2" font-size="5.2" fill="#484848" stroke="#fff" stroke-width=".5" stroke-opacity=".4" paint-order="stroke" opacity=".7">Bolu</text><text x="547.5" y="118.4" font-size="5.3" fill="#484848" stroke="#fff" stroke-width=".5" stroke-opacity=".4" paint-order="stroke" opacity=".7">Çankırı</text><text x="571.6" y="121.2" font-size="5.0" fill="#8b7799" font-style="italic" stroke="#fff" stroke-width=".5" stroke-opacity=".4" paint-order="stroke" opacity=".7">Çorum</text><text x="596.2" y="116.8" font-size="5.3" fill="#484848" stroke="#fff" stroke-width=".5" stroke-opacity=".4" paint-order="stroke" opacity=".7">Amasya</text><text x="612.3" y="126.2" font-size="5.3" fill="#484848" stroke="#fff" stroke-width=".5" stroke-opacity=".4" paint-order="stroke" opacity=".7">Tokat</text><text x="642.1" y="116.1" font-size="6.4" fill="#484848" stroke="#fff" stroke-width=".5" stroke-opacity=".4" paint-order="stroke" opacity=".7">Ordu</text><text x="530.3" y="137.5" font-size="6.8" fill="#333333" stroke="#fff" stroke-width=".5" stroke-opacity=".4" paint-order="stroke" opacity=".7">Ankara</text><text x="544.8" y="147.6" font-size="5.3" fill="#484848" stroke="#fff" stroke-width=".5" stroke-opacity=".4" paint-order="stroke" opacity=".7">Kırıkkale</text><text x="585.0" y="150.7" font-size="5.0" fill="#8b7799" font-style="italic" stroke="#fff" stroke-width=".5" stroke-opacity=".4" paint-order="stroke" opacity=".7">Yozgat</text><text x="627.5" y="152.5" font-size="5.0" fill="#8b7799" font-style="italic" stroke="#fff" stroke-width=".5" stroke-opacity=".4" paint-order="stroke" opacity=".7">Sivas</text><text x="559.3" y="167.7" font-size="5.1" fill="#484848" stroke="#fff" stroke-width=".5" stroke-opacity=".4" paint-order="stroke" opacity=".7">Kırşehir</text><text x="588.4" y="167.8" font-size="7.2" fill="#75607f" stroke="#fff" stroke-width=".5" stroke-opacity=".4" paint-order="stroke" opacity=".7">Türkiye</text><text x="556.7" y="182.5" font-size="6.4" fill="#484848" stroke="#fff" stroke-width=".5" stroke-opacity=".4" paint-order="stroke" opacity=".7">Aksaray</text><text x="598.5" y="182.6" font-size="5.0" fill="#8b7799" font-style="italic" stroke="#fff" stroke-width=".5" stroke-opacity=".4" paint-order="stroke" opacity=".7">Kayseri</text><text x="640.9" y="182.0" font-size="5.0" fill="#8b7799" font-style="italic" stroke="#fff" stroke-width=".5" stroke-opacity=".4" paint-order="stroke" opacity=".7">Malatya</text><text x="606.3" y="99.9" font-size="5.0" fill="#8b7799" font-style="italic" stroke="#fff" stroke-width=".5" stroke-opacity=".4" paint-order="stroke" opacity=".7">Samsun</text><text x="519.1" y="195.4" font-size="5.0" fill="#8b7799" font-style="italic" stroke="#fff" stroke-width=".5" stroke-opacity=".4" paint-order="stroke" opacity=".7">Konya</text></g><circle cx="79.3" cy="81.8" r=".9" fill="none" stroke="#555" stroke-width=".4"/><circle cx="531.5" cy="139.7" r=".9" fill="none" stroke="#555" stroke-width=".4"/><circle cx="241.9" cy="98.7" r=".9" fill="none" stroke="#555" stroke-width=".4"/><circle cx="277.6" cy="78.8" r=".9" fill="none" stroke="#555" stroke-width=".4"/><circle cx="271.9" cy="59.0" r=".9" fill="none" stroke="#555" stroke-width=".4"/><circle cx="229.4" cy="65.6" r=".9" fill="none" stroke="#555" stroke-width=".4"/><circle cx="210.6" cy="22.4" r=".9" fill="none" stroke="#555" stroke-width=".4"/><circle cx="78.2" cy="19.9" r=".9" fill="none" stroke="#555" stroke-width=".4"/>
</svg>
<div class="mk" style="left:615px;top:105.5px;width:54px;height:54px;box-shadow:0 0 10px 5px rgba(239,80,80,.32);"><span class="n" style="top:7.8px">0</span><span class="u" style="top:25.1px">W</span><span class="c" style="top:36.4px">3<i></i></span></div>
<div class="mk" style="left:689px;top:122.5px;width:59px;height:59px;border:3.5px solid #10131a;"><span class="n" style="top:6.8px">0</span><span class="u" style="top:24.1px">W</span><span class="c" style="top:35.4px">2<i></i></span></div>
<div class="mk" style="left:640px;top:257px;width:50px;height:50px;box-shadow:0 0 10px 5px rgba(239,80,80,.32);"><span class="n" style="top:10.0px">0</span><span class="u" style="top:27.0px">W</span></div>

    <div class="zoomc"><i style="left:7.5px;top:14.3px;width:12px;height:2.6px"></i><i style="left:12.2px;top:9.6px;width:2.6px;height:12px"></i><i style="left:7.5px;top:44.6px;width:12px;height:2.6px"></i></div>
    <div class="eyec"><svg width="31" height="31" viewBox="0 0 31 31"><g transform="translate(15.5 16) scale(.62) translate(-15.5 -15.5)"><path d="M7.5 15.5c2.400-3.800 5-5.200 8-5.200s5.600 1.400 8 5.200c-2.400 3.800-5 5.200-8 5.200s-5.600-1.400-8-5.200z" fill="#e9d6c3" stroke="#3a2a1e" stroke-width="1.6"/><circle cx="15.5" cy="15.5" r="3.900" fill="#6d4220"/><circle cx="15.5" cy="15.5" r="1.900" fill="#111"/></g></svg></div>
    <div class="eyetxt">Se</div>
    <div class="attr"><span class="flag"></span><a>Leaflet</a> | &copy; OpenStreetMap contributors</div>
  </div>
</section>

<section class="vp">
  <div class="sh"><span class="tg">&#8211;</span><h2>Virtual Plants</h2><span class="add"></span></div>
  <div class="grid">
    <div class="card"><div class="ch"><div class="t"><svg width="14" height="14"><use href="#i-bld"/></svg>Bulgaria Portfolio<span class="bd">!</span></div><div class="s">BG &bull; 2 groups &bull; 2 inv</div><div class="st">1/2</div></div>
      <div class="ms"><div class="m"><span class="ic"><svg width="16" height="16"><use href="#i-sun"/></svg></span><span class="n amber">0</span><span class="u">W</span><span class="k">PV</span></div><div class="m"><span class="ic"><svg width="16" height="16"><use href="#i-chart"/></svg></span><span class="n white">2</span><span class="u">grp</span><span class="k">Groups</span></div><div class="m"><span class="ic"><svg width="16" height="16"><use href="#i-plug"/></svg></span><span class="n white">2</span><span class="u">inv</span><span class="k">Inverters</span></div></div></div>
    <div class="card"><div class="ch"><div class="t"><svg width="14" height="14"><use href="#i-bld"/></svg>Office Shelly<span class="bd">!</span></div><div class="s">BG &bull; 2 groups &bull; 2 inv</div><div class="st">1/2</div></div>
      <div class="ms"><div class="m"><span class="ic"><svg width="16" height="16"><use href="#i-sun"/></svg></span><span class="n amber">0</span><span class="u">W</span><span class="k">PV</span></div><div class="m"><span class="ic"><svg width="16" height="16"><use href="#i-chart"/></svg></span><span class="n white">2</span><span class="u">grp</span><span class="k">Groups</span></div><div class="m"><span class="ic"><svg width="16" height="16"><use href="#i-plug"/></svg></span><span class="n white">2</span><span class="u">inv</span><span class="k">Inverters</span></div></div></div>
    <div class="card"><div class="ch"><div class="t"><svg width="14" height="14"><use href="#i-bld"/></svg>Greece as a Virtual<span class="bd">!</span></div><div class="s">GR &bull; 1 groups &bull; 1 inv</div><div class="st">1/1</div></div>
      <div class="ms"><div class="m"><span class="ic"><svg width="16" height="16"><use href="#i-sun"/></svg></span><span class="n amber">0</span><span class="u">W</span><span class="k">PV</span></div><div class="m"><span class="ic"><svg width="16" height="16"><use href="#i-chart"/></svg></span><span class="n white">1</span><span class="u">grp</span><span class="k">Groups</span></div><div class="m"><span class="ic"><svg width="16" height="16"><use href="#i-plug"/></svg></span><span class="n white">1</span><span class="u">inv</span><span class="k">Inverters</span></div></div></div>
  </div>
</section>

<section style="margin-bottom:36px">
  <div class="sh"><span class="tg">&#8211;</span><h2>My Groups</h2><span class="add"></span></div>
  <div class="grid">
    <div class="card"><div class="ch"><div class="t">Greece<span class="bd">1</span></div><div class="s">Home &bull; 1 inv</div><div class="st">1/1</div></div>
      <div class="ms"><div class="m"><span class="ic"><svg width="16" height="16"><use href="#i-sun"/></svg></span><span class="n amber">0</span><span class="u">W</span><span class="k">PV</span></div><div class="m"><span class="ic"><svg width="16" height="16"><use href="#i-bolt"/></svg></span><span class="n green">61</span><span class="u">W</span><span class="k">Import</span></div><div class="m"><span class="ic"><svg width="16" height="16"><use href="#i-house"/></svg></span><span class="n blue">382</span><span class="u">W</span><span class="k">Load</span></div><div class="m"><span class="ic"><svg width="16" height="16"><use href="#i-bat"/></svg></span><span class="n green">57</span><span class="u">%</span><span class="k">SOC</span></div></div></div>
    <div class="card"><div class="ch"><div class="t">VP</div><div class="s">Virtual &bull; 0 inv</div><div class="st red">0/0</div></div>
      <div class="ms"><div class="m"><span class="ic"><svg width="16" height="16"><use href="#i-sun"/></svg></span><span class="n amber">0</span><span class="u">W</span><span class="k">PV</span></div><div class="m"><span class="ic"><svg width="16" height="16"><use href="#i-bolt"/></svg></span><span class="n green">0</span><span class="u">W</span><span class="k">Import</span></div><div class="m"><span class="ic"><svg width="16" height="16"><use href="#i-house"/></svg></span><span class="n blue">0</span><span class="u">W</span><span class="k">Load</span></div></div></div>
    <div class="card"><div class="ch"><div class="t">Mirev Deye<span class="bd">1</span></div><div class="s">Eremiya &bull; 2 inv</div><div class="st">2/2</div></div>
      <div class="ms"><div class="m"><span class="ic"><svg width="16" height="16"><use href="#i-sun"/></svg></span><span class="n amber">0</span><span class="u">W</span><span class="k">PV</span></div><div class="m"><span class="ic"><svg width="16" height="16"><use href="#i-bolt"/></svg></span><span class="n green">2.7</span><span class="u">kW</span><span class="k">Import</span></div><div class="m"><span class="ic"><svg width="16" height="16"><use href="#i-house"/></svg></span><span class="n blue">-522</span><span class="u">W</span><span class="k">Load</span></div><div class="m"><span class="ic"><svg width="16" height="16"><use href="#i-bat"/></svg></span><span class="n green">83</span><span class="u">%</span><span class="k">SOC</span></div></div></div>
    <div class="card"><div class="ch"><div class="t">Test Group</div><div class="s">No where &bull; 2 inv</div><div class="st">1/2</div></div>
      <div class="ms"><div class="m"><span class="ic"><svg width="16" height="16"><use href="#i-sun"/></svg></span><span class="n amber">2.5</span><span class="u">kW</span><span class="k">PV</span></div><div class="m"><span class="ic"><svg width="16" height="16"><use href="#i-bolt"/></svg></span><span class="n green">39</span><span class="u">W</span><span class="k">Import</span></div><div class="m"><span class="ic"><svg width="16" height="16"><use href="#i-house"/></svg></span><span class="n blue">3</span><span class="u">W</span><span class="k">Load</span></div></div></div>
  </div>
</section>

<section>
  <div class="sh"><span class="tg">&#8211;</span><h2><svg width="18" height="18" style="margin-right:5px"><use href="#i-link"/></svg>Shared with Me</h2></div>
  <div class="grid">
    <div class="card short"><div class="ch"><div class="t">Vidlich<span class="vo">View Only</span></div><div class="s">Home 42.68021094335708, 23.29...</div><div class="st">1/1</div></div>
      <div class="ms"><div class="m"><span class="ic"><svg width="16" height="16"><use href="#i-sun"/></svg></span><span class="n amber">0</span><span class="u">W</span><span class="k">PV</span></div><div class="m"><span class="ic"><svg width="16" height="16"><use href="#i-bolt"/></svg></span><span class="n green">4.4</span><span class="u">kW</span><span class="k">Import</span></div><div class="m"><span class="ic"><svg width="16" height="16"><use href="#i-house"/></svg></span><span class="n blue">4.3</span><span class="u">kW</span><span class="k">Load</span></div></div></div>
  </div>
</section>
</main>
</div></div>
</body>
</html>
